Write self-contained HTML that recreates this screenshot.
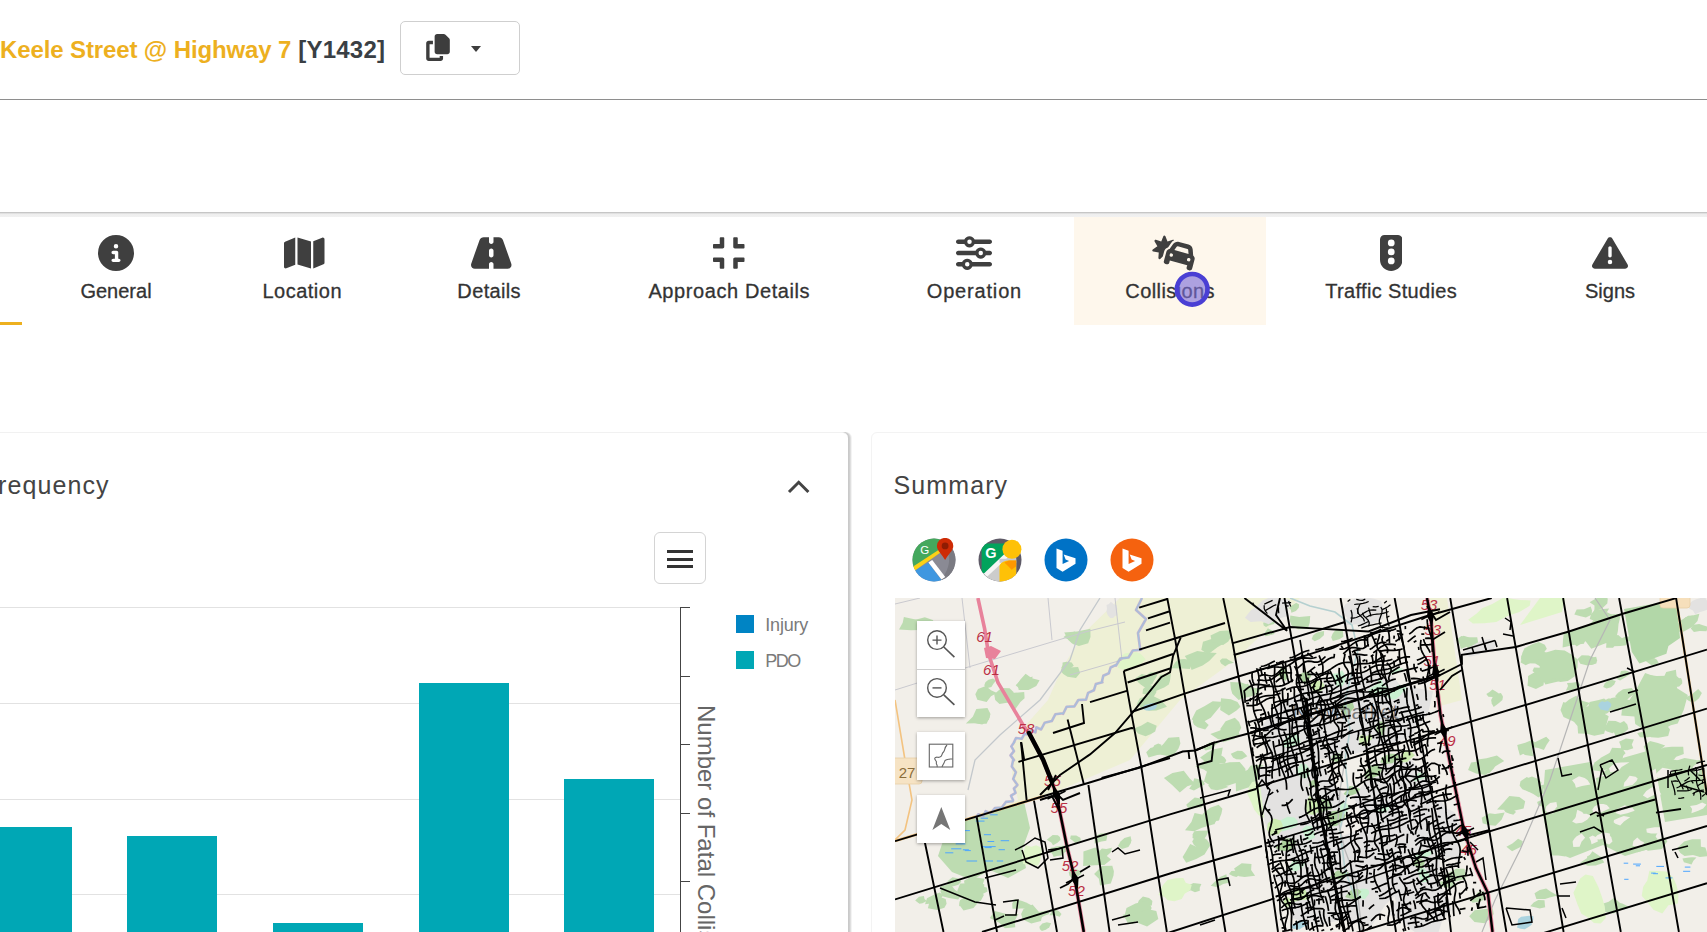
<!DOCTYPE html>
<html><head><meta charset="utf-8"><title>Keele Street @ Highway 7</title>
<style>
html,body{margin:0;padding:0;background:#fff;}
body{width:1707px;height:932px;overflow:hidden;position:relative;font-family:"Liberation Sans",sans-serif;color:#333;}
.abs{position:absolute;}
#title{left:0px;top:35px;font-size:24px;font-weight:bold;line-height:30px;white-space:nowrap;color:#EDB01F;letter-spacing:-0.12px;}
#title span{color:#3a3f44;letter-spacing:0.25px;margin-left:0.3px;}
#copybtn{left:400px;top:21px;width:118px;height:52px;border:1px solid #cfcfcf;border-radius:5px;background:#fff;}
#caret{left:471px;top:46px;width:0;height:0;border-left:5.5px solid transparent;border-right:5.5px solid transparent;border-top:6px solid #3d3d3d;}
#hr1{left:0;top:99px;width:1707px;height:1px;background:#8e8e8e;}
#hr2{left:0;top:212px;width:1707px;height:5px;background:linear-gradient(#c6c6c6 0,#c6c6c6 20%,#e0e0e0 20%,#e0e0e0 40%,#eeeeee 40%,#f1f1f1 100%);}
.tab{position:absolute;top:217px;height:108px;}
.tab .lbl{position:absolute;left:50%;transform:translateX(-50%);top:60px;line-height:28px;font-size:20px;color:#333;white-space:nowrap;-webkit-text-stroke:0.3px #333;}
.tab svg{position:absolute;top:17.500px;height:36px;fill:#3f3f3f;}
#underline{left:0;top:322px;width:22px;height:3px;background:#EDB01F;}
#cursor{left:1174.700px;top:271.700px;width:26px;height:26px;border-radius:50%;border:4.500px solid #4a3fd4;background:rgba(122,108,216,0.62);}
.card{position:absolute;background:#fff;}
.h5{position:absolute;font-size:25px;color:#444;white-space:nowrap;line-height:30px;}
.grid{position:absolute;left:0;width:681px;height:1px;background:#e2e2e2;}
.bar{position:absolute;width:90px;background:#00A7B5;bottom:0;}
.tick{position:absolute;left:681px;width:9px;height:1px;background:#444;}
.leg{position:absolute;left:736px;width:18px;height:18px;}
.legt{position:absolute;left:765.300px;font-size:18px;line-height:22px;color:#7a7a7a;white-space:nowrap;}
.mbtn{position:absolute;left:917px;width:48px;background:#fff;box-shadow:0 1px 3px rgba(0,0,0,0.35);}
</style></head><body>
<div id="title" class="abs">Keele Street @ Highway 7 <span>[Y1432]</span></div>
<div id="copybtn" class="abs"></div>
<svg class="abs" style="left:426px;top:34px;width:24px;height:27px;fill:#3d3d3d" viewBox="0 0 448 512"><path d="M208 0H332.100c12.700 0 24.900 5.100 33.900 14.100l67.900 67.900c9 9 14.100 21.200 14.100 33.900V336c0 26.500-21.500 48-48 48H208c-26.500 0-48-21.500-48-48V48c0-26.500 21.500-48 48-48zM48 128h80v64H64V448H256V416h64v48c0 26.500-21.500 48-48 48H48c-26.500 0-48-21.500-48-48V176c0-26.500 21.500-48 48-48z"/></svg>
<div id="caret" class="abs"></div>
<div id="hr1" class="abs"></div>
<div id="hr2" class="abs"></div>

<div class="abs" style="left:1074px;top:217px;width:192px;height:108px;background:#FEF7EC;"></div>

<div class="tab" style="left:66px;width:100px;"><svg viewBox="0 0 512 512" style="left:32px;width:36px"><path d="M256 512A256 256 0 1 0 256 0a256 256 0 1 0 0 512zM216 336h24V272H216c-13.300 0-24-10.700-24-24s10.700-24 24-24h48c13.300 0 24 10.700 24 24v88h8c13.300 0 24 10.700 24 24s-10.700 24-24 24H216c-13.300 0-24-10.700-24-24s10.700-24 24-24zm40-208a32 32 0 1 1 0 64 32 32 0 1 1 0-64z"/></svg><div class="lbl">General</div></div>

<div class="tab" style="left:252px;width:100px;"><svg viewBox="0 0 576 512" style="left:32px;width:40.500px"><path d="M384 476.100L192 421.200V35.900L384 90.800V476.100zm32-1.200V88.400L543.100 37.500c15.800-6.300 32.900 5.300 32.900 22.300V394.600c0 9.800-6 18.600-15.100 22.300L416 474.800zM15.100 95.100L160 37.200V423.600L32.900 474.500C17.100 480.800 0 469.200 0 452.200V117.400c0-9.800 6-18.600 15.100-22.300z"/></svg><div class="lbl" style="letter-spacing:0.50px;margin-left:0.25px">Location</div></div>

<div class="tab" style="left:439px;width:100px;"><svg viewBox="0 0 576 512" style="left:32px;width:40.500px"><path d="M256 32H181.200c-27.100 0-51.300 17.100-60.300 42.600L3.100 407.200C1.100 413 0 419.200 0 425.400C0 455.500 24.500 480 54.600 480H256V416c0-17.700 14.300-32 32-32s32 14.300 32 32v64H521.400c30.200 0 54.600-24.500 54.600-54.600c0-6.200-1.100-12.400-3.100-18.200L455.100 74.600C446 49.100 421.900 32 394.800 32H320V96c0 17.700-14.300 32-32 32s-32-14.300-32-32V32zm64 192v64c0 17.700-14.300 32-32 32s-32-14.300-32-32V224c0-17.700 14.300-32 32-32s32 14.300 32 32z"/></svg><div class="lbl" style="letter-spacing:0.35px;margin-left:0.17px">Details</div></div>

<div class="tab" style="left:679px;width:100px;"><svg viewBox="0 0 448 512" style="left:34px;width:31.500px"><path d="M436 192H312c-13.300 0-24-10.700-24-24V44c0-6.600 5.400-12 12-12h40c6.600 0 12 5.400 12 12v84h84c6.600 0 12 5.400 12 12v40c0 6.600-5.400 12-12 12zm-276-24V44c0-6.600-5.400-12-12-12h-40c-6.600 0-12 5.400-12 12v84H12c-6.600 0-12 5.400-12 12v40c0 6.600 5.400 12 12 12h124c13.300 0 24-10.700 24-24zm0 300V344c0-13.300-10.700-24-24-24H12c-6.600 0-12 5.400-12 12v40c0 6.600 5.400 12 12 12h84v84c0 6.600 5.400 12 12 12h40c6.600 0 12-5.400 12-12zm192 0v-84h84c6.600 0 12-5.400 12-12v-40c0-6.600-5.400-12-12-12H312c-13.300 0-24 10.700-24 24v124c0 6.600 5.400 12 12 12h40c6.600 0 12-5.400 12-12z"/></svg><div class="lbl" style="letter-spacing:0.59px;margin-left:0.29px">Approach Details</div></div>

<div class="tab" style="left:924px;width:100px;"><svg viewBox="0 0 512 512" style="left:32px;width:36px"><path d="M0 416c0 17.700 14.300 32 32 32l54.700 0c12.300 28.300 40.500 48 73.300 48s61-19.700 73.300-48L480 448c17.700 0 32-14.300 32-32s-14.300-32-32-32l-246.700 0c-12.300-28.300-40.500-48-73.300-48s-61 19.700-73.300 48L32 384c-17.700 0-32 14.300-32 32zm128 0a32 32 0 1 1 64 0 32 32 0 1 1 -64 0zM320 256a32 32 0 1 1 64 0 32 32 0 1 1 -64 0zm32-80c-32.800 0-61 19.700-73.300 48L32 224c-17.700 0-32 14.300-32 32s14.300 32 32 32l246.700 0c12.300 28.300 40.500 48 73.300 48s61-19.700 73.300-48l54.700 0c17.700 0 32-14.300 32-32s-14.300-32-32-32l-54.700 0c-12.300-28.300-40.500-48-73.300-48zM192 128a32 32 0 1 1 0-64 32 32 0 1 1 0 64zm73.300-64C253 35.700 224.800 16 192 16s-61 19.700-73.300 48L32 64C14.300 64 0 78.300 0 96s14.300 32 32 32l86.700 0c12.300 28.300 40.500 48 73.300 48s61-19.700 73.300-48L480 128c17.700 0 32-14.300 32-32s-14.300-32-32-32L265.300 64z"/></svg><div class="lbl" style="letter-spacing:0.83px;margin-left:0.41px">Operation</div></div>

<div class="tab" style="left:1120px;width:100px;"><svg viewBox="0 0 640 512" style="left:32px;width:45px"><path d="M176 8c-6.600 0-12.400 4-14.900 10.100l-29.400 74L55.600 68.900c-6.300-1.900-13.100 .2-17.200 5.300s-4.600 12.200-1.400 17.900l39.500 69.100L10.900 206.400c-5.400 3.700-8 10.300-6.500 16.700s6.700 11.200 13.100 12.200l78.700 12.200L90.600 327c-.5 6.500 3.100 12.700 9 15.500s12.900 1.800 17.800-2.600l35.300-32.500 9.500-35.400 10.400-38.600c8-29.900 30.500-52.100 57.900-60.900l41-59.200c11.300-16.300 26.400-28.900 43.500-37.200c-.4-.6-.8-1.200-1.300-1.800c-4.100-5.100-10.900-7.200-17.200-5.300L220.300 92.100l-29.400-74C188.400 12 182.600 8 176 8zM367.700 161.500l135.600 36.300c6.500 1.800 11.300 7.400 11.800 14.200l4.600 56.500-201.500-54 32.200-46.600c3.800-5.600 10.800-8.100 17.300-6.400zm-69.900-30l-47.900 69.300c-21.600 3-40.300 18.600-46.300 41l-10.400 38.600-16.600 61.800-8.300 30.900c-4.600 17.100 5.600 34.600 22.600 39.200l15.500 4.100c17.100 4.600 34.600-5.600 39.200-22.600l8.300-30.900 247.300 66.300-8.300 30.900c-4.600 17.100 5.600 34.600 22.600 39.200l15.500 4.100c17.100 4.600 34.600-5.600 39.200-22.600l8.300-30.900L595 388l10.400-38.600c6-22.400-2.500-45.200-19.600-58.700l-6.800-84c-2.700-33.700-26.400-62-59-70.800L384.200 99.700c-32.700-8.800-67.300 4-86.500 31.800zm-17 131a24 24 0 1 1 -12.400 46.400 24 24 0 1 1 12.400-46.400zm217.900 83.200A24 24 0 1 1 545 358.100a24 24 0 1 1 -46.400-12.400z"/></svg><div class="lbl" style="letter-spacing:0.41px;margin-left:0.20px">Collisions</div></div>

<div class="tab" style="left:1341px;width:100px;"><svg viewBox="0 0 320 512" style="left:38.750px;width:22.500px"><path d="M64 0C28.700 0 0 28.700 0 64V352c0 88.400 71.600 160 160 160s160-71.600 160-160V64c0-35.300-28.700-64-64-64H64zm96 416a48 48 0 1 1 0-96 48 48 0 1 1 0 96zm48-176a48 48 0 1 1 -96 0 48 48 0 1 1 96 0zM160 160a48 48 0 1 1 0-96 48 48 0 1 1 0 96z"/></svg><div class="lbl" style="letter-spacing:0.35px;margin-left:0.17px">Traffic Studies</div></div>

<div class="tab" style="left:1560px;width:100px;"><svg viewBox="0 0 512 512" style="left:32px;width:36px"><path d="M256 32c14.200 0 27.300 7.500 34.500 19.800l216 368c7.300 12.400 7.300 27.700 .2 40.100S486.300 480 472 480H40c-14.300 0-27.600-7.700-34.700-20.100s-7-27.800 .2-40.100l216-368C228.700 39.500 241.800 32 256 32zm0 128c-13.300 0-24 10.700-24 24V296c0 13.300 10.700 24 24 24s24-10.700 24-24V184c0-13.300-10.700-24-24-24zm32 224a32 32 0 1 0 -64 0 32 32 0 1 0 64 0z"/></svg><div class="lbl">Signs</div></div>

<div id="underline" class="abs"></div>
<svg class="abs" style="left:1170px;top:267px;width:44px;height:44px" viewBox="0 0 44 44"><circle cx="22.200" cy="22.300" r="15.300" fill="rgba(122,108,216,0.62)" stroke="#4a3fd4" stroke-width="4.600"/></svg>

<!-- left card -->
<div class="card" style="left:-20px;top:432px;width:868px;height:520px;border-top:1px solid #f1f1f1;border-radius:0 6px 0 0;box-shadow:1px 0 0 #c9c9c9,2px 0 0 #cfcfcf,3px 0 0 #dfdfdf,4px 0 0 #f3f3f3;"></div>
<div class="h5" style="left:-2px;top:469.500px;letter-spacing:1.100px">requency</div>
<svg class="abs" style="left:785px;top:477px;width:28px;height:20px" viewBox="0 0 28 20"><path d="M4 15 L13.700 5.300 L23.400 15" fill="none" stroke="#444" stroke-width="3"/></svg>
<div class="abs" style="left:654px;top:532px;width:50px;height:50px;border:1px solid #d4d4d4;border-radius:6px;background:#fff;"></div>
<div class="abs" style="left:667px;top:550px;width:26px;height:3px;background:#333;"></div>
<div class="abs" style="left:667px;top:557.500px;width:26px;height:3px;background:#333;"></div>
<div class="abs" style="left:667px;top:565px;width:26px;height:3px;background:#333;"></div>

<div class="grid" style="top:607px"></div>
<div class="grid" style="top:703px"></div>
<div class="grid" style="top:799px"></div>
<div class="grid" style="top:894px"></div>
<div class="bar" style="left:-18px;top:827px"></div>
<div class="bar" style="left:127px;top:836px"></div>
<div class="bar" style="left:273px;top:923px"></div>
<div class="bar" style="left:418.500px;top:683px"></div>
<div class="bar" style="left:564px;top:779px"></div>
<div class="abs" style="left:680px;top:607px;width:1px;height:330px;background:#444;"></div>
<div class="tick" style="top:607px"></div>
<div class="tick" style="top:676px"></div>
<div class="tick" style="top:744px"></div>
<div class="tick" style="top:813px"></div>
<div class="tick" style="top:881px"></div>
<div class="leg" style="top:615px;background:#0084C4;"></div>
<div class="legt" style="top:613.500px;letter-spacing:-0.200px">Injury</div>
<div class="leg" style="top:651px;background:#00A7B5;"></div>
<div class="legt" style="top:649.500px;letter-spacing:-1.500px">PDO</div>
<div class="abs" style="left:717.600px;top:705px;transform-origin:0 0;transform:rotate(90deg);font-size:24px;line-height:24px;color:#666;white-space:nowrap;">Number of Fatal Collisions</div>

<!-- right card -->
<div class="card" style="left:871px;top:432px;width:860px;height:520px;border:1px solid #f3f3f3;border-radius:6px 0 0 0;"></div>
<div class="h5" style="left:893.500px;top:469.500px;letter-spacing:1.100px">Summary</div>

<svg class="abs" style="left:911.5px;top:537.500px;width:44px;height:44px" viewBox="0 0 44 44">
<defs><clipPath id="c1"><circle cx="22" cy="22" r="21.500"/></clipPath></defs>
<g clip-path="url(#c1)">
<rect width="44" height="44" fill="#8A8A94"/>
<path d="M36 14 C39 24 36 34 27 44 L44 44 L44 0 Z" fill="#7A7A82"/>
<polygon points="0,0 34,0 34,8 0,30" fill="#44A85D"/>
<polygon points="0,36 3,32.500 16.400,24.500 29.500,42 29,44 0,44" fill="#3F97E0"/>
<polygon points="0,29.300 28,10.900 30,13.500 1.500,33.500 0,34" fill="#FBD116"/>
<polygon points="16.400,24.500 20.200,21.900 33.300,39 29.500,41.600" fill="#ffffff"/>
</g>
<path d="M33.100 22 C30 16.500 24.900 12.600 24.900 8.100 A8.200 8.200 0 0 1 41.300 8.100 C41.300 12.600 36.200 16.500 33.100 22 Z" fill="#CE2B05"/>
<circle cx="33.100" cy="7.900" r="3.400" fill="#8E1C03"/>
<text x="12.700" y="15.600" font-family="Liberation Sans, sans-serif" font-size="11.500" fill="#fff" text-anchor="middle">G</text>
</svg>
<svg class="abs" style="left:977.5px;top:537.500px;width:44px;height:44px" viewBox="0 0 44 44">
<defs><clipPath id="c2"><circle cx="22" cy="22" r="21.500"/></clipPath></defs>
<g clip-path="url(#c2)">
<rect width="44" height="44" fill="#5E5A67"/>
<polygon points="28,19.200 38.200,19.200 38.200,44 6,44 6,38.600" fill="#CCCCCC"/>
<polygon points="25.700,14 30,19.200 9.300,38.600 5,35.600" fill="#F5F5F5"/>
<path d="M3.600 7.400 L5.100 5.500 L28 5.500 L28 14.500 L5.900 35.600 L3.600 33.700 Z" fill="#02A35C"/>
<rect x="21.500" y="20.800" width="16.700" height="4" fill="#C9C9D2"/>
<path d="M21.500 44 L21.500 28 C23 24 27 22.600 31 22.600 L38.200 22.600 L38.200 44 Z" fill="#FEC107"/>
<polygon points="26.400,24.500 31,22.600 38.200,22.600 38.200,28.300 33.700,31.800" fill="#FF9800"/>
</g>
<circle cx="33.900" cy="11.200" r="9.500" fill="#FEC107"/>
<text x="13" y="19.500" font-family="Liberation Sans, sans-serif" font-size="14.500" font-weight="bold" fill="#fff" text-anchor="middle">G</text>
</svg>
<svg class="abs" style="left:1043.5px;top:537.500px;width:44px;height:44px" viewBox="0 0 44 44">
<circle cx="22" cy="22" r="21.500" fill="#0072C6"/>
<polygon points="12.500,10.400 18.600,12.700 18.600,26 25.100,23 21.600,21.500 19.700,16.500 31.500,20.300 31.500,25.700 18.600,33.700 12.500,29.900" fill="#fff"/>
</svg>
<svg class="abs" style="left:1109.5px;top:537.500px;width:44px;height:44px" viewBox="0 0 44 44">
<circle cx="22" cy="22" r="21.500" fill="#F5620F"/>
<polygon points="12.500,10.400 18.600,12.700 18.600,26 25.100,23 21.600,21.500 19.700,16.500 31.500,20.300 31.500,25.700 18.600,33.700 12.500,29.900" fill="#fff"/>
</svg>

<div class="abs" id="map" style="left:895px;top:598px;width:812px;height:334px;overflow:hidden;background:#f2efe9;">
<svg viewBox="895 598 812 334" width="812" height="334" style="position:absolute;left:0;top:0">
<rect x="895" y="598" width="812" height="334" fill="#f2efe9"/>
<polygon points="1142.0,598.0 1136.0,610.0 1146.0,619.0 1138.0,633.0 1140.0,648.0 1115.0,664.0 1101.0,681.0 1085.0,698.0 1062.0,712.0 1040.0,728.0 1014.0,742.0 1012.0,775.0 1018.0,800.0 975.0,815.0 985.0,813.0 1060.0,790.0 1130.0,760.0 1180.0,700.0 1235.0,660.0 1300.0,598.0" fill="#eef0d5" />
<polygon points="1142.0,598.0 1120.0,598.0 1085.0,632.0 1062.0,668.0 1048.0,700.0 1025.0,726.0 1040.0,728.0 1062.0,712.0 1085.0,698.0 1101.0,681.0 1115.0,664.0 1140.0,648.0 1138.0,633.0 1146.0,619.0 1136.0,610.0" fill="#eef0d5" />
<polygon points="1427.0,598.0 1447.0,598.0 1462.0,700.0 1440.0,706.0" fill="#eef0d5" />
<polygon points="1540.0,598.0 1565.0,598.0 1562.0,612.0 1520.0,625.0" fill="#dff5c8" />
<polygon points="984.2,862.9 982.7,868.9 976.7,872.6 970.2,877.1 968.4,872.4 965.7,868.7 972.1,865.0 977.3,863.3" fill="#bddcb1" />
<polygon points="986.8,887.6 987.5,891.4 982.2,894.2 977.8,894.4 972.5,894.0 977.2,890.0 978.4,885.9 982.9,886.8" fill="#bddcb1" />
<polygon points="981.0,889.1 978.2,892.2 974.1,894.4 970.7,892.5 969.1,890.7 969.5,888.4 972.9,885.3 977.7,886.7" fill="#bddcb1" />
<polygon points="984.6,878.7 982.7,884.4 975.5,887.0 968.8,889.2 964.9,886.1 964.0,880.8 971.5,876.4 977.8,877.7" fill="#bddcb1" />
<polygon points="984.2,887.4 985.9,890.3 981.1,893.0 975.9,892.2 971.7,890.0 975.7,886.7 979.1,883.6 984.3,884.2" fill="#bddcb1" />
<polygon points="983.9,895.0 980.7,900.9 970.7,898.1 960.1,897.8 957.3,890.8 960.2,883.4 973.1,883.3 979.7,889.7" fill="#bddcb1" />
<polygon points="966.8,901.5 965.9,903.4 963.5,904.5 959.1,906.3 959.3,903.3 959.6,901.3 962.3,899.5 967.1,898.3" fill="#bddcb1" />
<polygon points="962.3,894.1 958.2,899.5 949.0,897.9 942.4,896.2 940.5,891.8 940.8,886.0 950.5,884.2 955.1,890.1" fill="#bddcb1" />
<polygon points="961.4,881.6 958.4,884.8 954.3,885.9 949.6,887.1 947.3,884.6 947.7,881.1 952.5,877.2 958.8,878.4" fill="#bddcb1" />
<polygon points="981.4,892.3 980.2,900.1 973.5,907.9 963.5,910.6 959.9,905.7 960.0,900.2 966.2,896.1 973.3,890.8" fill="#bddcb1" />
<polygon points="1059.9,837.1 1060.6,839.7 1057.5,842.7 1053.0,845.2 1051.3,842.5 1046.7,839.8 1052.7,835.0 1057.9,835.3" fill="#bddcb1" />
<polygon points="1066.6,845.6 1066.9,851.3 1059.5,855.3 1053.6,856.9 1052.1,853.6 1052.3,850.6 1054.9,846.8 1059.9,845.9" fill="#bddcb1" />
<polygon points="1081.0,840.6 1078.0,841.8 1075.0,843.1 1072.9,840.8 1070.1,838.8 1070.8,835.6 1076.2,835.4 1080.3,837.7" fill="#bddcb1" />
<polygon points="1064.2,852.1 1063.1,855.7 1057.3,855.6 1053.6,854.2 1049.0,851.9 1050.8,847.8 1057.4,846.7 1063.3,848.5" fill="#bddcb1" />
<polygon points="1081.5,873.2 1078.7,875.7 1075.7,877.1 1071.5,877.7 1069.4,875.5 1068.7,871.9 1074.1,868.4 1079.5,870.5" fill="#bddcb1" />
<polygon points="1131.4,840.2 1130.9,843.0 1128.4,846.9 1121.9,848.9 1118.0,846.1 1120.5,841.6 1124.4,837.9 1130.6,836.3" fill="#bddcb1" />
<polygon points="1111.2,859.4 1104.3,865.0 1094.9,865.2 1083.1,865.9 1083.4,858.7 1083.4,851.4 1095.3,847.6 1103.9,853.8" fill="#bddcb1" />
<polygon points="1113.9,871.3 1113.5,875.6 1110.8,883.6 1100.0,885.4 1098.9,878.8 1094.1,873.9 1102.0,866.0 1112.3,865.7" fill="#bddcb1" />
<polygon points="1111.9,847.8 1110.6,852.5 1106.8,856.1 1101.6,859.2 1099.6,856.1 1097.7,853.0 1101.9,848.6 1106.3,849.0" fill="#bddcb1" />
<polygon points="1107.0,837.6 1106.3,840.7 1101.5,841.6 1094.7,843.5 1094.6,839.3 1095.7,836.0 1100.4,833.6 1107.4,833.3" fill="#bddcb1" />
<polygon points="1141.6,916.7 1136.5,920.2 1132.8,924.0 1127.3,922.4 1126.0,919.4 1122.5,914.7 1131.1,914.0 1137.8,913.1" fill="#bddcb1" />
<polygon points="1152.4,900.9 1151.8,905.5 1144.6,905.9 1138.7,907.3 1137.6,903.7 1138.8,900.5 1142.9,896.5 1149.1,897.9" fill="#bddcb1" />
<polygon points="1151.7,907.9 1148.2,914.8 1139.5,919.6 1128.4,920.7 1124.9,914.6 1126.5,908.0 1135.5,903.5 1148.1,900.6" fill="#bddcb1" />
<polygon points="1156.3,911.1 1158.3,919.0 1147.1,926.5 1138.2,923.1 1134.1,920.2 1132.2,914.8 1140.8,911.4 1148.3,909.2" fill="#bddcb1" />
<polygon points="1014.7,920.8 1015.3,927.2 1004.8,928.2 999.2,922.8 989.8,917.9 994.8,911.0 1006.5,913.9 1018.5,913.9" fill="#bddcb1" />
<polygon points="1042.2,915.3 1041.0,921.1 1031.3,923.5 1022.8,919.4 1021.1,913.9 1023.6,908.8 1032.5,904.4 1038.3,911.3" fill="#bddcb1" />
<polygon points="1049.9,911.4 1048.7,914.3 1045.0,915.4 1040.4,918.1 1038.1,915.5 1038.3,912.0 1043.6,911.2 1046.6,910.5" fill="#bddcb1" />
<polygon points="1032.9,906.1 1026.3,908.4 1021.1,908.6 1012.5,908.7 1012.2,903.4 1014.9,899.1 1022.1,900.9 1026.1,902.6" fill="#bddcb1" />
<polygon points="1061.5,913.9 1059.7,916.8 1054.7,915.3 1049.3,915.3 1051.3,912.3 1050.3,908.9 1055.6,909.5 1059.0,911.3" fill="#bddcb1" />
<polygon points="1051.1,923.2 1049.3,927.2 1045.8,929.8 1041.9,931.0 1039.9,929.3 1039.4,926.7 1042.3,923.4 1046.9,922.3" fill="#bddcb1" />
<polygon points="943.1,895.3 940.3,899.6 937.5,903.4 932.7,903.3 925.0,904.2 927.0,898.3 933.4,895.1 939.6,892.4" fill="#bddcb1" />
<polygon points="946.6,903.7 944.4,907.8 937.3,910.0 927.9,908.3 929.3,902.5 929.5,897.2 938.2,896.2 945.7,898.9" fill="#bddcb1" />
<polygon points="924.5,899.0 926.8,901.0 922.5,903.2 919.5,903.7 917.8,902.5 915.2,900.4 919.0,896.7 923.9,896.1" fill="#bddcb1" />
<polygon points="1031.8,681.5 1032.2,684.7 1027.2,686.6 1019.9,689.1 1015.7,685.3 1019.8,680.7 1025.4,679.0 1032.6,676.5" fill="#bddcb1" />
<polygon points="1032.3,684.5 1031.6,687.1 1028.1,688.3 1024.5,689.2 1024.4,686.9 1024.0,685.1 1026.8,683.9 1030.0,683.0" fill="#bddcb1" />
<polygon points="1039.6,680.3 1036.3,686.1 1028.5,690.0 1018.7,690.1 1017.7,684.2 1020.2,679.8 1025.6,673.7 1031.9,678.3" fill="#bddcb1" />
<polygon points="1073.8,665.7 1070.7,668.1 1066.2,669.2 1061.3,667.9 1062.5,664.9 1062.6,662.4 1066.7,661.7 1071.7,662.4" fill="#bddcb1" />
<polygon points="1080.1,673.1 1076.0,678.0 1067.5,676.8 1063.2,674.1 1060.7,670.9 1062.0,667.0 1068.6,667.4 1078.1,667.1" fill="#bddcb1" />
<polygon points="997.0,693.0 991.0,696.2 986.6,701.9 977.3,699.8 975.3,694.2 978.0,689.1 985.8,686.0 991.0,690.2" fill="#bddcb1" />
<polygon points="996.2,680.4 993.4,683.7 991.4,687.1 985.8,688.5 984.3,685.3 985.4,682.3 988.4,679.8 993.0,678.5" fill="#bddcb1" />
<polygon points="989.3,712.8 989.8,717.0 986.6,723.8 978.9,723.7 972.5,722.8 976.9,716.8 980.2,713.1 985.9,710.2" fill="#bddcb1" />
<polygon points="990.5,713.9 988.8,719.8 982.3,724.4 975.8,723.3 965.9,723.4 972.8,716.8 976.3,709.1 987.5,708.0" fill="#bddcb1" />
<polygon points="924.2,626.5 918.7,630.0 911.2,630.2 899.0,629.6 902.7,622.7 903.9,616.9 913.2,618.9 922.2,620.4" fill="#bddcb1" />
<polygon points="935.5,624.8 937.8,632.3 925.4,633.2 919.4,628.9 917.1,625.4 915.6,619.8 924.8,617.3 932.8,620.0" fill="#bddcb1" />
<polygon points="1079.1,638.5 1080.8,642.8 1073.8,644.4 1070.1,640.3 1063.4,637.3 1067.9,633.5 1074.7,631.6 1079.2,635.6" fill="#bddcb1" />
<polygon points="1090.5,637.1 1088.2,643.3 1078.9,645.9 1072.1,643.5 1068.3,640.0 1064.2,632.5 1077.0,631.5 1090.4,628.7" fill="#bddcb1" />
<polygon points="1013.0,691.5 1016.1,696.5 1008.4,702.5 999.5,703.9 995.2,700.0 994.2,694.2 1001.4,687.9 1009.6,688.2" fill="#bddcb1" />
<polygon points="1024.6,698.2 1020.4,701.9 1015.5,708.9 1009.0,703.2 1002.9,700.0 1006.8,695.1 1014.1,692.8 1024.2,691.9" fill="#bddcb1" />
<polygon points="1170.0,680.7 1168.8,684.5 1164.2,687.5 1155.2,691.2 1153.0,685.7 1156.4,681.1 1160.4,674.8 1170.8,674.0" fill="#bddcb1" />
<polygon points="1157.7,674.0 1156.4,677.1 1154.2,680.0 1150.3,681.1 1146.2,680.7 1144.9,676.8 1149.9,672.6 1155.0,672.3" fill="#bddcb1" />
<polygon points="1156.0,689.1 1156.4,692.2 1153.1,697.8 1147.5,694.7 1142.5,693.7 1143.0,689.1 1148.5,684.4 1154.2,686.6" fill="#bddcb1" />
<polygon points="1155.2,678.0 1152.5,683.8 1145.3,687.8 1140.4,684.2 1138.2,682.3 1135.4,678.3 1141.8,674.0 1148.6,675.8" fill="#bddcb1" />
<polygon points="1167.0,706.8 1156.4,710.4 1149.1,710.7 1142.8,708.8 1136.7,704.3 1139.8,698.2 1150.5,694.8 1160.7,699.8" fill="#bddcb1" />
<polygon points="1162.3,749.7 1165.3,754.2 1157.2,755.1 1148.6,757.4 1146.2,752.2 1150.4,748.1 1155.8,746.6 1161.2,746.5" fill="#bddcb1" />
<polygon points="1161.4,744.7 1161.5,748.0 1157.8,750.9 1154.2,751.5 1150.2,751.4 1152.9,747.9 1154.3,745.2 1158.3,743.5" fill="#bddcb1" />
<polygon points="1180.4,743.5 1178.5,748.6 1172.6,756.7 1161.0,754.7 1159.3,748.2 1163.8,743.6 1168.4,737.8 1179.2,737.0" fill="#bddcb1" />
<polygon points="1155.2,731.5 1151.0,734.0 1145.6,736.3 1138.4,733.8 1133.7,728.5 1141.0,725.8 1147.7,721.8 1156.7,725.8" fill="#bddcb1" />
<polygon points="1216.8,653.1 1209.2,660.9 1202.6,665.4 1191.6,670.1 1189.3,663.1 1184.8,655.9 1197.3,651.0 1205.7,652.3" fill="#bddcb1" />
<polygon points="1191.4,664.6 1189.9,668.9 1182.6,668.6 1171.5,668.3 1175.5,662.1 1178.9,659.4 1184.1,658.9 1191.3,660.1" fill="#bddcb1" />
<polygon points="1234.1,662.8 1228.6,663.9 1225.2,666.3 1221.1,663.6 1219.8,660.7 1222.1,658.4 1226.4,658.5 1229.1,660.2" fill="#bddcb1" />
<polygon points="1223.8,701.9 1215.9,711.5 1210.7,717.7 1199.9,723.7 1191.7,719.5 1196.2,710.5 1204.4,706.3 1212.7,701.3" fill="#bddcb1" />
<polygon points="1219.2,742.4 1213.9,746.0 1211.6,749.0 1205.7,750.6 1202.4,747.7 1206.9,744.3 1209.6,742.6 1212.9,742.3" fill="#bddcb1" />
<polygon points="1240.5,706.7 1236.5,710.5 1228.9,715.4 1220.2,710.0 1220.5,704.3 1221.0,698.2 1230.9,699.2 1237.5,702.0" fill="#bddcb1" />
<polygon points="1239.1,722.1 1241.2,727.7 1236.3,737.7 1223.4,742.2 1219.5,734.9 1220.8,728.3 1225.6,721.3 1234.8,717.7" fill="#bddcb1" />
<polygon points="1239.7,734.6 1233.5,739.2 1225.8,741.0 1217.8,739.1 1210.3,734.0 1220.0,730.5 1226.0,728.4 1236.8,727.9" fill="#bddcb1" />
<polygon points="1208.7,725.1 1205.2,729.5 1197.5,727.2 1194.0,724.8 1192.8,722.1 1193.2,718.6 1199.3,717.4 1204.3,720.8" fill="#bddcb1" />
<polygon points="1222.0,765.1 1219.2,771.3 1209.5,773.4 1203.9,769.4 1195.3,766.7 1202.4,762.3 1208.6,758.8 1215.7,761.2" fill="#bddcb1" />
<polygon points="1244.2,752.8 1247.3,756.2 1241.2,759.4 1236.2,759.3 1233.0,757.6 1230.8,753.7 1237.5,750.7 1242.1,751.0" fill="#bddcb1" />
<polygon points="1255.6,770.8 1258.3,778.2 1249.0,787.3 1236.0,791.5 1235.7,782.1 1233.7,777.3 1240.5,772.4 1247.8,769.9" fill="#bddcb1" />
<polygon points="1270.2,768.9 1263.9,776.8 1255.4,780.6 1244.3,784.6 1235.7,779.7 1245.9,772.2 1250.7,765.5 1261.5,764.8" fill="#bddcb1" />
<polygon points="1212.8,761.2 1213.8,764.1 1210.0,767.5 1205.8,766.9 1204.5,765.1 1203.4,762.9 1206.1,759.3 1210.3,760.1" fill="#bddcb1" />
<polygon points="1221.7,753.9 1220.2,757.8 1214.9,762.1 1205.6,762.2 1200.1,757.4 1207.3,752.5 1212.8,749.6 1222.8,747.4" fill="#bddcb1" />
<polygon points="1226.3,760.3 1224.9,763.7 1218.9,763.5 1213.9,761.5 1209.4,757.5 1212.6,753.1 1220.3,754.8 1224.2,757.3" fill="#bddcb1" />
<polygon points="1243.6,755.8 1243.0,758.6 1238.3,758.2 1233.5,757.6 1233.6,754.6 1236.2,753.2 1238.9,753.2 1242.8,753.3" fill="#bddcb1" />
<polygon points="1213.8,819.9 1213.0,822.7 1208.7,823.1 1205.2,823.0 1202.4,821.1 1202.4,817.6 1208.2,818.0 1212.4,817.5" fill="#bddcb1" />
<polygon points="1195.2,783.8 1187.3,786.2 1179.8,792.5 1172.1,785.1 1163.9,778.1 1172.5,772.9 1183.8,770.8 1189.6,778.3" fill="#bddcb1" />
<polygon points="1228.3,787.0 1221.6,789.3 1216.8,790.3 1211.1,789.2 1208.2,785.4 1211.7,782.2 1217.4,782.3 1222.4,783.4" fill="#bddcb1" />
<polygon points="1220.1,818.9 1216.2,821.0 1214.1,824.2 1211.0,821.9 1207.5,820.8 1209.1,818.0 1212.9,816.1 1216.5,817.3" fill="#bddcb1" />
<polygon points="1203.9,803.5 1201.6,807.4 1195.5,807.6 1188.5,809.0 1186.2,804.8 1189.9,801.4 1194.7,797.4 1202.7,798.7" fill="#bddcb1" />
<polygon points="1203.3,780.7 1204.9,784.3 1199.4,787.4 1193.9,790.6 1189.2,788.7 1192.5,783.8 1194.3,778.3 1200.0,779.4" fill="#bddcb1" />
<polygon points="1222.4,808.7 1221.4,813.8 1218.4,820.9 1211.4,819.1 1203.3,820.6 1202.6,813.9 1210.2,807.8 1218.6,804.7" fill="#bddcb1" />
<polygon points="1214.4,815.3 1214.6,824.1 1202.0,827.7 1194.3,831.3 1185.0,830.2 1191.4,822.1 1194.6,813.0 1204.3,815.0" fill="#bddcb1" />
<polygon points="1206.3,836.1 1203.9,839.2 1198.0,841.0 1192.5,837.9 1192.7,834.2 1194.2,831.2 1199.4,830.7 1208.8,830.6" fill="#bddcb1" />
<polygon points="1199.7,887.8 1199.8,890.8 1194.9,892.3 1190.7,890.2 1186.3,887.4 1190.1,884.5 1195.2,883.3 1201.4,884.0" fill="#bddcb1" />
<polygon points="1209.7,846.0 1204.5,854.4 1196.2,858.9 1186.2,862.7 1182.6,857.1 1186.1,851.3 1190.2,844.1 1197.5,847.3" fill="#bddcb1" />
<polygon points="1210.5,844.9 1206.6,849.7 1197.9,848.4 1193.8,844.7 1192.2,841.5 1194.1,838.3 1200.3,835.5 1207.0,839.7" fill="#bddcb1" />
<polygon points="1196.9,884.8 1193.6,888.1 1191.3,889.9 1187.7,891.6 1186.3,889.5 1185.7,887.1 1189.1,884.9 1193.6,883.0" fill="#bddcb1" />
<polygon points="1251.1,870.0 1255.1,875.7 1244.7,876.9 1238.9,876.2 1236.4,873.3 1234.1,868.5 1241.7,863.2 1251.5,864.0" fill="#bddcb1" />
<polygon points="1241.6,872.9 1239.5,875.1 1236.4,877.0 1232.7,875.9 1228.9,874.0 1231.4,871.0 1235.9,870.8 1240.8,869.9" fill="#bddcb1" />
<polygon points="1227.0,878.6 1230.7,882.2 1223.1,883.9 1217.4,887.2 1210.7,885.7 1216.5,880.1 1220.1,877.1 1226.4,874.3" fill="#bddcb1" />
<polygon points="1224.8,638.1 1223.9,643.6 1217.4,647.3 1207.9,654.5 1201.3,649.7 1203.0,641.7 1213.1,638.6 1222.3,631.5" fill="#bddcb1" />
<polygon points="1230.9,637.1 1228.3,641.4 1223.2,644.9 1217.5,643.8 1211.8,641.8 1210.5,635.6 1219.9,631.0 1230.8,630.3" fill="#bddcb1" />
<polygon points="1261.4,688.4 1257.5,694.1 1250.5,696.5 1242.7,698.4 1235.6,695.1 1243.0,689.6 1247.2,683.6 1252.8,687.8" fill="#bddcb1" />
<polygon points="1254.4,692.7 1246.7,696.1 1238.7,700.0 1232.3,693.8 1230.9,689.0 1230.2,681.9 1241.5,682.5 1250.8,686.1" fill="#bddcb1" />
<polygon points="1309.7,622.7 1307.9,628.5 1298.1,629.3 1291.5,625.4 1289.9,621.0 1290.3,615.5 1299.2,617.1 1310.2,616.1" fill="#bddcb1" />
<polygon points="1299.1,604.5 1298.8,607.8 1295.9,611.1 1291.4,612.7 1290.8,609.8 1288.9,607.9 1292.2,605.3 1296.3,602.7" fill="#bddcb1" />
<polygon points="1324.1,631.0 1323.9,635.2 1319.7,638.9 1314.6,641.2 1311.7,639.0 1313.1,635.4 1316.0,633.1 1318.9,632.1" fill="#bddcb1" />
<polygon points="1343.1,634.0 1343.4,636.8 1339.3,639.3 1332.8,641.0 1331.2,637.2 1332.7,633.6 1336.5,628.7 1342.9,630.4" fill="#bddcb1" />
<polygon points="1274.0,631.0 1274.4,633.9 1269.8,635.2 1265.4,636.2 1263.6,633.9 1265.6,631.4 1267.9,628.2 1271.1,630.1" fill="#bddcb1" />
<polygon points="1274.1,620.7 1274.3,624.1 1269.2,625.2 1266.0,627.0 1263.7,625.6 1263.1,622.8 1267.4,621.2 1270.8,619.8" fill="#bddcb1" />
<polygon points="1532.7,660.9 1530.2,663.1 1525.7,665.3 1520.7,662.4 1521.4,659.2 1521.2,655.4 1527.0,656.9 1533.6,657.0" fill="#bddcb1" />
<polygon points="1548.7,655.8 1547.2,660.8 1541.8,667.3 1535.2,663.5 1525.5,663.3 1533.6,657.6 1537.5,654.0 1543.8,653.3" fill="#bddcb1" />
<polygon points="1594.9,660.8 1593.6,664.3 1587.5,665.5 1580.3,663.8 1577.7,659.0 1581.7,655.2 1588.6,655.4 1593.7,657.4" fill="#bddcb1" />
<polygon points="1544.1,680.5 1543.5,685.2 1535.9,689.0 1527.5,685.8 1528.0,680.6 1528.1,675.9 1535.8,671.6 1542.1,676.7" fill="#bddcb1" />
<polygon points="1546.8,648.7 1544.1,652.2 1538.0,653.8 1531.0,651.9 1526.6,647.2 1532.7,644.0 1538.9,642.0 1544.8,644.8" fill="#bddcb1" />
<polygon points="1548.9,653.7 1541.4,659.2 1531.9,659.6 1520.8,659.5 1522.4,652.7 1524.6,648.1 1532.4,645.1 1538.5,649.4" fill="#bddcb1" />
<polygon points="1565.4,674.9 1561.6,680.7 1553.9,682.4 1545.4,684.5 1542.5,679.6 1542.2,673.5 1551.1,668.3 1559.5,671.3" fill="#bddcb1" />
<polygon points="1574.9,670.6 1574.9,676.3 1567.9,681.1 1560.3,682.1 1554.6,679.6 1556.7,673.8 1562.7,669.3 1569.3,669.0" fill="#bddcb1" />
<polygon points="1554.1,665.7 1552.6,669.4 1548.0,671.7 1544.1,670.6 1541.4,669.2 1542.2,666.3 1545.8,663.7 1550.1,664.3" fill="#bddcb1" />
<polygon points="1580.6,685.2 1576.9,688.2 1572.6,690.0 1565.9,690.4 1568.0,686.1 1567.0,683.1 1572.0,682.7 1577.9,681.7" fill="#bddcb1" />
<polygon points="1597.1,660.3 1596.3,663.5 1591.4,664.9 1586.5,664.8 1583.2,662.2 1586.1,659.1 1590.4,657.7 1596.2,656.7" fill="#bddcb1" />
<polygon points="1545.8,671.1 1548.3,676.4 1539.7,675.8 1535.7,673.5 1532.5,671.0 1534.0,667.5 1539.7,667.8 1545.5,667.6" fill="#bddcb1" />
<polygon points="1560.5,669.4 1562.7,673.3 1557.1,678.4 1550.2,677.7 1548.4,674.4 1545.9,670.5 1552.7,667.5 1557.6,667.6" fill="#bddcb1" />
<polygon points="1586.3,637.7 1583.9,643.7 1574.6,644.8 1562.6,647.4 1563.0,639.9 1563.7,633.7 1573.2,629.2 1584.5,631.0" fill="#bddcb1" />
<polygon points="1609.1,608.5 1605.2,615.1 1601.6,621.8 1594.3,620.7 1589.7,619.1 1591.0,614.4 1594.9,609.5 1600.9,609.2" fill="#bddcb1" />
<polygon points="1592.0,610.6 1591.6,614.7 1585.9,617.6 1580.5,616.3 1574.3,614.5 1576.7,609.5 1584.0,609.2 1590.7,606.5" fill="#bddcb1" />
<polygon points="1635.6,639.7 1631.1,641.1 1628.2,641.6 1621.9,642.6 1621.1,638.7 1624.9,636.7 1628.6,636.5 1631.8,637.4" fill="#bddcb1" />
<polygon points="1591.2,633.7 1589.9,639.4 1583.1,642.2 1576.7,646.6 1573.3,643.0 1572.9,638.2 1578.7,633.6 1586.1,631.0" fill="#bddcb1" />
<polygon points="1627.3,641.6 1626.2,645.3 1620.4,646.0 1613.9,646.2 1612.9,642.3 1616.0,639.7 1620.0,638.6 1623.6,639.6" fill="#bddcb1" />
<polygon points="1607.8,598.6 1607.3,603.4 1602.3,608.2 1594.4,611.6 1594.5,605.6 1589.6,602.3 1596.9,597.9 1603.7,595.8" fill="#bddcb1" />
<polygon points="1622.9,638.9 1616.1,643.4 1613.1,647.7 1606.1,647.8 1606.4,643.4 1604.1,639.8 1610.0,636.2 1618.2,635.0" fill="#bddcb1" />
<polygon points="1613.9,615.7 1613.0,624.0 1604.6,630.3 1594.6,637.1 1590.7,630.7 1589.9,624.5 1596.2,617.2 1606.6,612.1" fill="#bddcb1" />
<polygon points="1635.2,693.0 1629.7,697.2 1625.1,701.8 1618.7,699.3 1615.0,696.2 1618.3,692.5 1623.1,689.3 1631.8,688.1" fill="#bddcb1" />
<polygon points="1670.4,721.0 1671.0,724.8 1665.8,728.6 1658.7,729.9 1659.0,725.1 1656.0,721.7 1661.7,717.1 1668.3,717.8" fill="#bddcb1" />
<polygon points="1615.8,681.0 1614.2,684.5 1611.1,687.3 1606.6,688.6 1603.2,687.1 1604.7,683.5 1607.9,680.8 1612.1,680.0" fill="#bddcb1" />
<polygon points="1679.4,702.3 1676.8,708.8 1671.2,715.4 1664.1,713.1 1660.0,711.2 1661.8,707.0 1664.1,699.9 1674.7,697.2" fill="#bddcb1" />
<polygon points="1677.3,689.9 1671.1,694.2 1663.8,696.1 1655.5,694.4 1653.2,689.2 1655.7,684.1 1664.3,680.8 1676.3,682.4" fill="#bddcb1" />
<polygon points="1616.0,702.0 1614.8,705.6 1612.1,709.4 1607.7,709.2 1606.9,707.0 1605.7,705.2 1608.1,702.2 1613.0,700.0" fill="#bddcb1" />
<polygon points="1701.9,693.1 1699.0,698.2 1695.2,701.5 1691.1,702.0 1688.6,700.7 1684.7,697.8 1691.4,694.7 1698.2,689.1" fill="#bddcb1" />
<polygon points="1676.6,676.1 1681.7,680.6 1673.5,687.1 1662.9,690.0 1657.1,685.5 1663.2,678.7 1666.2,672.1 1675.9,669.7" fill="#bddcb1" />
<polygon points="1655.1,736.1 1649.3,737.1 1646.0,737.4 1640.0,737.2 1637.2,733.0 1643.3,731.8 1647.1,730.7 1653.3,731.8" fill="#bddcb1" />
<polygon points="1627.3,724.4 1628.4,728.9 1622.9,733.7 1615.8,737.0 1614.1,732.5 1610.0,728.9 1617.2,724.4 1624.0,720.9" fill="#bddcb1" />
<polygon points="1673.5,693.8 1669.1,698.3 1661.5,699.1 1656.4,696.4 1656.0,693.3 1653.3,688.0 1661.9,687.2 1669.6,688.9" fill="#bddcb1" />
<polygon points="1650.1,709.5 1643.0,714.2 1634.4,716.6 1621.3,715.6 1622.2,707.6 1623.9,700.7 1635.5,699.1 1648.5,701.3" fill="#bddcb1" />
<polygon points="1682.2,680.8 1682.2,683.4 1679.2,686.4 1674.3,687.2 1674.6,683.9 1672.3,681.8 1676.2,679.0 1681.0,678.1" fill="#bddcb1" />
<polygon points="1671.3,682.6 1668.3,690.0 1656.2,688.9 1650.2,685.4 1643.0,681.3 1645.5,674.4 1656.7,675.9 1667.8,675.7" fill="#bddcb1" />
<polygon points="1666.5,711.0 1669.0,715.3 1662.6,720.7 1655.4,720.5 1653.9,716.9 1649.9,713.1 1656.6,707.8 1663.0,709.1" fill="#bddcb1" />
<polygon points="1670.0,729.4 1668.2,736.0 1658.3,737.8 1651.0,737.3 1647.5,733.5 1645.2,727.1 1655.8,724.6 1665.8,724.0" fill="#bddcb1" />
<polygon points="1649.0,696.5 1646.1,701.3 1642.7,703.7 1638.6,706.8 1634.4,705.7 1637.3,701.4 1638.9,697.7 1643.3,697.1" fill="#bddcb1" />
<polygon points="1658.7,663.0 1655.1,664.7 1651.1,665.1 1648.3,662.9 1645.1,660.4 1648.6,658.7 1652.6,657.1 1656.9,659.7" fill="#bddcb1" />
<polygon points="1628.4,671.2 1629.5,674.4 1625.0,677.5 1620.1,680.5 1616.4,678.7 1619.9,674.5 1621.0,671.1 1625.1,670.4" fill="#bddcb1" />
<polygon points="1640.5,707.2 1634.5,710.7 1627.1,711.6 1622.0,707.7 1613.2,702.7 1618.5,696.8 1629.0,700.0 1633.5,703.0" fill="#bddcb1" />
<polygon points="1592.3,713.8 1580.9,716.2 1574.1,721.8 1563.5,717.1 1560.5,709.9 1563.3,702.0 1576.0,706.4 1582.6,708.4" fill="#bddcb1" />
<polygon points="1607.9,708.8 1607.0,712.7 1600.6,714.0 1595.4,711.9 1590.2,708.7 1595.1,705.3 1600.6,703.6 1606.0,705.5" fill="#bddcb1" />
<polygon points="1607.3,703.5 1607.8,706.9 1602.4,707.3 1597.5,705.3 1599.1,702.4 1599.7,700.1 1603.4,700.6 1608.7,700.5" fill="#bddcb1" />
<polygon points="1621.6,723.4 1617.9,728.9 1612.6,733.2 1607.0,731.4 1603.7,729.5 1605.7,726.1 1608.4,720.8 1615.7,721.0" fill="#bddcb1" />
<polygon points="1583.8,711.9 1580.7,715.9 1577.1,717.8 1572.7,719.4 1570.7,717.2 1568.8,713.8 1574.9,712.4 1580.5,708.9" fill="#bddcb1" />
<polygon points="1607.3,701.0 1606.0,704.9 1602.0,708.7 1593.4,712.6 1587.7,708.7 1589.6,701.9 1598.7,700.1 1604.1,698.6" fill="#bddcb1" />
<polygon points="1618.2,698.7 1613.8,708.1 1607.0,713.6 1600.6,714.8 1588.7,718.3 1591.6,708.9 1600.0,703.0 1608.2,698.4" fill="#bddcb1" />
<polygon points="1621.5,700.6 1625.2,704.9 1618.2,710.8 1611.4,709.9 1608.6,707.5 1608.9,703.9 1611.4,698.1 1619.1,696.8" fill="#bddcb1" />
<polygon points="1589.9,703.1 1584.7,708.3 1576.6,708.6 1571.6,706.8 1563.7,704.0 1569.2,699.4 1576.2,695.7 1581.2,700.4" fill="#bddcb1" />
<polygon points="1683.8,753.9 1676.3,756.7 1670.1,763.2 1661.7,757.4 1654.4,751.2 1664.1,747.5 1671.6,746.8 1683.2,746.8" fill="#bddcb1" />
<polygon points="1631.8,744.6 1633.3,748.2 1627.3,750.2 1621.1,749.7 1620.8,745.9 1619.1,741.7 1625.9,738.6 1633.9,739.4" fill="#bddcb1" />
<polygon points="1627.7,769.3 1630.1,774.2 1622.1,776.6 1616.0,773.0 1613.3,769.3 1615.8,765.4 1622.1,763.8 1625.9,767.0" fill="#bddcb1" />
<polygon points="1620.5,770.8 1618.5,774.1 1616.1,775.7 1612.7,778.3 1610.0,776.9 1610.4,773.8 1613.1,770.6 1616.5,771.2" fill="#bddcb1" />
<polygon points="1681.8,766.9 1681.6,769.8 1678.3,772.0 1675.3,772.4 1672.4,772.0 1673.7,769.4 1675.2,766.3 1679.9,764.3" fill="#bddcb1" />
<polygon points="1618.2,756.4 1618.1,764.3 1607.8,769.2 1599.8,771.2 1591.1,770.1 1594.6,762.4 1601.7,757.2 1611.8,751.7" fill="#bddcb1" />
<polygon points="1674.3,750.6 1676.0,754.7 1669.5,758.2 1662.5,759.2 1658.9,755.9 1660.0,751.2 1666.7,750.1 1671.6,748.1" fill="#bddcb1" />
<polygon points="1625.6,753.2 1620.7,758.0 1616.9,762.7 1609.0,763.5 1608.5,758.6 1608.6,755.0 1612.1,747.7 1622.2,748.2" fill="#bddcb1" />
<polygon points="1700.0,767.6 1688.9,769.9 1682.8,774.4 1676.0,769.5 1669.4,764.3 1676.9,760.6 1684.6,757.9 1696.3,759.9" fill="#bddcb1" />
<polygon points="1665.2,745.6 1658.7,751.0 1653.4,754.0 1645.7,755.7 1645.4,750.8 1643.6,746.4 1650.0,740.9 1657.9,743.0" fill="#bddcb1" />
<polygon points="1623.1,755.3 1622.7,758.9 1619.2,763.1 1612.9,765.2 1609.4,762.4 1610.2,758.1 1614.9,754.8 1621.3,751.1" fill="#bddcb1" />
<polygon points="1681.9,764.2 1683.0,769.4 1674.5,771.0 1666.7,770.1 1662.7,765.7 1666.5,761.0 1673.5,759.4 1679.5,760.8" fill="#bddcb1" />
<polygon points="1543.0,789.9 1543.5,793.1 1538.6,797.4 1533.3,794.1 1528.7,791.7 1531.2,787.6 1537.1,786.2 1545.5,784.2" fill="#bddcb1" />
<polygon points="1551.0,797.5 1548.9,802.0 1545.0,804.2 1541.4,806.4 1538.2,805.3 1537.1,801.9 1542.2,799.6 1545.6,798.1" fill="#bddcb1" />
<polygon points="1541.5,782.3 1540.2,787.0 1532.7,789.3 1526.6,786.9 1522.4,783.4 1525.0,778.9 1532.0,776.6 1538.0,778.9" fill="#bddcb1" />
<polygon points="1598.2,790.8 1589.6,799.5 1587.6,808.0 1576.8,809.6 1570.9,805.6 1567.4,798.4 1578.6,791.4 1588.0,790.1" fill="#bddcb1" />
<polygon points="1592.6,803.4 1591.0,808.6 1585.0,813.8 1577.8,812.0 1573.3,809.3 1573.7,804.1 1580.9,800.7 1587.7,800.7" fill="#bddcb1" />
<polygon points="1590.0,803.6 1589.5,807.4 1584.0,809.5 1577.0,811.5 1572.9,807.9 1577.8,803.7 1581.0,797.6 1587.8,800.4" fill="#bddcb1" />
<polygon points="1599.3,799.3 1602.7,806.6 1589.7,809.6 1583.4,811.0 1574.2,811.1 1576.0,803.6 1582.6,794.5 1595.2,793.1" fill="#bddcb1" />
<polygon points="1574.3,809.8 1570.1,814.6 1564.1,817.2 1556.5,817.9 1554.5,813.5 1552.6,807.9 1561.8,805.1 1569.3,806.3" fill="#bddcb1" />
<polygon points="1537.2,783.1 1536.7,788.2 1529.0,791.9 1522.4,789.2 1519.6,785.7 1520.5,781.3 1526.8,777.0 1532.8,780.3" fill="#bddcb1" />
<polygon points="1621.5,819.5 1619.6,824.1 1614.1,826.6 1610.3,825.7 1604.4,825.6 1606.4,821.3 1610.9,817.7 1617.6,816.5" fill="#bddcb1" />
<polygon points="1651.2,804.4 1650.4,807.8 1646.0,809.7 1642.4,810.1 1638.1,809.5 1639.1,805.7 1643.6,803.5 1649.6,800.7" fill="#bddcb1" />
<polygon points="1629.8,791.9 1629.4,796.4 1622.2,795.0 1616.9,794.8 1610.9,791.3 1615.7,787.3 1622.5,785.5 1627.2,788.9" fill="#bddcb1" />
<polygon points="1617.6,811.5 1617.7,816.1 1610.2,817.1 1605.1,815.6 1604.5,812.6 1605.7,810.1 1609.3,806.5 1613.3,809.6" fill="#bddcb1" />
<polygon points="1619.0,823.2 1616.5,826.0 1611.7,831.0 1605.3,826.7 1599.4,822.4 1605.5,818.5 1612.2,818.1 1618.4,819.4" fill="#bddcb1" />
<polygon points="1623.1,802.2 1627.2,806.6 1619.2,809.8 1610.4,811.8 1608.9,806.5 1609.2,801.8 1616.1,799.6 1620.7,800.3" fill="#bddcb1" />
<polygon points="1606.1,821.2 1607.4,828.7 1596.0,833.2 1584.6,837.2 1583.9,829.5 1584.0,824.1 1590.1,817.4 1598.3,819.5" fill="#bddcb1" />
<polygon points="1600.5,825.3 1597.7,828.3 1592.6,830.3 1587.6,828.0 1579.6,824.6 1587.3,821.3 1593.0,818.8 1597.6,822.3" fill="#bddcb1" />
<polygon points="1618.3,802.2 1622.3,805.5 1615.5,809.5 1610.4,810.6 1607.3,808.9 1606.9,805.4 1610.8,801.7 1615.1,801.3" fill="#bddcb1" />
<polygon points="1629.2,803.5 1628.7,805.9 1625.0,808.8 1621.6,805.8 1618.5,803.9 1618.7,800.2 1624.6,798.6 1628.1,801.4" fill="#bddcb1" />
<polygon points="1532.4,750.9 1533.2,756.2 1525.0,755.0 1520.7,751.9 1517.7,748.4 1522.1,746.5 1526.9,743.7 1531.3,747.6" fill="#bddcb1" />
<polygon points="1549.7,740.2 1546.6,744.7 1543.9,750.1 1538.3,747.9 1533.2,747.2 1533.9,742.8 1539.5,739.9 1546.2,736.8" fill="#bddcb1" />
<polygon points="1535.7,743.7 1532.4,748.1 1528.4,751.4 1519.9,755.6 1518.4,750.0 1517.2,745.0 1525.3,742.8 1532.4,739.8" fill="#bddcb1" />
<polygon points="1503.0,696.5 1502.4,700.0 1499.0,702.9 1493.7,706.9 1491.7,703.4 1491.2,700.0 1493.9,694.5 1500.9,692.9" fill="#bddcb1" />
<polygon points="1498.8,693.4 1496.2,695.6 1492.8,696.9 1488.4,696.7 1486.3,694.1 1489.5,692.0 1492.4,689.5 1495.9,691.5" fill="#bddcb1" />
<polygon points="1516.0,811.9 1513.3,814.7 1508.3,813.3 1505.6,812.2 1504.1,810.3 1505.6,808.4 1509.0,807.7 1512.9,809.0" fill="#bddcb1" />
<polygon points="1504.7,812.5 1501.7,819.6 1495.6,825.8 1488.2,824.9 1482.7,823.3 1481.7,817.7 1489.5,813.3 1495.0,814.0" fill="#bddcb1" />
<polygon points="1522.8,841.2 1521.4,846.5 1516.0,849.2 1512.1,851.2 1509.8,849.5 1506.4,846.7 1512.4,843.5 1518.1,838.8" fill="#bddcb1" />
<polygon points="1525.2,801.3 1523.6,808.4 1513.6,810.8 1507.7,809.9 1497.0,809.6 1503.3,802.8 1509.3,796.0 1519.4,797.0" fill="#bddcb1" />
<polygon points="1601.1,857.6 1604.3,862.5 1595.8,865.4 1587.9,865.7 1580.1,862.7 1588.3,857.3 1592.4,851.3 1598.4,855.2" fill="#bddcb1" />
<polygon points="1602.4,856.9 1598.6,861.2 1592.9,863.3 1588.4,861.9 1587.3,859.4 1587.0,856.4 1591.5,854.3 1595.8,855.4" fill="#bddcb1" />
<polygon points="1577.8,839.2 1575.4,843.4 1569.1,847.1 1561.1,845.2 1553.0,840.8 1561.1,835.8 1568.3,833.8 1578.9,832.5" fill="#bddcb1" />
<polygon points="1567.1,852.2 1565.3,856.5 1558.3,855.5 1551.7,855.5 1549.6,851.3 1553.1,848.0 1558.8,845.6 1566.1,847.6" fill="#bddcb1" />
<polygon points="1684.2,625.0 1685.0,628.0 1680.9,630.9 1674.7,634.2 1671.8,630.8 1674.4,626.8 1677.3,623.3 1683.0,621.6" fill="#bddcb1" />
<polygon points="1692.9,615.5 1692.0,619.9 1687.5,622.1 1683.8,625.3 1679.4,624.6 1681.1,620.3 1684.8,618.0 1688.2,615.7" fill="#bddcb1" />
<polygon points="1699.4,613.8 1697.5,621.0 1692.0,627.1 1683.5,631.7 1678.7,627.8 1681.4,621.7 1685.4,617.3 1690.6,615.9" fill="#bddcb1" />
<polygon points="1708.3,627.0 1706.4,631.2 1699.8,630.9 1693.9,632.0 1690.8,628.6 1693.4,624.7 1699.2,624.1 1702.9,625.2" fill="#bddcb1" />
<polygon points="1706.7,851.6 1707.4,856.2 1699.8,856.9 1695.7,855.7 1690.2,854.2 1691.9,849.8 1698.1,846.3 1705.4,847.4" fill="#bddcb1" />
<polygon points="1696.5,857.5 1693.4,860.7 1691.5,864.4 1687.4,863.2 1683.9,862.2 1682.4,858.5 1688.9,857.4 1692.0,857.2" fill="#bddcb1" />
<polygon points="1700.7,839.2 1700.9,847.1 1693.3,855.0 1684.5,856.0 1680.3,853.1 1677.3,848.1 1684.2,841.6 1692.1,839.3" fill="#bddcb1" />
<polygon points="1665.2,839.4 1655.9,842.5 1650.0,844.3 1642.4,842.7 1638.5,837.8 1643.6,833.8 1650.6,833.3 1655.8,835.6" fill="#bddcb1" />
<polygon points="1667.4,841.3 1661.9,849.1 1647.9,850.8 1637.8,844.3 1632.0,836.8 1643.5,834.3 1650.7,829.3 1661.0,833.8" fill="#bddcb1" />
<polygon points="1663.0,838.4 1656.9,844.9 1649.4,849.0 1637.0,852.2 1639.4,843.6 1639.7,838.9 1645.7,832.2 1655.8,834.1" fill="#bddcb1" />
<polygon points="1643.1,842.8 1641.8,846.8 1635.9,849.4 1630.1,848.0 1629.2,844.7 1630.3,841.7 1634.2,837.0 1640.8,839.2" fill="#bddcb1" />
<polygon points="1475.2,638.0 1474.6,643.2 1467.9,646.3 1460.9,649.1 1459.7,644.6 1457.7,640.6 1463.5,635.8 1469.3,637.4" fill="#bddcb1" />
<polygon points="1478.1,642.3 1475.7,646.8 1467.9,648.3 1463.8,643.8 1455.8,640.3 1461.3,636.1 1468.9,637.6 1477.2,637.2" fill="#bddcb1" />
<polygon points="1504.2,760.9 1495.0,766.6 1489.0,773.8 1481.7,768.2 1476.5,765.1 1477.8,759.4 1486.6,758.2 1496.9,755.4" fill="#bddcb1" />
<polygon points="1497.9,762.1 1493.3,769.1 1485.5,775.0 1476.1,773.4 1468.1,770.0 1471.1,762.4 1481.8,760.9 1491.1,757.6" fill="#bddcb1" />
<polygon points="1621.6,905.8 1620.6,910.2 1613.2,913.6 1602.3,911.3 1600.3,904.5 1608.7,901.8 1614.1,897.7 1619.3,902.2" fill="#bddcb1" />
<polygon points="1629.0,907.1 1625.2,908.7 1621.5,908.9 1617.4,908.0 1614.1,905.0 1617.7,902.5 1622.3,903.4 1624.9,904.8" fill="#bddcb1" />
<polygon points="1544.8,903.9 1545.2,907.3 1539.7,908.6 1536.0,907.5 1530.2,906.2 1533.7,902.5 1538.3,900.0 1544.5,900.2" fill="#bddcb1" />
<polygon points="1557.6,895.6 1549.6,897.5 1545.1,898.9 1536.4,898.9 1534.5,893.3 1539.7,889.9 1546.2,888.6 1550.9,891.8" fill="#bddcb1" />
<polygon points="1465.5,873.7 1465.4,878.7 1457.6,880.9 1445.6,883.5 1442.9,876.2 1450.6,871.7 1456.2,868.8 1464.5,868.7" fill="#bddcb1" />
<polygon points="1454.4,882.2 1456.9,885.6 1450.8,888.3 1446.5,887.3 1441.3,886.5 1439.6,881.5 1448.3,880.6 1452.7,879.9" fill="#bddcb1" />
<polygon points="1485.2,895.6 1485.4,899.1 1480.1,901.6 1472.7,902.8 1468.6,898.9 1475.3,895.4 1478.1,892.0 1484.8,891.5" fill="#bddcb1" />
<polygon points="1493.7,914.0 1490.7,918.2 1484.7,923.2 1474.5,922.0 1469.2,916.2 1474.6,910.3 1483.4,909.2 1492.7,908.3" fill="#bddcb1" />
<polygon points="963.0,820.0 1024.0,801.5 1030.0,828.0 1022.0,850.0 1026.0,868.0 1008.0,878.0 990.0,870.0 972.0,880.0 952.0,872.0 938.0,856.0 944.0,838.0 960.0,832.0" fill="#bddcb1" />
<polygon points="1687.8,694.9 1683.8,709.8 1677.7,723.5 1662.0,727.6 1647.1,731.7 1635.2,724.0 1633.9,711.5 1629.1,700.7 1636.2,689.7 1645.1,672.9 1662.6,679.3 1674.3,686.5" fill="#bddcb1" />
<polygon points="1577.8,659.5 1577.5,667.5 1573.7,675.6 1564.2,678.4 1555.8,677.8 1541.0,682.4 1539.6,671.3 1539.8,662.1 1544.3,652.9 1555.3,649.8 1564.7,650.5 1571.5,654.5" fill="#bddcb1" />
<polygon points="1618.5,624.3 1617.9,630.9 1616.0,639.5 1604.3,643.8 1591.3,648.7 1585.4,641.1 1573.7,638.1 1578.7,628.9 1589.5,623.8 1596.7,619.2 1607.3,614.5 1620.9,614.1" fill="#bddcb1" />
<polygon points="1669.7,752.8 1674.8,758.5 1658.5,766.7 1644.3,776.0 1630.2,773.1 1613.9,776.3 1599.7,774.5 1614.1,764.6 1623.5,757.8 1637.5,753.8 1650.5,750.1 1662.7,749.6" fill="#bddcb1" />
<polygon points="1637.2,802.0 1626.9,809.6 1620.9,815.6 1607.4,819.8 1592.5,825.5 1576.6,827.2 1573.8,821.7 1583.5,814.4 1585.7,807.6 1601.2,799.8 1617.5,798.5 1622.5,802.7" fill="#bddcb1" />
<polygon points="1245.4,768.7 1245.8,777.5 1236.0,783.1 1228.2,785.5 1220.9,786.6 1211.9,786.5 1203.9,781.5 1206.6,772.7 1209.7,763.8 1221.6,763.9 1229.5,762.2 1239.7,762.0" fill="#bddcb1" />
<polygon points="1608.7,716.2 1606.3,724.9 1604.1,733.7 1594.3,735.8 1586.7,733.7 1578.1,733.6 1577.5,725.9 1571.4,718.7 1578.6,712.5 1585.3,706.8 1594.8,705.2 1600.7,711.5" fill="#bddcb1" />
<polygon points="1545.0,770.0 1590.0,762.0 1600.0,800.0 1603.0,845.0 1570.0,858.0 1550.0,850.0 1542.0,810.0" fill="#bddcb1" />
<polygon points="1596.0,778.0 1650.0,765.0 1658.0,810.0 1662.0,845.0 1625.0,856.0 1603.0,845.0" fill="#bddcb1" />
<polygon points="1655.0,765.0 1700.0,760.0 1707.0,790.0 1707.0,815.0 1665.0,822.0" fill="#bddcb1" />
<polygon points="1629.5,762.2 1621.6,766.9 1618.3,771.0 1610.4,772.2 1608.9,768.6 1611.8,765.4 1615.8,762.9 1620.7,762.5" fill="#f2efe9" />
<polygon points="1672.7,769.9 1671.3,773.7 1665.2,776.9 1658.2,778.0 1654.7,775.5 1658.0,771.8 1662.4,767.8 1668.0,768.8" fill="#f2efe9" />
<polygon points="1665.3,826.8 1664.5,831.0 1656.4,833.5 1651.1,833.6 1646.8,832.5 1646.3,828.7 1654.5,827.2 1658.3,827.2" fill="#f2efe9" />
<polygon points="1630.2,817.2 1624.0,821.5 1620.2,825.4 1615.4,823.8 1613.6,822.3 1614.0,820.0 1618.0,818.2 1623.7,816.1" fill="#f2efe9" />
<polygon points="1637.7,778.4 1636.5,781.0 1632.5,785.1 1623.5,786.8 1624.3,782.5 1626.5,780.0 1629.6,775.7 1635.6,776.7" fill="#f2efe9" />
<polygon points="1706.5,804.5 1703.2,808.5 1698.3,810.7 1691.4,813.2 1692.1,809.0 1690.0,806.1 1696.5,804.9 1702.2,802.5" fill="#f2efe9" />
<polygon points="1611.2,837.2 1612.5,841.5 1609.2,844.5 1605.1,842.9 1604.0,839.4 1604.1,836.6 1606.2,834.8 1609.1,834.6" fill="#f2efe9" />
<polygon points="1587.7,780.2 1590.4,784.4 1582.0,785.9 1575.9,787.7 1574.9,784.1 1572.1,780.3 1579.0,776.2 1584.7,778.1" fill="#f2efe9" />
<polygon points="1666.9,833.3 1667.6,836.9 1662.3,837.7 1658.0,839.4 1655.6,836.8 1657.0,833.5 1660.2,830.9 1665.4,829.9" fill="#f2efe9" />
<polygon points="1585.1,837.8 1581.5,841.8 1579.6,846.7 1573.3,846.9 1572.6,841.6 1574.3,838.7 1576.4,836.6 1581.7,833.4" fill="#f2efe9" />
<polygon points="1549.6,841.5 1549.7,844.3 1548.2,848.2 1545.0,845.5 1542.4,843.8 1540.6,839.2 1544.7,836.6 1549.4,836.6" fill="#f2efe9" />
<polygon points="1702.8,766.0 1699.9,769.4 1698.4,773.0 1694.9,771.5 1692.0,769.3 1693.6,766.1 1695.9,764.6 1700.4,761.2" fill="#f2efe9" />
<polygon points="1597.3,838.7 1597.9,841.6 1595.0,842.8 1591.5,844.3 1590.8,840.7 1589.1,837.3 1592.7,835.4 1595.6,836.9" fill="#f2efe9" />
<polygon points="1606.8,805.0 1609.8,808.2 1601.4,812.2 1593.2,812.8 1592.4,809.5 1594.4,806.6 1598.8,804.0 1603.5,804.1" fill="#f2efe9" />
<polygon points="1557.2,806.5 1554.9,809.3 1553.3,813.4 1547.9,813.3 1545.3,810.2 1546.2,806.4 1550.1,803.1 1556.4,802.0" fill="#f2efe9" />
<polygon points="1686.2,824.2 1687.6,827.8 1681.5,829.4 1677.3,829.7 1674.8,827.8 1676.8,825.1 1678.8,820.7 1682.6,823.6" fill="#f2efe9" />
<polygon points="1644.0,842.3 1643.0,845.4 1640.3,847.2 1637.3,846.8 1632.5,845.8 1633.4,841.1 1637.3,837.6 1641.0,840.9" fill="#f2efe9" />
<polygon points="1659.0,790.6 1661.3,794.6 1653.4,795.2 1647.4,798.3 1642.9,795.6 1646.3,791.1 1651.1,787.8 1658.7,785.9" fill="#f2efe9" />
<polygon points="1590.8,815.6 1587.4,819.4 1582.6,822.5 1576.0,823.5 1572.1,821.4 1575.7,817.6 1580.0,814.1 1586.4,813.8" fill="#f2efe9" />
<polygon points="1584.8,815.4 1585.5,820.2 1581.3,822.6 1577.1,822.0 1575.5,818.3 1576.1,815.1 1577.3,809.7 1582.2,811.9" fill="#f2efe9" />
<polygon points="1632.5,807.9 1634.7,810.7 1627.3,813.3 1620.4,814.7 1615.5,813.1 1617.3,809.0 1624.8,805.2 1629.5,807.1" fill="#f2efe9" />
<polygon points="1610.2,833.8 1609.5,836.1 1604.8,837.9 1599.4,839.4 1593.5,839.0 1597.3,835.3 1603.1,832.6 1607.7,833.0" fill="#f2efe9" />
<polygon points="1624.0,609.0 1676.0,600.0 1680.0,638.0 1668.4,646.0 1666.4,653.7 1639.4,663.4 1631.7,651.8" fill="#b2d7a8" />
<polygon points="1142.8,656.0 1145.7,659.5 1141.0,663.7 1135.2,666.4 1129.3,668.3 1122.7,669.6 1117.8,667.8 1118.5,663.6 1116.0,660.4 1120.4,656.8 1124.7,653.4 1130.6,652.5 1136.2,651.9 1140.3,653.4" fill="#dff5c8" />
<polygon points="1042.0,852.9 1040.8,857.3 1040.0,861.4 1037.7,865.8 1032.7,865.0 1028.5,864.9 1023.2,864.1 1022.4,859.0 1021.9,854.5 1023.8,850.4 1025.8,845.2 1031.3,846.8 1036.2,845.2 1041.2,847.4" fill="#dff5c8" />
<polygon points="1601.8,896.4 1604.8,906.4 1605.8,918.0 1600.7,923.4 1594.0,923.0 1587.9,917.4 1581.4,913.8 1577.3,903.9 1573.4,892.8 1577.0,885.2 1580.2,878.5 1585.5,874.4 1592.9,876.1 1598.3,886.7" fill="#dff5c8" />
<polygon points="1676.4,884.9 1678.6,893.6 1677.9,903.6 1668.4,905.3 1662.3,913.5 1653.4,909.8 1647.7,902.4 1641.7,895.7 1643.2,886.7 1647.3,880.4 1649.4,870.8 1658.2,871.1 1666.2,871.6 1672.9,876.9" fill="#dff5c8" />
<polygon points="1318.9,697.3 1318.7,701.3 1315.4,703.6 1314.2,707.2 1310.6,707.9 1307.1,707.3 1303.3,706.2 1302.6,702.3 1302.2,698.8 1302.4,694.8 1306.1,693.2 1309.4,692.1 1312.9,692.5 1316.6,693.8" fill="#dff5c8" />
<polygon points="1530.6,600.5 1529.7,605.8 1519.4,611.9 1507.6,616.0 1496.3,622.1 1484.1,623.3 1472.8,623.4 1468.2,619.8 1477.0,613.3 1482.1,608.3 1492.3,603.9 1503.9,597.3 1513.1,599.1 1520.5,599.9" fill="#dff5c8" />
<polygon points="1191.8,884.8 1190.4,889.9 1184.7,893.7 1181.7,898.9 1174.4,901.2 1167.8,900.3 1164.7,896.9 1158.5,895.1 1160.4,890.1 1162.8,885.3 1167.5,880.1 1175.6,878.3 1183.3,878.0 1185.7,882.8" fill="#dff5c8" />
<polygon points="1268.9,797.2 1271.3,805.7 1268.5,810.5 1269.4,821.5 1263.3,817.5 1258.8,815.2 1254.4,810.1 1251.4,802.7 1247.2,793.6 1249.2,786.6 1252.1,782.0 1256.5,781.3 1261.1,786.2 1265.6,789.9" fill="#dff5c8" />
<polygon points="1433.1,691.2 1428.0,714.1 1408.9,737.9 1367.2,750.3 1334.7,759.4 1306.4,758.6 1271.2,760.6 1262.9,743.9 1262.6,725.1 1279.9,704.4 1308.8,685.3 1345.6,677.7 1385.9,667.3 1399.7,684.8" fill="#e3e2e1" />
<polygon points="1344.6,796.2 1343.1,824.5 1330.9,840.7 1323.9,859.3 1308.9,869.3 1290.4,860.3 1272.6,846.4 1264.5,821.0 1261.7,797.1 1257.8,768.1 1276.4,761.2 1290.5,746.6 1311.2,751.5 1327.7,773.2" fill="#e3e2e1" />
<polygon points="1396.3,862.6 1407.9,884.6 1385.8,904.2 1370.6,926.9 1340.9,920.0 1316.0,925.7 1292.0,917.9 1293.0,894.5 1273.8,875.5 1301.2,859.4 1312.4,837.7 1339.1,837.6 1368.8,825.2 1386.6,843.3" fill="#e3e2e1" />
<polygon points="1438.5,808.1 1439.9,839.4 1440.2,868.8 1429.8,887.2 1411.5,882.0 1395.3,872.1 1375.0,863.8 1370.5,829.1 1353.4,797.3 1366.8,779.7 1376.6,767.2 1389.5,763.4 1405.9,754.4 1426.0,774.4" fill="#e3e2e1" />
<polygon points="1447.7,896.4 1451.6,909.7 1442.4,920.2 1437.5,935.2 1422.4,937.1 1410.6,929.1 1401.9,921.8 1389.1,914.6 1395.8,901.4 1391.9,885.9 1406.2,881.2 1418.0,878.3 1431.3,876.1 1440.4,886.1" fill="#e3e2e1" />
<polygon points="1291.5,603.3 1287.6,609.2 1288.5,615.7 1277.6,619.0 1268.6,624.3 1261.1,621.2 1250.5,622.1 1244.9,617.7 1250.4,610.8 1257.1,606.0 1262.3,600.7 1271.3,596.7 1279.2,598.4 1287.7,599.0" fill="#e3e2e1" />
<polygon points="1382.6,606.6 1385.4,611.9 1382.8,619.0 1373.5,623.3 1364.3,627.5 1356.7,624.3 1345.6,625.2 1347.2,617.5 1340.8,612.1 1345.4,604.3 1354.8,598.4 1365.7,597.4 1374.0,598.7 1381.1,601.0" fill="#e3e2e1" />
<polygon points="1497.9,642.5 1495.4,646.0 1493.5,649.6 1484.5,651.7 1478.1,654.7 1470.0,656.7 1465.6,655.3 1463.5,653.1 1467.1,649.7 1470.1,646.8 1475.1,643.9 1482.2,640.2 1489.9,639.3 1492.4,641.8" fill="#e3e2e1" />
<polygon points="1460.6,825.2 1457.9,837.1 1460.9,850.6 1458.8,862.1 1450.3,857.1 1443.3,859.4 1436.3,847.2 1434.0,833.4 1430.2,821.9 1430.0,810.6 1434.6,805.7 1438.8,798.3 1446.2,808.2 1454.1,812.0" fill="#e3e2e1" />
<polygon points="1117.3,608.4 1117.1,611.4 1117.6,615.0 1115.0,615.9 1113.1,618.0 1110.1,617.9 1107.7,615.1 1106.4,611.7 1107.0,608.6 1106.5,605.1 1109.0,604.1 1110.9,601.7 1113.5,604.0 1116.3,604.9" fill="#e3e2e1" />
<polygon points="1709.0,602.2 1709.2,605.6 1708.3,609.4 1703.8,610.9 1700.2,612.0 1695.2,614.2 1692.9,610.6 1689.1,608.4 1688.9,604.2 1692.3,600.9 1696.2,599.2 1699.9,598.2 1704.7,596.0 1706.4,599.9" fill="#e3e2e1" />
<polygon points="1349.1,807.9 1347.3,811.1 1345.7,813.6 1341.6,815.4 1340.5,810.5 1339.9,806.6 1342.2,802.5 1347.0,803.5" fill="#c8f0d0" />
<polygon points="1390.3,806.9 1387.9,810.2 1384.8,813.0 1380.4,812.7 1377.6,810.9 1380.0,808.1 1382.3,805.1 1385.8,806.4" fill="#c8f0d0" />
<polygon points="1311.3,676.1 1308.9,679.8 1306.8,684.0 1302.4,682.1 1299.9,679.6 1298.4,675.1 1303.2,672.6 1308.7,671.8" fill="#add19e" />
<polygon points="1405.9,687.1 1405.1,690.2 1400.9,693.1 1396.7,692.2 1392.6,691.2 1395.0,687.9 1398.3,684.7 1401.8,686.6" fill="#c8f0d0" />
<polygon points="1424.5,775.7 1425.0,778.1 1420.6,779.6 1415.5,781.5 1412.5,779.4 1415.8,776.3 1418.5,772.8 1424.0,773.0" fill="#c8f0d0" />
<polygon points="1384.3,686.2 1385.6,692.4 1383.3,696.5 1379.1,694.3 1376.3,688.7 1377.1,684.1 1378.1,679.7 1381.9,680.1" fill="#c8f0d0" />
<polygon points="1403.3,691.0 1400.3,695.5 1395.4,699.4 1389.1,698.9 1387.1,696.1 1386.2,692.4 1392.5,690.1 1396.9,690.6" fill="#c8f0d0" />
<polygon points="1348.7,872.1 1346.7,876.1 1340.7,879.6 1335.2,878.7 1329.0,878.2 1332.8,874.1 1337.8,870.2 1342.7,871.9" fill="#add19e" />
<polygon points="1428.9,873.4 1430.2,878.7 1426.9,881.9 1421.8,882.3 1419.1,876.5 1417.8,869.9 1421.9,866.0 1426.2,870.6" fill="#c8f0d0" />
<polygon points="1381.9,769.8 1379.1,775.5 1374.3,777.3 1368.6,779.6 1363.7,775.5 1366.9,770.0 1370.6,765.7 1377.5,764.9" fill="#add19e" />
<polygon points="1403.2,668.6 1400.0,671.8 1395.7,673.9 1391.3,674.2 1389.8,672.7 1389.3,670.5 1394.2,669.1 1398.5,667.9" fill="#c8f0d0" />
<polygon points="1345.8,676.4 1344.7,682.4 1341.8,686.9 1336.3,686.5 1335.0,679.8 1332.7,673.8 1337.6,673.3 1342.2,670.3" fill="#c8f0d0" />
<polygon points="1299.6,738.0 1300.6,742.1 1293.1,746.4 1283.9,747.6 1283.2,743.1 1284.7,739.5 1289.5,734.8 1298.0,734.2" fill="#c8f0d0" />
<polygon points="1369.2,890.9 1369.0,893.8 1365.0,899.0 1357.7,898.0 1351.7,896.3 1356.8,891.7 1361.8,888.5 1367.1,888.9" fill="#c8f0d0" />
<polygon points="1361.5,891.8 1358.0,895.5 1355.5,899.3 1350.3,898.8 1345.0,896.9 1348.7,892.5 1352.3,889.0 1358.1,889.0" fill="#add19e" />
<polygon points="1331.6,803.4 1331.9,809.6 1325.4,810.5 1319.0,814.3 1314.1,808.8 1318.7,803.3 1321.9,799.2 1327.3,799.9" fill="#add19e" />
<polygon points="1354.3,707.4 1351.2,710.9 1349.2,716.2 1343.7,713.9 1341.4,711.4 1339.0,707.0 1345.5,704.5 1352.6,702.6" fill="#add19e" />
<polygon points="1297.6,820.8 1297.7,825.4 1291.2,828.8 1282.3,831.6 1279.1,826.5 1279.8,820.8 1287.5,816.7 1294.5,817.6" fill="#c8f0d0" />
<polygon points="1433.3,851.6 1430.1,855.8 1424.6,857.4 1419.0,859.3 1413.8,857.6 1418.6,853.5 1422.1,849.4 1426.9,851.3" fill="#c8f0d0" />
<polygon points="1319.0,803.3 1318.8,808.5 1315.3,814.9 1307.2,814.3 1306.3,807.2 1306.3,802.4 1309.4,795.9 1315.4,800.0" fill="#cdebb0" />
<polygon points="1318.4,782.8 1319.4,786.3 1315.8,788.0 1312.9,786.8 1308.8,785.7 1310.2,781.9 1313.3,779.8 1316.7,780.3" fill="#add19e" />
<polygon points="1291.2,900.8 1291.1,904.2 1288.6,906.7 1284.9,906.6 1283.7,903.1 1283.7,900.2 1285.5,896.6 1289.2,898.1" fill="#cdebb0" />
<polygon points="1314.5,832.2 1314.9,837.8 1310.8,839.5 1306.5,840.1 1304.2,835.3 1302.1,829.2 1306.5,825.5 1312.0,826.5" fill="#c8f0d0" />
<polygon points="1282.6,824.8 1282.9,829.3 1278.7,834.3 1270.3,835.6 1267.0,829.6 1267.8,823.3 1273.9,818.5 1280.6,820.5" fill="#cdebb0" />
<polygon points="1425.0,861.4 1423.9,864.7 1421.7,869.0 1416.7,867.8 1414.0,864.9 1414.1,860.7 1418.0,857.0 1422.1,859.6" fill="#add19e" />
<polygon points="1324.5,685.0 1323.4,689.6 1319.1,692.1 1314.2,692.5 1312.4,688.8 1310.7,684.2 1315.6,680.8 1321.6,680.9" fill="#cdebb0" />
<polygon points="1296.1,841.4 1293.8,846.9 1287.7,851.0 1280.6,850.7 1275.4,847.8 1280.6,843.2 1283.8,838.6 1291.0,838.3" fill="#add19e" />
<polygon points="1367.6,740.4 1367.5,744.0 1365.5,746.2 1362.9,745.1 1359.4,743.0 1358.5,737.3 1361.9,734.6 1365.6,737.0" fill="#cdebb0" />
<polygon points="1387.3,686.2 1387.3,690.2 1380.2,693.0 1373.8,693.8 1367.4,692.3 1371.4,687.5 1377.4,684.1 1382.4,685.4" fill="#c8f0d0" />
<polygon points="1360.2,788.9 1357.2,793.2 1352.5,795.0 1347.6,796.2 1343.4,794.1 1346.7,790.2 1349.7,785.9 1355.4,786.9" fill="#add19e" />
<polygon points="1385.8,726.6 1384.6,730.6 1383.5,735.3 1379.0,734.7 1376.1,729.6 1376.7,724.5 1379.1,721.2 1383.3,721.8" fill="#add19e" />
<polygon points="1306.9,893.0 1309.5,899.2 1299.9,900.3 1293.3,902.3 1291.4,897.8 1290.5,893.0 1296.1,888.0 1304.5,887.8" fill="#cdebb0" />
<polygon points="1343.1,757.0 1340.5,760.5 1339.2,765.0 1335.7,761.8 1331.4,760.7 1331.9,756.1 1335.6,753.2 1340.2,753.5" fill="#add19e" />
<polygon points="1305.4,863.0 1302.3,867.8 1295.7,871.4 1290.6,869.9 1287.4,868.6 1289.6,865.7 1292.5,861.1 1300.2,860.8" fill="#c8f0d0" />
<polygon points="1372.2,737.0 1371.6,739.8 1367.9,741.2 1363.2,743.1 1360.5,740.6 1362.5,737.4 1366.4,736.1 1371.0,734.1" fill="#cdebb0" />
<polygon points="1400.0,756.5 1396.4,760.1 1392.6,763.2 1386.8,763.7 1380.2,762.6 1381.8,757.4 1389.6,753.4 1396.6,753.9" fill="#add19e" />
<polygon points="1309.4,769.0 1309.9,775.0 1305.2,779.1 1300.0,776.4 1295.9,773.2 1297.7,768.4 1300.4,763.8 1306.2,764.3" fill="#c8f0d0" />
<polygon points="1286.1,672.3 1288.6,676.9 1285.1,680.9 1281.1,677.0 1276.7,675.2 1278.9,671.0 1280.9,667.4 1285.8,666.8" fill="#add19e" />
<polygon points="1415.0,755.2 1409.9,759.3 1407.2,762.0 1402.5,762.6 1397.0,760.8 1401.6,756.5 1404.0,751.6 1411.0,751.3" fill="#cdebb0" />
<polygon points="1345.6,815.4 1343.0,821.2 1337.0,825.8 1328.4,826.7 1327.8,820.9 1326.2,816.1 1332.4,811.0 1341.6,810.2" fill="#add19e" />
<polygon points="1157.2,705.5 1156.4,707.2 1155.2,709.0 1152.3,710.1 1149.2,710.4 1146.3,710.5 1144.3,709.7 1142.9,708.4 1143.1,706.8 1144.8,705.0 1148.0,704.3 1150.9,703.3 1153.9,703.3 1155.6,704.4" fill="#aad3df" />
<polygon points="1611.3,704.1 1611.1,706.5 1609.2,708.4 1608.2,711.0 1605.1,710.4 1603.1,709.9 1600.5,709.6 1599.5,707.7 1598.2,705.4 1599.4,702.9 1602.0,701.3 1604.9,701.9 1607.5,701.1 1609.7,702.2" fill="#aad3df" />
<polygon points="1533.3,919.4 1532.0,922.1 1531.7,924.8 1528.6,927.0 1524.8,929.3 1520.6,928.8 1517.0,927.6 1517.8,924.2 1517.7,921.9 1518.2,919.1 1521.2,916.8 1525.2,916.3 1529.0,915.8 1533.3,916.2" fill="#aad3df" />
<polygon points="1307.3,922.7 1308.5,924.5 1304.7,926.3 1302.3,927.6 1299.4,929.5 1296.8,928.7 1293.5,928.9 1292.0,927.5 1291.7,925.5 1294.2,923.5 1296.9,921.5 1300.6,920.5 1304.0,920.3 1306.3,921.3" fill="#aad3df" />
<polyline points="983.9,834.7 991.0,834.7" fill="none" stroke="#4da6ff" stroke-width="1.00" />
<polyline points="954.4,831.4 964.6,831.4" fill="none" stroke="#4da6ff" stroke-width="1.00" />
<polyline points="955.7,843.9 965.4,843.9" fill="none" stroke="#4da6ff" stroke-width="1.00" />
<polyline points="984.0,861.0 993.0,861.0" fill="none" stroke="#4da6ff" stroke-width="1.00" />
<polyline points="948.3,832.2 957.7,832.2" fill="none" stroke="#4da6ff" stroke-width="1.00" />
<polyline points="996.8,861.0 1003.2,861.0" fill="none" stroke="#4da6ff" stroke-width="1.00" />
<polyline points="961.0,830.6 969.9,830.6" fill="none" stroke="#4da6ff" stroke-width="1.00" />
<polyline points="984.7,847.6 991.7,847.6" fill="none" stroke="#4da6ff" stroke-width="1.00" />
<polyline points="966.5,861.0 977.1,861.0" fill="none" stroke="#4da6ff" stroke-width="1.00" />
<polyline points="989.3,846.6 995.7,846.6" fill="none" stroke="#4da6ff" stroke-width="1.00" />
<polyline points="987.5,841.5 994.2,841.5" fill="none" stroke="#4da6ff" stroke-width="1.00" />
<polyline points="998.6,849.7 1004.9,849.7" fill="none" stroke="#4da6ff" stroke-width="1.00" />
<polyline points="980.7,818.2 988.0,818.2" fill="none" stroke="#4da6ff" stroke-width="1.00" />
<polyline points="951.2,848.8 961.4,848.8" fill="none" stroke="#4da6ff" stroke-width="1.00" />
<polyline points="1000.7,840.7 1009.1,840.7" fill="none" stroke="#4da6ff" stroke-width="1.00" />
<polyline points="981.0,846.7 990.8,846.7" fill="none" stroke="#4da6ff" stroke-width="1.00" />
<polyline points="962.9,849.8 968.9,849.8" fill="none" stroke="#4da6ff" stroke-width="1.00" />
<polyline points="975.8,821.1 984.5,821.1" fill="none" stroke="#4da6ff" stroke-width="1.00" />
<polyline points="964.8,850.6 970.8,850.6" fill="none" stroke="#4da6ff" stroke-width="1.00" />
<polyline points="990.0,814.8 997.7,814.8" fill="none" stroke="#4da6ff" stroke-width="1.00" />
<polyline points="945.2,852.8 953.3,852.8" fill="none" stroke="#4da6ff" stroke-width="1.00" />
<polyline points="1623.7,863.2 1628.2,863.2" fill="none" stroke="#4da6ff" stroke-width="1.00" />
<polyline points="1635.8,865.8 1640.0,865.8" fill="none" stroke="#4da6ff" stroke-width="1.00" />
<polyline points="1656.3,866.4 1664.0,866.4" fill="none" stroke="#4da6ff" stroke-width="1.00" />
<polyline points="1683.1,871.3 1690.2,871.3" fill="none" stroke="#4da6ff" stroke-width="1.00" />
<polyline points="1653.1,873.7 1658.0,873.7" fill="none" stroke="#4da6ff" stroke-width="1.00" />
<polyline points="1665.5,877.9 1672.4,877.9" fill="none" stroke="#4da6ff" stroke-width="1.00" />
<polyline points="1633.1,864.1 1640.9,864.1" fill="none" stroke="#4da6ff" stroke-width="1.00" />
<polyline points="1651.1,873.1 1655.7,873.1" fill="none" stroke="#4da6ff" stroke-width="1.00" />
<polyline points="1684.8,867.1 1690.4,867.1" fill="none" stroke="#4da6ff" stroke-width="1.00" />
<polyline points="1624.2,879.3 1628.5,879.3" fill="none" stroke="#4da6ff" stroke-width="1.00" />
<polyline points="1290.0,598.0 1310.0,606.0 1335.0,612.0 1352.0,625.0 1358.0,650.0 1350.0,680.0 1345.0,700.0 1350.0,730.0 1345.0,760.0 1348.0,790.0 1340.0,830.0 1345.0,870.0 1356.0,900.0 1360.0,932.0" fill="none" stroke="#b5d0d0" stroke-width="1.60" />
<polyline points="1345.0,760.0 1340.0,790.0 1338.0,820.0 1345.0,850.0 1356.0,880.0 1362.0,932.0" fill="none" stroke="#b9b9b9" stroke-width="1.30" />
<polyline points="1595.0,598.0 1610.0,620.0 1590.0,660.0 1570.0,720.0 1550.0,780.0 1520.0,850.0 1495.0,900.0 1482.0,932.0" fill="none" stroke="#b5b5b5" stroke-width="1.20" />
<polyline points="895.0,690.0 965.0,668.0 1085.0,632.0 1125.0,622.0" fill="none" stroke="#c9c9cf" stroke-width="1.00" />
<polyline points="962.0,598.0 970.0,668.0" fill="none" stroke="#c9c9cf" stroke-width="1.00" />
<polyline points="1048.0,598.0 1052.0,640.0" fill="none" stroke="#c9c9cf" stroke-width="1.00" />
<polyline points="1115.0,598.0 1122.0,660.0 1070.0,675.0" fill="none" stroke="#c9c9cf" stroke-width="1.00" />
<polyline points="895.0,604.0 920.0,598.0" fill="none" stroke="#c9c9cf" stroke-width="1.00" />
<polyline points="1100.0,598.0 1080.0,630.0 1070.0,660.0 1040.0,700.0 1000.0,735.0 975.0,760.0 968.0,790.0" fill="none" stroke="#c3c8cc" stroke-width="1.30" />
<polyline points="895.0,700.0 905.0,760.0 912.0,800.0 905.0,830.0 895.0,840.0" fill="none" stroke="#f3c380" stroke-width="1.60" />
<polyline points="1676.1,598.0 1703.1,770.0 1707.0,795.0" fill="none" stroke="#f0c890" stroke-width="2.60" />
<polyline points="895.0,841.0 1044.0,796.0" fill="none" stroke="#f3c380" stroke-width="2.80" />
<polyline points="1142.0,598.0 1136.0,610.0 1146.0,619.0 1138.0,633.0 1140.0,648.0 1141.1,649.7 1132.8,650.5 1128.5,657.5 1120.3,658.5 1116.0,665.6 1116.0,664.8 1110.6,667.5 1108.9,673.2 1103.3,675.8 1101.9,681.8 1102.4,682.3 1095.8,684.1 1093.9,690.3 1088.1,692.9 1086.2,699.2 1086.0,699.6 1078.3,700.0 1074.4,706.4 1066.7,706.7 1063.1,713.8 1062.9,713.3 1055.3,714.3 1051.8,721.1 1044.6,722.8 1041.1,729.5 1040.5,729.2 1036.3,727.3 1035.4,732.4 1030.9,729.9 1029.7,734.5 1029.7,734.3 1024.3,734.1 1021.7,738.8 1016.0,738.0 1013.6,743.1 1014.3,742.1 1011.3,746.4 1014.0,751.1 1010.5,755.4 1014.0,760.1 1013.2,759.8 1011.8,766.4 1015.9,772.2 1013.2,779.0 1017.4,784.8 1017.3,785.4 1013.9,788.5 1015.6,792.9 1011.0,795.7 1013.1,800.3 1012.7,801.2 1005.9,801.9 1001.8,807.5 994.9,808.0 990.7,813.3 990.4,813.3 985.6,811.2 983.2,816.5 978.3,814.3 975.5,818.6" fill="none" stroke="#b7a9cf" stroke-width="2.60" stroke-linejoin="round" opacity="0.85"/>
<polyline points="1142.0,598.0 1136.0,610.0 1146.0,619.0 1138.0,633.0 1140.0,648.0 1141.1,649.7 1132.8,650.5 1128.5,657.5 1120.3,658.5 1116.0,665.6 1116.0,664.8 1110.6,667.5 1108.9,673.2 1103.3,675.8 1101.9,681.8 1102.4,682.3 1095.8,684.1 1093.9,690.3 1088.1,692.9 1086.2,699.2 1086.0,699.6 1078.3,700.0 1074.4,706.4 1066.7,706.7 1063.1,713.8 1062.9,713.3 1055.3,714.3 1051.8,721.1 1044.6,722.8 1041.1,729.5 1040.5,729.2 1036.3,727.3 1035.4,732.4 1030.9,729.9 1029.7,734.5 1029.7,734.3 1024.3,734.1 1021.7,738.8 1016.0,738.0 1013.6,743.1 1014.3,742.1 1011.3,746.4 1014.0,751.1 1010.5,755.4 1014.0,760.1 1013.2,759.8 1011.8,766.4 1015.9,772.2 1013.2,779.0 1017.4,784.8 1017.3,785.4 1013.9,788.5 1015.6,792.9 1011.0,795.7 1013.1,800.3 1012.7,801.2 1005.9,801.9 1001.8,807.5 994.9,808.0 990.7,813.3 990.4,813.3 985.6,811.2 983.2,816.5 978.3,814.3 975.5,818.6" fill="none" stroke="#9fc3e0" stroke-width="1.00" stroke-linejoin="round"/>
<polyline points="977.9,598.0 984.6,628.6 988.5,653.7 998.0,682.7 1023.0,725.0 1029.0,733.0" fill="none" stroke="#e8829b" stroke-width="3.60" stroke-linejoin="round"/>
<polyline points="1029.0,733.0 1043.2,760.0 1056.0,793.0 1067.0,846.7 1074.6,878.0 1083.8,932.0" fill="none" stroke="#e8829b" stroke-width="4.00" stroke-linejoin="round"/>
<polygon points="984.0,648.0 991.0,646.0 1001.0,651.0 995.0,659.0 986.0,658.0" fill="#e8829b" />
<polyline points="1427.0,598.0 1430.8,617.5 1434.7,666.0 1440.5,715.0 1452.3,774.0 1463.9,830.0 1476.0,868.0 1487.9,893.0 1492.5,932.0" fill="none" stroke="#e8829b" stroke-width="4.20" stroke-linejoin="round"/>
<text x="984.6" y="641.7" font-family="Liberation Sans, sans-serif" font-style="italic" font-size="15.0" fill="#bb2f45" text-anchor="middle">61</text>
<text x="991.4" y="674.6" font-family="Liberation Sans, sans-serif" font-style="italic" font-size="15.0" fill="#bb2f45" text-anchor="middle">61</text>
<text x="1026.0" y="734.4" font-family="Liberation Sans, sans-serif" font-style="italic" font-size="15.0" fill="#bb2f45" text-anchor="middle">58</text>
<text x="1052.4" y="785.8" font-family="Liberation Sans, sans-serif" font-style="italic" font-size="15.0" fill="#bb2f45" text-anchor="middle">55</text>
<text x="1058.9" y="812.6" font-family="Liberation Sans, sans-serif" font-style="italic" font-size="15.0" fill="#bb2f45" text-anchor="middle">55</text>
<text x="1070.0" y="870.7" font-family="Liberation Sans, sans-serif" font-style="italic" font-size="15.0" fill="#bb2f45" text-anchor="middle">52</text>
<text x="1076.4" y="895.7" font-family="Liberation Sans, sans-serif" font-style="italic" font-size="15.0" fill="#bb2f45" text-anchor="middle">52</text>
<text x="1429.0" y="609.5" font-family="Liberation Sans, sans-serif" font-style="italic" font-size="15.0" fill="#bb2f45" text-anchor="middle">53</text>
<text x="1432.8" y="635.4" font-family="Liberation Sans, sans-serif" font-style="italic" font-size="15.0" fill="#bb2f45" text-anchor="middle">53</text>
<text x="1431.8" y="665.7" font-family="Liberation Sans, sans-serif" font-style="italic" font-size="15.0" fill="#bb2f45" text-anchor="middle">51</text>
<text x="1437.6" y="690.4" font-family="Liberation Sans, sans-serif" font-style="italic" font-size="15.0" fill="#bb2f45" text-anchor="middle">51</text>
<text x="1447.3" y="746.4" font-family="Liberation Sans, sans-serif" font-style="italic" font-size="15.0" fill="#bb2f45" text-anchor="middle">49</text>
<text x="1463.0" y="835.7" font-family="Liberation Sans, sans-serif" font-style="italic" font-size="15.0" fill="#bb2f45" text-anchor="middle">45</text>
<text x="1468.5" y="854.5" font-family="Liberation Sans, sans-serif" font-style="italic" font-size="15.0" fill="#bb2f45" text-anchor="middle">45</text>
<text x="1345" y="719" font-family="Liberation Sans, sans-serif" font-size="21" fill="#777" text-anchor="middle">Newmarket</text>
<rect x="891" y="758" width="31" height="26" rx="3" fill="#f6e3c4" stroke="#e8cfa6" stroke-width="0.8"/>
<text x="907" y="778" font-family="Liberation Sans, sans-serif" font-size="15" fill="#8a6d3b" text-anchor="middle">27</text>
<rect x="1660" y="588" width="30" height="20" rx="3" fill="#f6dfbb" stroke="#e8cfa6" stroke-width="0.8"/>
<polyline points="921.0,815.0 925.0,843.0 943.5,932.0" fill="none" stroke="#000" stroke-width="1.90" />
<polyline points="976.7,817.2 997.0,932.0" fill="none" stroke="#000" stroke-width="1.90" />
<polyline points="1021.0,742.0 1026.6,800.0" fill="none" stroke="#000" stroke-width="1.90" />
<polyline points="1034.0,800.6 1057.0,932.0" fill="none" stroke="#000" stroke-width="1.90" />
<polyline points="1067.6,719.4 1083.8,784.0" fill="none" stroke="#000" stroke-width="1.90" />
<polyline points="1088.4,785.0 1109.6,932.0" fill="none" stroke="#000" stroke-width="1.90" />
<polyline points="1123.8,671.0 1131.5,713.8 1141.0,765.0 1166.9,932.0" fill="none" stroke="#000" stroke-width="1.90" />
<polyline points="1167.2,598.0 1175.0,638.5 1184.6,694.5 1200.0,778.0 1225.5,932.0" fill="none" stroke="#000" stroke-width="1.90" />
<polyline points="1223.2,598.0 1232.9,644.3 1240.6,688.7 1256.0,778.0 1278.0,932.0" fill="none" stroke="#000" stroke-width="1.90" />
<polyline points="1284.5,598.0 1314.5,770.0 1320.6,815.0 1344.6,932.0" fill="none" stroke="#000" stroke-width="1.90" />
<polyline points="1340.5,598.0 1362.7,725.0 1368.6,760.0 1396.0,932.0" fill="none" stroke="#000" stroke-width="1.90" />
<polyline points="1394.6,598.0 1426.5,770.0 1440.0,834.0 1451.0,932.0" fill="none" stroke="#000" stroke-width="1.90" />
<polyline points="1450.2,598.0 1479.1,770.0 1506.4,932.0" fill="none" stroke="#000" stroke-width="1.90" />
<polyline points="1507.1,598.0 1537.1,770.0 1563.6,932.0" fill="none" stroke="#000" stroke-width="1.90" />
<polyline points="1563.1,598.0 1592.1,770.0 1620.8,932.0" fill="none" stroke="#000" stroke-width="1.90" />
<polyline points="1619.1,598.0 1651.0,770.0 1678.9,932.0" fill="none" stroke="#000" stroke-width="1.90" />
<polyline points="1676.1,598.0 1703.1,770.0 1707.0,795.0" fill="none" stroke="#000" stroke-width="1.90" />
<polyline points="1131.5,712.0 1184.6,693.6 1236.7,677.0 1290.0,660.7 1427.0,616.0 1491.7,598.0" fill="none" stroke="#000" stroke-width="1.90" />
<polyline points="1101.6,778.0 1138.3,768.0 1182.7,751.5 1195.2,750.5 1213.6,742.8 1250.2,733.0 1306.7,715.5 1362.7,698.0 1440.0,675.0 1462.0,664.0 1461.8,654.7 1515.8,647.0 1569.0,631.5 1622.0,614.0 1676.1,598.1" fill="none" stroke="#000" stroke-width="1.90" />
<polyline points="895.0,841.2 1044.0,796.0 1088.0,783.0 1170.0,758.0" fill="none" stroke="#000" stroke-width="1.90" />
<polyline points="1018.4,761.8 1131.4,728.0 1133.4,728.3" fill="none" stroke="#000" stroke-width="1.90" />
<polyline points="895.0,899.4 1170.0,814.4 1256.0,789.0" fill="none" stroke="#000" stroke-width="1.90" />
<polyline points="982.0,932.0 1170.0,873.5 1262.0,846.0" fill="none" stroke="#000" stroke-width="1.90" />
<polyline points="1108.0,951.0 1171.0,932.0 1274.4,898.4" fill="none" stroke="#000" stroke-width="1.90" />
<polyline points="1256.0,787.2 1707.0,649.6" fill="none" stroke="#000" stroke-width="1.90" />
<polyline points="1266.0,843.1 1707.0,708.6" fill="none" stroke="#000" stroke-width="1.90" />
<polyline points="1275.6,896.6 1707.0,765.0" fill="none" stroke="#000" stroke-width="1.90" />
<polyline points="1286.0,954.3 1707.0,825.9" fill="none" stroke="#000" stroke-width="1.90" />
<polyline points="1295.7,1008.6 1707.0,883.2" fill="none" stroke="#000" stroke-width="1.90" />
<polyline points="1596.8,816.0 1655.0,799.5" fill="none" stroke="#000" stroke-width="1.90" />
<polyline points="1656.0,812.6 1681.0,809.0" fill="none" stroke="#000" stroke-width="1.90" />
<polyline points="1139.2,607.7 1167.2,599.0" fill="none" stroke="#000" stroke-width="1.90" />
<polyline points="1148.0,618.3 1169.0,611.5" fill="none" stroke="#000" stroke-width="1.90" />
<polyline points="1146.0,630.4 1170.0,622.7" fill="none" stroke="#000" stroke-width="1.90" />
<polyline points="1139.2,649.7 1175.0,638.5 1225.0,623.0" fill="none" stroke="#000" stroke-width="1.90" />
<polyline points="1123.8,671.0 1173.0,654.0" fill="none" stroke="#000" stroke-width="1.90" />
<polyline points="1127.6,682.5 1170.0,668.5" fill="none" stroke="#000" stroke-width="1.90" />
<polyline points="1180.7,637.6 1173.0,656.0 1170.0,672.3 1161.4,677.0 1131.5,713.8 1115.0,733.0 1090.0,754.4 1060.0,775.0 1040.0,795.0" fill="none" stroke="#000" stroke-width="1.90" />
<polyline points="1090.0,702.2 1127.6,690.7" fill="none" stroke="#000" stroke-width="1.90" />
<polyline points="1082.0,704.0 1084.0,723.0 1053.0,733.0" fill="none" stroke="#000" stroke-width="1.90" />
<polyline points="1232.0,643.4 1290.0,627.0 1318.3,628.6 1368.5,631.5 1411.0,615.0 1440.0,609.3" fill="none" stroke="#000" stroke-width="1.90" />
<polyline points="1233.8,655.0 1295.0,637.3 1345.0,622.0" fill="none" stroke="#000" stroke-width="1.90" />
<polyline points="1244.4,598.0 1287.0,630.8" fill="none" stroke="#000" stroke-width="1.90" />
<polyline points="1280.0,598.0 1276.0,615.0 1287.0,630.8" fill="none" stroke="#000" stroke-width="1.90" />
<polyline points="1195.2,750.5 1213.6,742.8 1211.6,761.0 1197.0,765.0" fill="none" stroke="#000" stroke-width="1.90" />
<polyline points="1188.5,751.5 1189.4,759.0" fill="none" stroke="#000" stroke-width="1.90" />
<polyline points="1021.3,742.5 1024.2,760.0" fill="none" stroke="#000" stroke-width="1.90" />
<polyline points="1029.0,733.0 1043.2,760.0 1052.0,782.0" fill="none" stroke="#000" stroke-width="4.50" stroke-linecap="round"/>
<polyline points="1043.2,760.0 1056.0,793.0 1067.0,846.7 1074.6,878.0 1083.8,932.0" fill="none" stroke="#000" stroke-width="2.60" />
<polyline points="1056.0,793.0 1063.0,800.0 1080.0,793.0" fill="none" stroke="#000" stroke-width="1.90" />
<polyline points="1048.0,790.0 1056.0,775.0" fill="none" stroke="#000" stroke-width="1.90" />
<polyline points="1040.0,800.0 1052.0,796.0 1060.0,812.0" fill="none" stroke="#000" stroke-width="1.90" />
<polyline points="1074.6,878.0 1068.0,884.0 1060.0,888.0" fill="none" stroke="#000" stroke-width="1.90" />
<polyline points="1080.0,872.0 1090.0,866.0" fill="none" stroke="#000" stroke-width="1.90" />
<polyline points="1427.0,598.0 1430.8,617.5 1434.7,666.0 1440.5,715.0 1452.3,774.0 1463.9,830.0 1476.0,868.0 1487.9,893.0 1492.5,932.0" fill="none" stroke="#000" stroke-width="2.40" />
<polyline points="1427.0,606.0 1436.0,620.0 1450.0,612.0" fill="none" stroke="#000" stroke-width="1.90" />
<polyline points="1432.0,640.0 1445.0,632.0" fill="none" stroke="#000" stroke-width="1.90" />
<polyline points="1440.0,690.0 1452.0,676.0 1462.0,670.0" fill="none" stroke="#000" stroke-width="1.90" />
<polyline points="1463.0,830.0 1470.0,835.0 1490.0,830.0" fill="none" stroke="#000" stroke-width="1.90" />
<polygon points="1428.4,605.6 1433.9,614.6 1432.4,625.6 1426.9,616.6" fill="#000" />
<polyline points="1421.4,619.6 1427.4,616.6 1433.4,614.6 1439.4,611.6" fill="none" stroke="#000" stroke-width="1.60" />
<polygon points="1433.6,663.2 1439.1,672.2 1437.6,683.2 1432.1,674.2" fill="#000" />
<polyline points="1426.6,677.2 1432.6,674.2 1438.6,672.2 1444.6,669.2" fill="none" stroke="#000" stroke-width="1.60" />
<polygon points="1441.1,720.8 1447.1,729.8 1446.1,740.8 1440.1,731.8" fill="#000" />
<polyline points="1434.6,734.8 1440.6,731.8 1446.6,729.8 1452.6,726.8" fill="none" stroke="#000" stroke-width="1.60" />
<polygon points="1461.5,822.0 1468.5,831.0 1468.5,842.0 1461.5,833.0" fill="#000" />
<polyline points="1456.0,836.0 1462.0,833.0 1468.0,831.0 1474.0,828.0" fill="none" stroke="#000" stroke-width="1.60" />
<polygon points="1053.0,785.0 1060.0,794.0 1060.0,805.0 1053.0,796.0" fill="#000" />
<polyline points="1047.5,799.0 1053.5,796.0 1059.5,794.0 1065.5,791.0" fill="none" stroke="#000" stroke-width="1.60" />
<polygon points="1072.0,869.0 1078.5,878.0 1078.0,889.0 1071.5,880.0" fill="#000" />
<polyline points="1066.0,883.0 1072.0,880.0 1078.0,878.0 1084.0,875.0" fill="none" stroke="#000" stroke-width="1.60" />
<polyline points="1463.0,650.0 1495.0,640.5" fill="none" stroke="#000" stroke-width="1.50" />
<polyline points="1472.0,647.5 1474.0,653.5" fill="none" stroke="#000" stroke-width="1.50" />
<polyline points="1484.5,644.0 1486.5,650.5" fill="none" stroke="#000" stroke-width="1.50" />
<polyline points="1495.0,640.5 1497.0,647.0" fill="none" stroke="#000" stroke-width="1.50" />
<polyline points="1482.0,637.0 1486.0,650.0" fill="none" stroke="#000" stroke-width="1.50" />
<polyline points="1505.0,618.0 1511.0,622.0 1510.0,630.0" fill="none" stroke="#000" stroke-width="1.50" />
<polyline points="1503.0,634.0 1513.0,636.0" fill="none" stroke="#000" stroke-width="1.50" />
<polyline points="1627.0,668.0 1635.0,672.0" fill="none" stroke="#000" stroke-width="1.50" />
<polyline points="1610.0,712.0 1636.0,704.0" fill="none" stroke="#000" stroke-width="1.50" />
<polyline points="1628.0,693.0 1638.0,690.0" fill="none" stroke="#000" stroke-width="1.50" />
<polyline points="1558.0,758.0 1562.0,776.0 1572.0,774.0" fill="none" stroke="#000" stroke-width="1.50" />
<polyline points="1600.0,765.0 1612.0,760.0 1618.0,770.0 1606.0,778.0 1600.0,765.0" fill="none" stroke="#000" stroke-width="1.50" />
<polyline points="1598.0,790.0 1602.0,768.0" fill="none" stroke="#000" stroke-width="1.50" />
<polyline points="1590.0,815.0 1596.0,812.0 1604.0,816.0" fill="none" stroke="#000" stroke-width="1.50" />
<polyline points="1580.0,832.0 1594.0,827.0 1602.0,832.0" fill="none" stroke="#000" stroke-width="1.50" />
<polyline points="1669.0,775.0 1690.0,770.0 1700.0,780.0" fill="none" stroke="#000" stroke-width="1.50" />
<polyline points="1668.0,770.0 1668.0,788.0" fill="none" stroke="#000" stroke-width="1.50" />
<polyline points="1680.0,785.0 1704.0,792.0" fill="none" stroke="#000" stroke-width="1.50" />
<polyline points="1672.0,850.0 1688.0,846.0" fill="none" stroke="#000" stroke-width="1.50" />
<polyline points="1675.0,852.0 1678.0,858.0" fill="none" stroke="#000" stroke-width="1.50" />
<polyline points="1560.0,884.0 1576.0,882.0" fill="none" stroke="#000" stroke-width="1.50" />
<polyline points="1558.0,896.0 1570.0,896.0" fill="none" stroke="#000" stroke-width="1.50" />
<polyline points="1562.0,908.0 1566.0,918.0" fill="none" stroke="#000" stroke-width="1.50" />
<polyline points="1506.0,908.0 1530.0,910.0 1532.0,922.0 1512.0,925.0 1506.0,908.0" fill="none" stroke="#000" stroke-width="1.50" />
<polyline points="1025.0,845.0 1035.0,838.0 1045.0,842.0 1048.0,858.0 1038.0,868.0 1026.0,862.0 1022.0,850.0" fill="none" stroke="#000" stroke-width="1.50" />
<polyline points="1015.0,850.0 1025.0,845.0" fill="none" stroke="#000" stroke-width="1.50" />
<polyline points="1048.0,850.0 1062.0,848.0 1063.0,858.0 1050.0,860.0" fill="none" stroke="#000" stroke-width="1.50" />
<polyline points="940.0,888.0 975.0,902.0 996.0,905.0" fill="none" stroke="#000" stroke-width="1.50" />
<polyline points="985.0,878.0 1016.0,870.0" fill="none" stroke="#000" stroke-width="1.50" />
<polyline points="1003.0,902.0 1018.0,900.0 1016.0,915.0 1005.0,915.0" fill="none" stroke="#000" stroke-width="1.50" />
<polyline points="995.0,920.0 1004.0,916.0" fill="none" stroke="#000" stroke-width="1.50" />
<polyline points="1112.0,852.0 1118.0,848.0 1125.0,854.0 1140.0,850.0" fill="none" stroke="#000" stroke-width="1.50" />
<polyline points="1112.0,920.0 1130.0,915.0" fill="none" stroke="#000" stroke-width="1.50" />
<polyline points="1118.0,925.0 1138.0,922.0" fill="none" stroke="#000" stroke-width="1.50" />
<polyline points="1440.0,870.0 1452.0,866.0 1455.0,880.0 1444.0,884.0" fill="none" stroke="#000" stroke-width="1.50" />
<polyline points="1476.0,862.0 1483.0,858.0 1486.0,880.0" fill="none" stroke="#000" stroke-width="1.50" />
<polyline points="1478.0,850.0 1470.0,842.0" fill="none" stroke="#000" stroke-width="1.50" />
<polyline points="1200.0,798.0 1230.0,790.0 1228.0,796.0" fill="none" stroke="#000" stroke-width="1.50" />
<polyline points="1218.0,880.0 1228.0,878.0 1230.0,886.0" fill="none" stroke="#000" stroke-width="1.50" />
<polyline points="1200.0,925.0 1215.0,920.0" fill="none" stroke="#000" stroke-width="1.50" />
<polyline points="1256.0,789.0 1262.0,780.0 1270.0,790.0 1262.0,815.0" fill="none" stroke="#000" stroke-width="1.50" />
<polyline points="1260.8,666.5 1263.7,666.0 1266.6,665.1 1269.4,663.8 1272.2,662.3 1274.9,660.9" fill="none" stroke="#000" stroke-width="1.70" stroke-linejoin="round"/>
<polyline points="1289.5,657.9 1292.4,657.3 1295.3,656.2 1298.0,654.8 1300.8,653.3 1303.6,652.0 1306.4,651.0 1309.4,650.4" fill="none" stroke="#000" stroke-width="1.70" stroke-linejoin="round"/>
<polyline points="1315.3,649.8 1318.2,649.3 1321.1,648.5 1323.9,647.2" fill="none" stroke="#000" stroke-width="1.70" stroke-linejoin="round"/>
<polyline points="1341.1,641.6 1344.0,641.3 1346.9,640.6 1349.8,639.6 1352.6,638.2" fill="none" stroke="#000" stroke-width="1.70" stroke-linejoin="round"/>
<polyline points="1369.8,633.1 1372.8,632.7 1375.6,631.9 1378.4,630.7 1381.2,629.2" fill="none" stroke="#000" stroke-width="1.70" stroke-linejoin="round"/>
<polyline points="1258.3,669.7 1261.3,669.4 1264.2,669.0" fill="none" stroke="#000" stroke-width="1.70" stroke-linejoin="round"/>
<polyline points="1270.0,667.3 1272.8,666.0" fill="none" stroke="#000" stroke-width="1.70" stroke-linejoin="round"/>
<polyline points="1278.3,663.1 1281.1,661.9 1284.0,661.0" fill="none" stroke="#000" stroke-width="1.70" stroke-linejoin="round"/>
<polyline points="1289.9,660.1 1292.9,659.8 1295.8,659.3 1298.7,658.7 1301.5,657.6 1304.3,656.4" fill="none" stroke="#000" stroke-width="1.70" stroke-linejoin="round"/>
<polyline points="1324.4,650.1 1327.4,649.7 1330.3,649.0 1333.1,648.0 1335.9,646.8 1338.7,645.3" fill="none" stroke="#000" stroke-width="1.70" stroke-linejoin="round"/>
<polyline points="1364.7,638.4 1367.5,637.2 1370.3,635.7 1373.0,634.3 1375.8,633.1 1378.7,632.1 1381.6,631.5 1384.6,631.1 1387.5,630.8 1390.5,630.4 1393.4,629.8 1396.2,628.8" fill="none" stroke="#000" stroke-width="1.70" stroke-linejoin="round"/>
<polyline points="1267.2,668.8 1270.0,667.6 1273.0,667.0 1276.0,667.0 1279.0,667.2 1282.1,667.3 1285.0,666.9 1287.8,665.8 1290.6,664.1 1293.3,662.2 1296.0,660.3 1298.7,658.9 1301.6,658.1 1304.6,657.9 1307.7,658.1 1310.7,658.3 1313.7,658.0 1316.6,657.2" fill="none" stroke="#000" stroke-width="1.70" stroke-linejoin="round"/>
<polyline points="1339.4,649.2 1342.4,649.1 1345.3,648.5 1348.1,647.2 1350.8,645.4 1353.5,643.4 1356.2,641.7 1359.0,640.4 1361.9,639.9 1364.9,639.8 1368.0,640.1" fill="none" stroke="#000" stroke-width="1.70" stroke-linejoin="round"/>
<polyline points="1374.0,639.7 1376.8,638.7" fill="none" stroke="#000" stroke-width="1.70" stroke-linejoin="round"/>
<polyline points="1387.7,631.7 1390.6,630.9" fill="none" stroke="#000" stroke-width="1.70" stroke-linejoin="round"/>
<polyline points="1396.6,630.9 1399.7,631.1" fill="none" stroke="#000" stroke-width="1.70" stroke-linejoin="round"/>
<polyline points="1259.4,676.1 1262.2,674.9 1265.2,674.8 1268.4,675.5 1271.5,676.0 1274.4,675.4 1277.1,673.5 1279.7,671.1 1282.4,669.0 1285.2,667.9" fill="none" stroke="#000" stroke-width="1.70" stroke-linejoin="round"/>
<polyline points="1297.3,668.3 1300.0,666.2 1302.6,663.8 1305.3,661.8 1308.2,661.1 1311.3,661.4 1314.4,662.1 1317.4,662.2 1320.3,661.1 1322.9,658.9 1325.5,656.5" fill="none" stroke="#000" stroke-width="1.70" stroke-linejoin="round"/>
<polyline points="1343.2,653.9 1345.8,651.6 1348.4,649.2 1351.2,647.7 1354.2,647.5 1357.3,648.1 1360.4,648.7 1363.4,648.3 1366.1,646.7 1368.7,644.3" fill="none" stroke="#000" stroke-width="1.70" stroke-linejoin="round"/>
<polyline points="1386.3,641.2 1389.0,639.4" fill="none" stroke="#000" stroke-width="1.70" stroke-linejoin="round"/>
<polyline points="1397.1,633.8 1400.2,634.0 1403.3,634.7" fill="none" stroke="#000" stroke-width="1.70" stroke-linejoin="round"/>
<polyline points="1409.2,634.1 1411.9,632.1 1414.5,629.6 1417.2,627.7 1420.1,626.9 1423.2,627.3 1426.3,628.0 1429.3,628.1" fill="none" stroke="#000" stroke-width="1.70" stroke-linejoin="round"/>
<polyline points="1257.1,680.3 1260.1,680.0 1263.2,680.3 1266.2,680.5 1269.2,680.2 1272.0,679.0 1274.7,677.2 1277.4,675.1 1280.1,673.4 1283.0,672.6 1286.0,672.5 1289.1,672.9 1292.1,672.9" fill="none" stroke="#000" stroke-width="1.70" stroke-linejoin="round"/>
<polyline points="1318.0,665.3 1320.8,664.3 1323.5,662.6 1326.2,660.5 1328.9,658.7 1331.7,657.6 1334.7,657.4" fill="none" stroke="#000" stroke-width="1.70" stroke-linejoin="round"/>
<polyline points="1351.9,652.2 1354.7,650.6 1357.6,649.9 1360.6,650.0" fill="none" stroke="#000" stroke-width="1.70" stroke-linejoin="round"/>
<polyline points="1369.6,649.5 1372.4,647.9 1375.0,645.9 1377.7,644.0 1380.5,642.7 1383.5,642.3 1386.5,642.5" fill="none" stroke="#000" stroke-width="1.70" stroke-linejoin="round"/>
<polyline points="1395.4,641.5 1398.1,639.6 1400.8,637.5" fill="none" stroke="#000" stroke-width="1.70" stroke-linejoin="round"/>
<polyline points="1243.9,691.1 1246.5,689.0 1249.2,686.9 1252.0,685.4 1254.8,684.6 1257.8,684.4 1260.9,684.7 1264.0,685.2 1267.0,685.3 1270.0,684.9" fill="none" stroke="#000" stroke-width="1.70" stroke-linejoin="round"/>
<polyline points="1275.6,682.1 1278.2,680.0 1280.9,677.9" fill="none" stroke="#000" stroke-width="1.70" stroke-linejoin="round"/>
<polyline points="1295.4,674.9 1298.5,675.2 1301.5,675.1" fill="none" stroke="#000" stroke-width="1.70" stroke-linejoin="round"/>
<polyline points="1307.2,673.0 1309.9,671.0 1312.5,668.9 1315.2,666.8" fill="none" stroke="#000" stroke-width="1.70" stroke-linejoin="round"/>
<polyline points="1352.4,654.7 1355.3,654.2 1358.4,654.3 1361.4,654.7 1364.5,655.1 1367.5,655.0" fill="none" stroke="#000" stroke-width="1.70" stroke-linejoin="round"/>
<polyline points="1373.2,652.9 1375.9,650.9 1378.5,648.8 1381.2,646.7 1384.0,645.2 1386.8,644.3 1389.8,644.1 1392.9,644.4 1396.0,644.8" fill="none" stroke="#000" stroke-width="1.70" stroke-linejoin="round"/>
<polyline points="1407.6,641.9 1410.2,639.8 1412.9,637.6 1415.6,635.8" fill="none" stroke="#000" stroke-width="1.70" stroke-linejoin="round"/>
<polyline points="1421.3,634.1 1424.3,634.1" fill="none" stroke="#000" stroke-width="1.70" stroke-linejoin="round"/>
<polyline points="1258.6,688.8 1261.4,687.6 1264.3,686.8 1267.2,686.4 1270.2,686.3 1273.3,686.4 1276.3,686.4 1279.3,686.2 1282.2,685.6 1285.0,684.6 1287.8,683.2 1290.6,681.5 1293.3,679.7" fill="none" stroke="#000" stroke-width="1.70" stroke-linejoin="round"/>
<polyline points="1298.7,676.5 1301.6,675.3" fill="none" stroke="#000" stroke-width="1.70" stroke-linejoin="round"/>
<polyline points="1307.4,674.3 1310.5,674.3 1313.5,674.4 1316.5,674.4 1319.5,674.1 1322.4,673.4 1325.2,672.3 1328.0,670.8 1330.7,669.1 1333.4,667.2 1336.1,665.5 1338.9,664.1 1341.7,663.1 1344.7,662.5 1347.6,662.3 1350.7,662.3" fill="none" stroke="#000" stroke-width="1.70" stroke-linejoin="round"/>
<polyline points="1362.5,661.1 1365.4,659.9" fill="none" stroke="#000" stroke-width="1.70" stroke-linejoin="round"/>
<polyline points="1370.8,656.6 1373.5,654.8" fill="none" stroke="#000" stroke-width="1.70" stroke-linejoin="round"/>
<polyline points="1379.1,651.8 1381.9,650.9 1384.9,650.4 1387.9,650.2 1390.9,650.3 1393.9,650.3 1396.9,650.2 1399.8,649.7 1402.7,648.8" fill="none" stroke="#000" stroke-width="1.70" stroke-linejoin="round"/>
<polyline points="1413.7,642.3 1416.4,640.7" fill="none" stroke="#000" stroke-width="1.70" stroke-linejoin="round"/>
<polyline points="1425.1,638.3 1428.1,638.2 1431.1,638.3" fill="none" stroke="#000" stroke-width="1.70" stroke-linejoin="round"/>
<polyline points="1245.6,701.0 1248.5,700.3 1251.3,699.2 1254.1,697.6 1256.8,695.9 1259.5,694.3 1262.3,693.1" fill="none" stroke="#000" stroke-width="1.70" stroke-linejoin="round"/>
<polyline points="1274.2,691.8 1277.2,691.5 1280.0,690.7 1282.9,689.4 1285.6,687.8" fill="none" stroke="#000" stroke-width="1.70" stroke-linejoin="round"/>
<polyline points="1296.8,682.8 1299.8,682.5 1302.8,682.5 1305.8,682.4 1308.7,681.9 1311.6,681.0 1314.4,679.6 1317.1,678.0 1319.9,676.3 1322.6,674.8 1325.5,673.8 1328.4,673.3 1331.4,673.1" fill="none" stroke="#000" stroke-width="1.70" stroke-linejoin="round"/>
<polyline points="1351.4,666.5 1354.2,665.1 1357.0,664.2 1360.0,663.8 1363.0,663.7 1366.0,663.6 1369.0,663.4 1371.9,662.7 1374.7,661.5 1377.5,660.0 1380.2,658.3 1382.9,656.7 1385.7,655.4" fill="none" stroke="#000" stroke-width="1.70" stroke-linejoin="round"/>
<polyline points="1420.2,645.1 1423.2,644.9 1426.2,644.9 1429.2,644.7 1432.1,644.3" fill="none" stroke="#000" stroke-width="1.70" stroke-linejoin="round"/>
<polyline points="1246.1,703.7 1249.0,703.1" fill="none" stroke="#000" stroke-width="1.70" stroke-linejoin="round"/>
<polyline points="1254.6,700.5 1257.3,699.0 1260.1,697.5 1262.9,696.5 1265.8,695.9 1268.8,695.6 1271.8,695.4 1274.8,695.0 1277.7,694.3 1280.5,693.1" fill="none" stroke="#000" stroke-width="1.70" stroke-linejoin="round"/>
<polyline points="1286.0,690.1 1288.8,688.7 1291.6,687.7 1294.5,687.2 1297.5,686.9 1300.5,686.7 1303.5,686.3 1306.3,685.5 1309.2,684.3 1311.9,682.8 1314.7,681.2 1317.5,679.9 1320.3,679.0 1323.3,678.5 1326.2,678.3 1329.2,678.1 1332.2,677.6" fill="none" stroke="#000" stroke-width="1.70" stroke-linejoin="round"/>
<polyline points="1355.0,669.7 1357.9,669.4" fill="none" stroke="#000" stroke-width="1.70" stroke-linejoin="round"/>
<polyline points="1363.7,668.0 1366.5,666.6" fill="none" stroke="#000" stroke-width="1.70" stroke-linejoin="round"/>
<polyline points="1372.0,663.6 1374.8,662.4 1377.7,661.6 1380.7,661.2 1383.7,661.0 1386.6,660.8 1389.6,660.2 1392.4,659.2" fill="none" stroke="#000" stroke-width="1.70" stroke-linejoin="round"/>
<polyline points="1246.4,705.7 1249.4,705.6 1252.4,705.6 1255.4,705.2 1258.2,704.2 1261.0,702.7 1263.7,700.9 1266.4,699.3 1269.3,698.2 1272.2,697.6 1275.2,697.5" fill="none" stroke="#000" stroke-width="1.70" stroke-linejoin="round"/>
<polyline points="1298.0,689.6 1301.0,689.4 1304.0,689.4" fill="none" stroke="#000" stroke-width="1.70" stroke-linejoin="round"/>
<polyline points="1309.9,688.6 1312.7,687.3 1315.4,685.7" fill="none" stroke="#000" stroke-width="1.70" stroke-linejoin="round"/>
<polyline points="1323.8,681.6 1326.8,681.3 1329.8,681.3 1332.8,681.2 1335.7,680.7 1338.5,679.6 1341.3,678.0 1344.0,676.3 1346.8,674.7 1349.6,673.7 1352.5,673.2 1355.6,673.2 1358.6,673.1 1361.5,672.8 1364.4,671.8 1367.2,670.4 1369.9,668.6 1372.6,667.0 1375.4,665.8 1378.3,665.2 1381.3,665.0 1384.4,665.0 1387.3,664.8 1390.2,664.0 1393.0,662.7 1395.7,661.0 1398.5,659.3 1401.3,658.0 1404.1,657.2 1407.1,656.9 1410.1,656.9" fill="none" stroke="#000" stroke-width="1.70" stroke-linejoin="round"/>
<polyline points="1273.1,703.1 1276.0,702.0 1278.8,701.2 1281.8,700.7 1284.7,700.2 1287.6,699.7 1290.5,698.9 1293.3,697.7 1296.1,696.4 1298.9,695.2 1301.8,694.1 1304.7,693.4 1307.6,692.9 1310.6,692.5 1313.5,691.8 1316.3,690.9 1319.1,689.8 1321.9,688.4 1324.8,687.2 1327.6,686.2 1330.5,685.6 1333.5,685.1" fill="none" stroke="#000" stroke-width="1.70" stroke-linejoin="round"/>
<polyline points="1345.0,681.8 1347.8,680.5 1350.6,679.3 1353.4,678.4 1356.4,677.8 1359.3,677.3 1362.2,676.8" fill="none" stroke="#000" stroke-width="1.70" stroke-linejoin="round"/>
<polyline points="1370.8,673.8 1373.6,672.5 1376.4,671.4 1379.3,670.6 1382.2,670.0 1385.1,669.6 1388.1,669.0 1390.9,668.2 1393.8,667.1 1396.6,665.8 1399.4,664.6 1402.2,663.5 1405.1,662.7 1408.0,662.2" fill="none" stroke="#000" stroke-width="1.70" stroke-linejoin="round"/>
<polyline points="1416.8,660.3 1419.6,659.2 1422.4,657.9 1425.2,656.6" fill="none" stroke="#000" stroke-width="1.70" stroke-linejoin="round"/>
<polyline points="1253.4,711.3 1256.3,710.4 1259.2,710.0 1262.2,710.0" fill="none" stroke="#000" stroke-width="1.70" stroke-linejoin="round"/>
<polyline points="1271.1,709.1 1273.9,707.7 1276.6,706.0 1279.3,704.2 1282.1,702.6 1284.9,701.6 1287.9,701.1" fill="none" stroke="#000" stroke-width="1.70" stroke-linejoin="round"/>
<polyline points="1293.9,701.1 1296.9,701.0 1299.8,700.3 1302.6,699.1 1305.4,697.5" fill="none" stroke="#000" stroke-width="1.70" stroke-linejoin="round"/>
<polyline points="1310.8,694.0 1313.6,692.8 1316.6,692.2 1319.6,692.1 1322.6,692.2" fill="none" stroke="#000" stroke-width="1.70" stroke-linejoin="round"/>
<polyline points="1328.5,691.6 1331.4,690.5 1334.1,688.9 1336.8,687.1 1339.5,685.4" fill="none" stroke="#000" stroke-width="1.70" stroke-linejoin="round"/>
<polyline points="1351.2,683.2 1354.3,683.2 1357.2,682.8 1360.1,681.8 1362.8,680.4 1365.5,678.5 1368.3,676.8 1371.0,675.4 1373.9,674.5 1376.9,674.2 1379.9,674.2 1382.9,674.3 1385.9,674.0 1388.8,673.2 1391.6,671.8 1394.3,670.0 1397.0,668.2 1399.7,666.7" fill="none" stroke="#000" stroke-width="1.70" stroke-linejoin="round"/>
<polyline points="1417.5,664.5 1420.3,663.2 1423.0,661.5 1425.7,659.6" fill="none" stroke="#000" stroke-width="1.70" stroke-linejoin="round"/>
<polyline points="1260.1,715.2 1262.9,714.1 1265.8,712.9" fill="none" stroke="#000" stroke-width="1.70" stroke-linejoin="round"/>
<polyline points="1288.8,706.3 1291.7,705.7 1294.6,704.9 1297.4,704.0" fill="none" stroke="#000" stroke-width="1.70" stroke-linejoin="round"/>
<polyline points="1303.1,701.9 1305.9,700.8 1308.8,699.6 1311.6,698.5 1314.4,697.5 1317.3,696.6 1320.2,695.9 1323.1,695.2 1326.0,694.6 1328.9,694.0 1331.9,693.4 1334.7,692.6 1337.6,691.8 1340.5,690.8 1343.3,689.8 1346.1,688.6 1349.0,687.4 1351.8,686.3 1354.6,685.3 1357.5,684.4 1360.4,683.6" fill="none" stroke="#000" stroke-width="1.70" stroke-linejoin="round"/>
<polyline points="1366.2,682.3 1369.1,681.7 1372.0,681.1 1374.9,680.4 1377.8,679.6 1380.7,678.6 1383.5,677.6" fill="none" stroke="#000" stroke-width="1.70" stroke-linejoin="round"/>
<polyline points="1392.0,674.1 1394.8,673.1 1397.7,672.1 1400.5,671.3 1403.4,670.6 1406.3,669.9 1409.3,669.3 1412.2,668.7 1415.1,668.1 1418.0,667.3" fill="none" stroke="#000" stroke-width="1.70" stroke-linejoin="round"/>
<polyline points="1249.2,722.1 1252.1,721.1 1254.9,720.3 1257.9,719.8 1260.8,719.5 1263.8,719.1 1266.7,718.5 1269.6,717.6 1272.4,716.5 1275.2,715.2 1278.0,713.8" fill="none" stroke="#000" stroke-width="1.70" stroke-linejoin="round"/>
<polyline points="1283.6,711.5 1286.5,710.7 1289.5,710.2 1292.4,709.9 1295.4,709.5 1298.3,708.9 1301.1,708.0 1304.0,706.8 1306.8,705.5 1309.5,704.1 1312.3,702.8" fill="none" stroke="#000" stroke-width="1.70" stroke-linejoin="round"/>
<polyline points="1321.0,700.6 1324.0,700.3 1326.9,699.9 1329.8,699.3 1332.7,698.4 1335.5,697.2 1338.3,695.8 1341.1,694.4 1343.9,693.2 1346.8,692.2 1349.7,691.5 1352.6,691.0 1355.5,690.7 1358.5,690.3 1361.4,689.6 1364.3,688.7 1367.1,687.5 1369.9,686.2 1372.7,684.8 1375.5,683.6 1378.3,682.6 1381.2,681.9" fill="none" stroke="#000" stroke-width="1.70" stroke-linejoin="round"/>
<polyline points="1421.6,671.1 1424.5,670.4 1427.4,669.4 1430.2,668.2 1433.0,666.9 1435.8,665.5" fill="none" stroke="#000" stroke-width="1.70" stroke-linejoin="round"/>
<polyline points="1258.3,722.5 1261.1,720.7 1263.8,719.2 1266.7,718.2" fill="none" stroke="#000" stroke-width="1.70" stroke-linejoin="round"/>
<polyline points="1275.6,717.5 1278.6,717.7 1281.7,717.8" fill="none" stroke="#000" stroke-width="1.70" stroke-linejoin="round"/>
<polyline points="1287.6,717.1 1290.5,716.1 1293.2,714.7" fill="none" stroke="#000" stroke-width="1.70" stroke-linejoin="round"/>
<polyline points="1304.1,707.4 1306.8,706.0 1309.7,705.1" fill="none" stroke="#000" stroke-width="1.70" stroke-linejoin="round"/>
<polyline points="1315.6,704.5 1318.7,704.6 1321.7,704.8 1324.8,704.9 1327.8,704.7 1330.7,704.0 1333.5,702.9 1336.2,701.4 1339.0,699.5 1341.6,697.6 1344.3,695.7" fill="none" stroke="#000" stroke-width="1.70" stroke-linejoin="round"/>
<polyline points="1358.7,691.6 1361.8,691.8 1364.8,692.0 1367.9,692.0 1370.8,691.7 1373.7,690.9 1376.5,689.6" fill="none" stroke="#000" stroke-width="1.70" stroke-linejoin="round"/>
<polyline points="1381.9,686.1 1384.6,684.1 1387.3,682.3 1390.1,680.8 1392.9,679.6 1395.8,679.0" fill="none" stroke="#000" stroke-width="1.70" stroke-linejoin="round"/>
<polyline points="1250.2,727.9 1253.2,727.9 1256.3,728.4 1259.4,728.8 1262.5,728.9" fill="none" stroke="#000" stroke-width="1.70" stroke-linejoin="round"/>
<polyline points="1278.9,719.1 1281.8,718.2 1284.7,718.0 1287.8,718.3 1290.9,718.8" fill="none" stroke="#000" stroke-width="1.70" stroke-linejoin="round"/>
<polyline points="1296.9,718.7 1299.8,717.6 1302.5,715.8 1305.1,713.7 1307.8,711.5 1310.5,709.6 1313.3,708.5 1316.3,708.1" fill="none" stroke="#000" stroke-width="1.70" stroke-linejoin="round"/>
<polyline points="1328.5,709.0 1331.4,708.1 1334.1,706.6 1336.8,704.5 1339.4,702.2 1342.1,700.3 1344.9,698.9 1347.8,698.2 1350.8,698.3 1353.9,698.7 1357.0,699.1 1360.0,699.2 1362.9,698.6 1365.7,697.2 1368.4,695.3 1371.1,693.0 1373.7,690.9 1376.5,689.3 1379.3,688.4 1382.3,688.3 1385.4,688.6 1388.5,689.1 1391.6,689.3 1394.5,689.0 1397.3,687.8 1400.0,686.0" fill="none" stroke="#000" stroke-width="1.70" stroke-linejoin="round"/>
<polyline points="1410.9,678.7 1413.8,678.4 1416.9,678.6 1420.0,679.1 1423.1,679.4" fill="none" stroke="#000" stroke-width="1.70" stroke-linejoin="round"/>
<polyline points="1262.8,730.7 1265.7,730.3 1268.7,729.8" fill="none" stroke="#000" stroke-width="1.70" stroke-linejoin="round"/>
<polyline points="1274.4,728.0 1277.2,726.8 1280.0,725.5 1282.8,724.1 1285.6,722.8" fill="none" stroke="#000" stroke-width="1.70" stroke-linejoin="round"/>
<polyline points="1294.2,720.1 1297.1,719.6 1300.1,719.2 1303.0,718.8 1305.9,718.3 1308.8,717.6" fill="none" stroke="#000" stroke-width="1.70" stroke-linejoin="round"/>
<polyline points="1317.3,714.2 1320.1,712.8 1322.9,711.5" fill="none" stroke="#000" stroke-width="1.70" stroke-linejoin="round"/>
<polyline points="1337.3,707.7 1340.3,707.4 1343.2,706.9" fill="none" stroke="#000" stroke-width="1.70" stroke-linejoin="round"/>
<polyline points="1360.2,700.2 1363.0,699.0" fill="none" stroke="#000" stroke-width="1.70" stroke-linejoin="round"/>
<polyline points="1368.8,697.2 1371.7,696.7 1374.6,696.3 1377.6,695.9 1380.5,695.5 1383.4,694.8 1386.3,694.0 1389.2,692.9 1392.0,691.6 1394.7,690.2 1397.5,688.9 1400.3,687.6 1403.2,686.6 1406.0,685.8" fill="none" stroke="#000" stroke-width="1.70" stroke-linejoin="round"/>
<polyline points="1417.8,684.0 1420.7,683.4 1423.6,682.6 1426.5,681.6 1429.3,680.3 1432.1,679.0 1434.8,677.6 1437.6,676.3" fill="none" stroke="#000" stroke-width="1.70" stroke-linejoin="round"/>
<polyline points="1251.5,735.5 1254.5,735.4 1257.7,736.2 1260.8,736.9 1263.8,736.5 1266.5,734.8 1269.1,732.3 1271.7,729.9 1274.5,728.5 1277.5,728.5 1280.6,729.3 1283.8,729.9 1286.7,729.5" fill="none" stroke="#000" stroke-width="1.70" stroke-linejoin="round"/>
<polyline points="1294.6,722.8 1297.4,721.5" fill="none" stroke="#000" stroke-width="1.70" stroke-linejoin="round"/>
<polyline points="1303.6,722.4 1306.7,723.0 1309.7,722.5 1312.4,720.7 1315.0,718.1 1317.6,715.8 1320.4,714.5 1323.4,714.6 1326.6,715.5 1329.7,716.0 1332.6,715.5 1335.3,713.6 1337.9,711.0" fill="none" stroke="#000" stroke-width="1.70" stroke-linejoin="round"/>
<polyline points="1343.4,707.6 1346.4,707.7" fill="none" stroke="#000" stroke-width="1.70" stroke-linejoin="round"/>
<polyline points="1363.5,701.6 1366.3,700.6 1369.4,700.8" fill="none" stroke="#000" stroke-width="1.70" stroke-linejoin="round"/>
<polyline points="1375.6,702.1 1378.5,701.4" fill="none" stroke="#000" stroke-width="1.70" stroke-linejoin="round"/>
<polyline points="1383.8,696.8 1386.4,694.6 1389.3,693.6" fill="none" stroke="#000" stroke-width="1.70" stroke-linejoin="round"/>
<polyline points="1252.4,740.7 1255.2,739.4 1258.1,738.5 1261.0,737.9 1264.0,737.7 1267.0,737.6 1270.0,737.5 1273.0,737.3 1275.9,736.7 1278.7,735.8" fill="none" stroke="#000" stroke-width="1.70" stroke-linejoin="round"/>
<polyline points="1292.5,728.1 1295.4,727.1 1298.3,726.4 1301.2,726.1 1304.2,726.0 1307.2,725.9 1310.2,725.7 1313.2,725.3 1316.1,724.5 1318.9,723.2" fill="none" stroke="#000" stroke-width="1.70" stroke-linejoin="round"/>
<polyline points="1324.4,720.0 1327.1,718.3 1329.9,716.9 1332.7,715.7 1335.6,714.9 1338.5,714.5 1341.5,714.4" fill="none" stroke="#000" stroke-width="1.70" stroke-linejoin="round"/>
<polyline points="1359.0,710.5 1361.7,708.9 1364.4,707.2 1367.2,705.6 1370.0,704.4 1372.8,703.5" fill="none" stroke="#000" stroke-width="1.70" stroke-linejoin="round"/>
<polyline points="1378.8,702.8 1381.8,702.7 1384.8,702.6 1387.8,702.3 1390.7,701.7" fill="none" stroke="#000" stroke-width="1.70" stroke-linejoin="round"/>
<polyline points="1253.0,744.4 1256.0,743.9 1258.9,743.5 1261.9,743.0 1264.8,742.3 1267.6,741.3 1270.4,740.1" fill="none" stroke="#000" stroke-width="1.70" stroke-linejoin="round"/>
<polyline points="1278.8,736.3 1281.7,735.5 1284.6,734.9 1287.6,734.5 1290.5,734.1 1293.5,733.5 1296.3,732.6 1299.2,731.5 1302.0,730.2 1304.7,728.9 1307.6,727.7 1310.4,726.7 1313.3,726.0 1316.2,725.5 1319.2,725.1 1322.1,724.6 1325.0,723.9 1327.9,722.9 1330.7,721.7 1333.5,720.4 1336.3,719.1 1339.1,718.0 1342.0,717.1 1344.9,716.5 1347.8,716.1 1350.8,715.6" fill="none" stroke="#000" stroke-width="1.70" stroke-linejoin="round"/>
<polyline points="1359.4,713.2 1362.2,711.9 1365.0,710.6" fill="none" stroke="#000" stroke-width="1.70" stroke-linejoin="round"/>
<polyline points="1376.5,707.0 1379.4,706.6" fill="none" stroke="#000" stroke-width="1.70" stroke-linejoin="round"/>
<polyline points="1393.8,702.1 1396.5,700.8 1399.4,699.6" fill="none" stroke="#000" stroke-width="1.70" stroke-linejoin="round"/>
<polyline points="1256.6,747.7 1259.3,745.8 1262.1,744.2 1264.9,743.2 1267.9,742.8" fill="none" stroke="#000" stroke-width="1.70" stroke-linejoin="round"/>
<polyline points="1282.8,742.1 1285.6,740.6 1288.3,738.8 1291.0,736.8 1293.7,735.0 1296.5,733.6 1299.4,732.8" fill="none" stroke="#000" stroke-width="1.70" stroke-linejoin="round"/>
<polyline points="1314.4,732.5 1317.3,731.4 1320.0,729.8" fill="none" stroke="#000" stroke-width="1.70" stroke-linejoin="round"/>
<polyline points="1336.9,722.5 1339.9,722.7 1343.0,722.9 1346.0,722.7" fill="none" stroke="#000" stroke-width="1.70" stroke-linejoin="round"/>
<polyline points="1362.5,713.5 1365.4,712.6 1368.3,712.3 1371.4,712.4 1374.4,712.6 1377.5,712.7" fill="none" stroke="#000" stroke-width="1.70" stroke-linejoin="round"/>
<polyline points="1386.0,709.9 1388.7,708.0" fill="none" stroke="#000" stroke-width="1.70" stroke-linejoin="round"/>
<polyline points="1396.9,702.9 1399.8,702.2" fill="none" stroke="#000" stroke-width="1.70" stroke-linejoin="round"/>
<polyline points="1274.6,746.8 1277.4,745.8 1280.3,744.9 1283.2,744.3 1286.2,743.7 1289.1,743.3 1292.0,742.8 1295.0,742.2" fill="none" stroke="#000" stroke-width="1.70" stroke-linejoin="round"/>
<polyline points="1306.3,738.2 1309.1,736.9 1311.9,735.7 1314.8,734.5 1317.6,733.5" fill="none" stroke="#000" stroke-width="1.70" stroke-linejoin="round"/>
<polyline points="1323.4,732.1 1326.3,731.6" fill="none" stroke="#000" stroke-width="1.70" stroke-linejoin="round"/>
<polyline points="1343.7,727.2 1346.5,725.9 1349.3,724.6 1352.1,723.3 1354.9,722.2" fill="none" stroke="#000" stroke-width="1.70" stroke-linejoin="round"/>
<polyline points="1369.5,718.9 1372.4,718.4" fill="none" stroke="#000" stroke-width="1.70" stroke-linejoin="round"/>
<polyline points="1381.0,716.0 1383.9,714.9 1386.7,713.6 1389.5,712.3 1392.3,711.0 1395.1,709.9 1398.0,709.0 1400.9,708.3 1403.8,707.7 1406.7,707.2 1409.7,706.8" fill="none" stroke="#000" stroke-width="1.70" stroke-linejoin="round"/>
<polyline points="1415.5,705.6 1418.4,704.8" fill="none" stroke="#000" stroke-width="1.70" stroke-linejoin="round"/>
<polyline points="1255.3,757.4 1258.2,756.8 1261.1,756.2 1264.0,755.4 1266.9,754.4 1269.7,753.3 1272.5,752.2" fill="none" stroke="#000" stroke-width="1.70" stroke-linejoin="round"/>
<polyline points="1286.9,747.9 1289.8,747.3 1292.7,746.6 1295.6,745.8 1298.4,744.7 1301.2,743.6 1304.0,742.4 1306.9,741.3 1309.7,740.4 1312.6,739.6 1315.5,739.0 1318.5,738.4 1321.4,737.8 1324.3,737.0 1327.1,736.1 1329.9,735.0 1332.8,733.8 1335.6,732.6 1338.4,731.6 1341.3,730.8 1344.2,730.1 1347.1,729.5" fill="none" stroke="#000" stroke-width="1.70" stroke-linejoin="round"/>
<polyline points="1367.1,722.9 1370.0,722.0 1372.9,721.2 1375.8,720.6 1378.7,720.0" fill="none" stroke="#000" stroke-width="1.70" stroke-linejoin="round"/>
<polyline points="1398.7,713.2 1401.6,712.4 1404.5,711.7 1407.4,711.1 1410.3,710.5 1413.2,709.8 1416.1,709.0 1418.9,708.0 1421.7,706.8" fill="none" stroke="#000" stroke-width="1.70" stroke-linejoin="round"/>
<polyline points="1256.0,761.3 1258.6,759.4 1261.4,758.0 1264.4,757.5 1267.4,757.6 1270.5,758.1 1273.6,758.4 1276.6,758.2 1279.4,757.2 1282.1,755.6 1284.8,753.4" fill="none" stroke="#000" stroke-width="1.70" stroke-linejoin="round"/>
<polyline points="1299.1,748.5 1302.2,749.0 1305.2,749.1 1308.1,748.6 1310.9,747.4 1313.6,745.5 1316.3,743.2 1318.9,741.2 1321.7,739.7" fill="none" stroke="#000" stroke-width="1.70" stroke-linejoin="round"/>
<polyline points="1327.6,739.0 1330.7,739.4 1333.8,739.8 1336.8,739.7" fill="none" stroke="#000" stroke-width="1.70" stroke-linejoin="round"/>
<polyline points="1342.4,737.4 1345.1,735.3 1347.7,733.1 1350.4,731.2 1353.3,730.0" fill="none" stroke="#000" stroke-width="1.70" stroke-linejoin="round"/>
<polyline points="1362.4,730.3 1365.4,730.6 1368.4,730.2 1371.2,729.1 1373.9,727.4 1376.6,725.2 1379.2,723.0" fill="none" stroke="#000" stroke-width="1.70" stroke-linejoin="round"/>
<polyline points="1384.8,720.5 1387.8,720.4 1390.9,720.7 1394.0,721.2 1397.0,721.2 1400.0,720.6 1402.7,719.2" fill="none" stroke="#000" stroke-width="1.70" stroke-linejoin="round"/>
<polyline points="1271.1,761.7 1273.9,760.4 1276.7,759.2 1279.6,758.1 1282.4,757.2 1285.3,756.5 1288.3,756.1 1291.2,755.6 1294.1,755.1 1297.1,754.4 1299.9,753.5 1302.7,752.4 1305.5,751.1 1308.3,749.8 1311.1,748.6" fill="none" stroke="#000" stroke-width="1.70" stroke-linejoin="round"/>
<polyline points="1319.8,746.2 1322.7,745.7 1325.7,745.2 1328.6,744.7 1331.5,743.9 1334.3,742.9 1337.2,741.7 1339.9,740.4" fill="none" stroke="#000" stroke-width="1.70" stroke-linejoin="round"/>
<polyline points="1368.8,732.4 1371.6,731.1" fill="none" stroke="#000" stroke-width="1.70" stroke-linejoin="round"/>
<polyline points="1377.2,728.5 1380.0,727.4 1382.9,726.6 1385.8,725.9 1388.7,725.4 1391.6,725.0 1394.6,724.5" fill="none" stroke="#000" stroke-width="1.70" stroke-linejoin="round"/>
<polyline points="1406.0,720.5 1408.8,719.2 1411.6,717.9 1414.4,716.9 1417.3,716.1 1420.2,715.5 1423.2,715.0 1426.1,714.6 1429.0,714.0 1431.9,713.3 1434.8,712.3 1437.6,711.1 1440.4,709.8" fill="none" stroke="#000" stroke-width="1.70" stroke-linejoin="round"/>
<polyline points="1260.1,768.1 1263.1,767.9 1266.1,767.8 1269.1,767.4 1272.0,766.8" fill="none" stroke="#000" stroke-width="1.70" stroke-linejoin="round"/>
<polyline points="1277.6,764.3 1280.4,762.7 1283.1,761.2 1285.9,759.8 1288.7,758.7 1291.6,758.0 1294.6,757.7 1297.6,757.5" fill="none" stroke="#000" stroke-width="1.70" stroke-linejoin="round"/>
<polyline points="1306.4,756.2 1309.3,755.2 1312.0,753.8 1314.8,752.2" fill="none" stroke="#000" stroke-width="1.70" stroke-linejoin="round"/>
<polyline points="1320.3,749.2 1323.2,748.2 1326.1,747.5" fill="none" stroke="#000" stroke-width="1.70" stroke-linejoin="round"/>
<polyline points="1335.0,746.9 1338.0,746.5" fill="none" stroke="#000" stroke-width="1.70" stroke-linejoin="round"/>
<polyline points="1360.5,737.1 1363.5,736.8" fill="none" stroke="#000" stroke-width="1.70" stroke-linejoin="round"/>
<polyline points="1369.5,736.4 1372.4,736.0 1375.3,735.2 1378.1,734.1 1380.9,732.6" fill="none" stroke="#000" stroke-width="1.70" stroke-linejoin="round"/>
<polyline points="1389.2,728.2 1392.0,727.2 1394.9,726.6 1397.9,726.3 1400.9,726.2 1403.9,726.0 1406.8,725.5 1409.7,724.7" fill="none" stroke="#000" stroke-width="1.70" stroke-linejoin="round"/>
<polyline points="1415.3,722.1 1418.1,720.5 1420.8,718.9 1423.6,717.6" fill="none" stroke="#000" stroke-width="1.70" stroke-linejoin="round"/>
<polyline points="1266.8,771.4 1269.7,770.9 1272.6,770.4 1275.5,769.7 1278.4,768.8 1281.2,767.6 1284.0,766.4 1286.8,765.2 1289.7,764.1 1292.5,763.3 1295.5,762.7 1298.4,762.2 1301.3,761.7 1304.2,760.9 1307.1,760.0 1309.9,758.8 1312.7,757.5 1315.5,756.4" fill="none" stroke="#000" stroke-width="1.70" stroke-linejoin="round"/>
<polyline points="1324.2,754.1 1327.1,753.6 1330.0,753.0 1332.9,752.2 1335.8,751.2" fill="none" stroke="#000" stroke-width="1.70" stroke-linejoin="round"/>
<polyline points="1341.4,748.7 1344.2,747.6 1347.1,746.6" fill="none" stroke="#000" stroke-width="1.70" stroke-linejoin="round"/>
<polyline points="1358.7,744.3 1361.6,743.4 1364.4,742.3" fill="none" stroke="#000" stroke-width="1.70" stroke-linejoin="round"/>
<polyline points="1375.8,737.9 1378.7,737.3 1381.6,736.8 1384.5,736.2 1387.4,735.6 1390.3,734.6 1393.1,733.5 1395.9,732.3 1398.7,731.0 1401.6,730.0" fill="none" stroke="#000" stroke-width="1.70" stroke-linejoin="round"/>
<polyline points="1407.4,728.6 1410.3,728.1 1413.2,727.5 1416.1,726.8 1419.0,725.8 1421.8,724.7 1424.6,723.4 1427.4,722.2 1430.3,721.2" fill="none" stroke="#000" stroke-width="1.70" stroke-linejoin="round"/>
<polyline points="1258.7,777.0 1261.5,775.8 1264.4,775.2 1267.4,775.1 1270.5,775.4" fill="none" stroke="#000" stroke-width="1.70" stroke-linejoin="round"/>
<polyline points="1285.0,772.1 1287.7,770.0 1290.3,768.0 1293.1,766.4 1295.9,765.3 1298.8,764.8" fill="none" stroke="#000" stroke-width="1.70" stroke-linejoin="round"/>
<polyline points="1313.9,764.6 1316.7,763.2 1319.4,761.4" fill="none" stroke="#000" stroke-width="1.70" stroke-linejoin="round"/>
<polyline points="1324.7,757.3 1327.5,755.8" fill="none" stroke="#000" stroke-width="1.70" stroke-linejoin="round"/>
<polyline points="1333.3,754.5 1336.3,754.6 1339.4,754.9 1342.5,755.1" fill="none" stroke="#000" stroke-width="1.70" stroke-linejoin="round"/>
<polyline points="1361.9,745.2 1364.8,744.4 1367.8,744.2 1370.8,744.4" fill="none" stroke="#000" stroke-width="1.70" stroke-linejoin="round"/>
<polyline points="1382.7,743.4 1385.5,741.8 1388.2,739.8 1390.8,737.8 1393.5,736.0 1396.3,734.6 1399.2,734.0 1402.2,733.9 1405.3,734.1" fill="none" stroke="#000" stroke-width="1.70" stroke-linejoin="round"/>
<polyline points="1414.3,733.9 1417.2,732.8 1419.9,731.1 1422.6,729.1" fill="none" stroke="#000" stroke-width="1.70" stroke-linejoin="round"/>
<polyline points="1305.8,769.9 1308.7,769.5" fill="none" stroke="#000" stroke-width="1.70" stroke-linejoin="round"/>
<polyline points="1314.5,767.9 1317.3,766.7" fill="none" stroke="#000" stroke-width="1.70" stroke-linejoin="round"/>
<polyline points="1331.2,759.7 1334.0,758.7 1336.9,758.0 1339.9,757.6 1342.9,757.3" fill="none" stroke="#000" stroke-width="1.70" stroke-linejoin="round"/>
<polyline points="1363.1,752.1 1365.9,750.6 1368.6,749.1 1371.4,747.7 1374.2,746.5 1377.1,745.6 1380.0,745.0 1382.9,744.6 1385.9,744.3 1388.9,744.1 1391.9,743.8 1394.8,743.3 1397.7,742.6 1400.5,741.6" fill="none" stroke="#000" stroke-width="1.70" stroke-linejoin="round"/>
<polyline points="1408.9,737.3 1411.6,735.8 1414.4,734.5" fill="none" stroke="#000" stroke-width="1.70" stroke-linejoin="round"/>
<polyline points="1423.0,731.9 1426.0,731.5 1429.0,731.3 1432.0,731.1 1434.9,730.8" fill="none" stroke="#000" stroke-width="1.70" stroke-linejoin="round"/>
<polyline points="1266.3,786.4 1269.0,784.4 1271.6,782.3 1274.4,780.7" fill="none" stroke="#000" stroke-width="1.70" stroke-linejoin="round"/>
<polyline points="1300.5,774.5 1303.2,772.5" fill="none" stroke="#000" stroke-width="1.70" stroke-linejoin="round"/>
<polyline points="1314.9,770.2 1317.9,770.6" fill="none" stroke="#000" stroke-width="1.70" stroke-linejoin="round"/>
<polyline points="1326.7,768.6 1329.4,766.8 1332.0,764.7 1334.7,762.7" fill="none" stroke="#000" stroke-width="1.70" stroke-linejoin="round"/>
<polyline points="1366.3,752.9 1369.1,751.6 1372.0,751.1 1375.0,751.1 1378.1,751.4 1381.1,751.7 1384.1,751.5 1387.0,750.6 1389.8,749.1 1392.4,747.1" fill="none" stroke="#000" stroke-width="1.70" stroke-linejoin="round"/>
<polyline points="1409.7,742.0 1412.7,742.2 1415.7,741.9 1418.5,740.9 1421.3,739.3 1424.0,737.2 1426.6,735.1 1429.3,733.5 1432.2,732.4 1435.2,732.1" fill="none" stroke="#000" stroke-width="1.70" stroke-linejoin="round"/>
<polyline points="1315.8,775.5 1318.8,775.2" fill="none" stroke="#000" stroke-width="1.70" stroke-linejoin="round"/>
<polyline points="1327.4,772.6 1330.1,771.0 1332.8,769.4 1335.6,767.7 1338.3,766.2 1341.1,764.9 1344.0,764.0 1346.9,763.4" fill="none" stroke="#000" stroke-width="1.70" stroke-linejoin="round"/>
<polyline points="1364.7,761.6 1367.6,760.5 1370.3,759.1 1373.1,757.5 1375.8,755.8 1378.5,754.2 1381.3,752.8 1384.2,751.7 1387.1,751.0 1390.0,750.6 1393.0,750.4 1396.0,750.4 1399.0,750.3 1402.0,750.0 1404.9,749.3" fill="none" stroke="#000" stroke-width="1.70" stroke-linejoin="round"/>
<polyline points="1413.3,745.5 1416.0,743.8 1418.8,742.2 1421.5,740.7 1424.3,739.5 1427.2,738.6 1430.1,738.1 1433.1,737.9 1436.1,737.8" fill="none" stroke="#000" stroke-width="1.70" stroke-linejoin="round"/>
<polyline points="1267.8,795.3 1270.6,793.9 1273.3,792.1" fill="none" stroke="#000" stroke-width="1.70" stroke-linejoin="round"/>
<polyline points="1336.6,773.6 1339.6,773.4" fill="none" stroke="#000" stroke-width="1.70" stroke-linejoin="round"/>
<polyline points="1359.5,766.1 1362.5,766.1 1365.4,765.6 1368.2,764.4 1371.0,762.7 1373.7,760.9 1376.4,759.4" fill="none" stroke="#000" stroke-width="1.70" stroke-linejoin="round"/>
<polyline points="1388.3,758.4 1391.2,757.7 1394.0,756.2 1396.7,754.4 1399.4,752.7 1402.3,751.5 1405.2,751.0 1408.2,751.0 1411.2,751.1 1414.2,750.7 1417.0,749.6 1419.8,748.0 1422.5,746.1 1425.2,744.6" fill="none" stroke="#000" stroke-width="1.70" stroke-linejoin="round"/>
<polyline points="1437.1,743.5 1440.0,742.8 1442.8,741.5" fill="none" stroke="#000" stroke-width="1.70" stroke-linejoin="round"/>
<polyline points="1317.1,783.3 1319.9,781.7 1322.8,781.0 1325.8,781.0 1328.8,780.9 1331.6,779.9 1334.4,778.2 1337.1,776.5 1340.0,775.7" fill="none" stroke="#000" stroke-width="1.70" stroke-linejoin="round"/>
<polyline points="1357.2,770.4 1360.2,770.2 1363.2,770.2" fill="none" stroke="#000" stroke-width="1.70" stroke-linejoin="round"/>
<polyline points="1371.6,766.3 1374.4,765.1 1377.4,764.8 1380.4,764.8 1383.3,764.4 1386.1,763.0" fill="none" stroke="#000" stroke-width="1.70" stroke-linejoin="round"/>
<polyline points="1394.5,759.4 1397.6,759.4 1400.5,759.1 1403.3,757.9" fill="none" stroke="#000" stroke-width="1.70" stroke-linejoin="round"/>
<polyline points="1420.6,752.7 1423.3,751.0" fill="none" stroke="#000" stroke-width="1.70" stroke-linejoin="round"/>
<polyline points="1309.1,789.1 1311.7,787.0 1314.5,785.8" fill="none" stroke="#000" stroke-width="1.70" stroke-linejoin="round"/>
<polyline points="1323.7,786.6 1326.8,787.0 1329.8,786.7 1332.6,785.4 1335.3,783.4 1337.9,780.9" fill="none" stroke="#000" stroke-width="1.70" stroke-linejoin="round"/>
<polyline points="1355.4,777.8 1358.5,777.8 1361.3,777.0 1364.0,775.2 1366.7,772.8 1369.3,770.4" fill="none" stroke="#000" stroke-width="1.70" stroke-linejoin="round"/>
<polyline points="1377.8,767.3 1380.9,767.8 1384.0,768.5 1387.1,768.8 1390.0,768.3 1392.8,766.9 1395.5,764.7 1398.1,762.3 1400.7,760.1 1403.5,758.7 1406.4,758.2" fill="none" stroke="#000" stroke-width="1.70" stroke-linejoin="round"/>
<polyline points="1412.6,759.1 1415.7,759.7 1418.7,759.5 1421.6,758.5 1424.3,756.6 1426.9,754.2 1429.5,751.8 1432.2,750.1 1435.1,749.2" fill="none" stroke="#000" stroke-width="1.70" stroke-linejoin="round"/>
<polyline points="1281.6,805.3 1284.7,805.4 1287.5,804.2 1290.1,801.8 1292.7,799.1" fill="none" stroke="#000" stroke-width="1.70" stroke-linejoin="round"/>
<polyline points="1313.2,795.8 1315.8,793.3 1318.4,790.7 1321.1,788.9 1324.1,788.5 1327.2,789.1 1330.4,790.1 1333.4,790.4 1336.3,789.5 1339.0,787.4" fill="none" stroke="#000" stroke-width="1.70" stroke-linejoin="round"/>
<polyline points="1364.7,778.8 1367.2,776.1 1369.9,774.2 1372.8,773.4 1375.9,773.8 1379.1,774.8" fill="none" stroke="#000" stroke-width="1.70" stroke-linejoin="round"/>
<polyline points="1385.1,774.7 1387.8,772.9 1390.4,770.2 1393.0,767.7 1395.7,766.2 1398.7,765.9 1401.8,766.6 1405.0,767.5 1408.1,767.7 1410.9,766.6 1413.5,764.4" fill="none" stroke="#000" stroke-width="1.70" stroke-linejoin="round"/>
<polyline points="1441.8,753.2 1444.5,751.3 1447.4,750.8 1450.5,751.3" fill="none" stroke="#000" stroke-width="1.70" stroke-linejoin="round"/>
<polyline points="1267.4,810.3 1270.3,809.6" fill="none" stroke="#000" stroke-width="1.70" stroke-linejoin="round"/>
<polyline points="1307.8,799.4 1310.9,799.6 1313.9,799.7 1316.9,799.4 1319.7,798.6 1322.5,797.2 1325.2,795.3 1327.9,793.4 1330.6,791.6 1333.4,790.2 1336.3,789.4 1339.3,789.2 1342.3,789.3 1345.4,789.5 1348.4,789.5 1351.3,789.0 1354.1,787.9 1356.9,786.3 1359.6,784.3 1362.3,782.4 1365.0,780.8 1367.8,779.7 1370.8,779.2 1373.8,779.1 1376.8,779.3 1379.9,779.5 1382.9,779.2 1385.7,778.5 1388.5,777.1 1391.2,775.3 1393.9,773.3 1396.6,771.5 1399.4,770.1 1402.3,769.3 1405.3,769.0 1408.3,769.1 1411.4,769.3 1414.4,769.3 1417.3,768.9 1420.2,767.8 1422.9,766.2 1425.6,764.3 1428.3,762.4" fill="none" stroke="#000" stroke-width="1.70" stroke-linejoin="round"/>
<polyline points="1314.3,802.2 1316.8,799.0 1319.5,797.4 1322.7,797.9 1325.9,799.4 1329.0,799.9 1331.7,798.1 1334.2,794.9" fill="none" stroke="#000" stroke-width="1.70" stroke-linejoin="round"/>
<polyline points="1366.3,788.4 1369.1,786.9" fill="none" stroke="#000" stroke-width="1.70" stroke-linejoin="round"/>
<polyline points="1374.1,781.0 1377.0,780.2 1380.2,781.3 1383.4,782.6 1386.4,782.3 1389.0,779.8 1391.5,776.6 1394.1,774.6" fill="none" stroke="#000" stroke-width="1.70" stroke-linejoin="round"/>
<polyline points="1400.5,776.3 1403.6,777.0 1406.4,775.7 1408.9,772.6 1411.4,769.7 1414.3,768.7 1417.5,769.7 1420.7,771.1" fill="none" stroke="#000" stroke-width="1.70" stroke-linejoin="round"/>
<polyline points="1426.3,768.6 1428.8,765.4 1431.5,763.3 1434.5,763.3 1437.7,764.7 1440.9,765.6" fill="none" stroke="#000" stroke-width="1.70" stroke-linejoin="round"/>
<polyline points="1318.1,806.8 1320.8,804.7 1323.4,802.5 1326.1,800.6 1329.0,799.7 1332.0,799.6" fill="none" stroke="#000" stroke-width="1.70" stroke-linejoin="round"/>
<polyline points="1346.6,796.9 1349.3,794.6" fill="none" stroke="#000" stroke-width="1.70" stroke-linejoin="round"/>
<polyline points="1369.8,791.1 1372.5,789.1 1375.1,786.8 1377.8,784.9" fill="none" stroke="#000" stroke-width="1.70" stroke-linejoin="round"/>
<polyline points="1392.8,784.5 1395.6,783.3 1398.3,781.3 1400.9,779.0 1403.6,777.1 1406.5,776.0 1409.5,775.9 1412.6,776.3 1415.7,776.8 1418.6,776.6 1421.5,775.4 1424.1,773.5 1426.8,771.2" fill="none" stroke="#000" stroke-width="1.70" stroke-linejoin="round"/>
<polyline points="1441.5,768.9 1444.5,768.7 1447.3,767.6 1450.0,765.6 1452.6,763.3" fill="none" stroke="#000" stroke-width="1.70" stroke-linejoin="round"/>
<polyline points="1298.9,817.6 1301.7,816.6 1304.5,815.2 1307.2,813.4 1309.9,811.5 1312.6,809.9 1315.4,808.6 1318.3,807.8 1321.3,807.5 1324.3,807.6 1327.4,807.7 1330.4,807.6 1333.3,807.1 1336.1,806.1 1338.9,804.6 1341.6,802.8 1344.3,801.0" fill="none" stroke="#000" stroke-width="1.70" stroke-linejoin="round"/>
<polyline points="1349.9,798.1 1352.8,797.3 1355.7,797.1 1358.8,797.1 1361.8,797.2 1364.8,797.1 1367.7,796.6 1370.6,795.6" fill="none" stroke="#000" stroke-width="1.70" stroke-linejoin="round"/>
<polyline points="1378.7,790.4 1381.5,788.8 1384.3,787.6 1387.2,786.9" fill="none" stroke="#000" stroke-width="1.70" stroke-linejoin="round"/>
<polyline points="1410.5,781.7 1413.2,779.9 1415.9,778.3 1418.7,777.1 1421.6,776.4 1424.6,776.2 1427.6,776.2 1430.7,776.3 1433.7,776.2 1436.6,775.6" fill="none" stroke="#000" stroke-width="1.70" stroke-linejoin="round"/>
<polyline points="1450.3,767.7 1453.2,766.6" fill="none" stroke="#000" stroke-width="1.70" stroke-linejoin="round"/>
<polyline points="1311.1,818.4 1314.0,817.9 1316.7,816.2 1319.3,813.7" fill="none" stroke="#000" stroke-width="1.70" stroke-linejoin="round"/>
<polyline points="1328.1,811.8 1331.2,812.3" fill="none" stroke="#000" stroke-width="1.70" stroke-linejoin="round"/>
<polyline points="1348.2,805.8 1351.3,806.3 1354.2,805.6 1356.9,803.7" fill="none" stroke="#000" stroke-width="1.70" stroke-linejoin="round"/>
<polyline points="1362.2,799.6 1365.2,799.2 1368.3,799.8 1371.4,800.2 1374.3,799.4 1376.9,797.4 1379.5,795.0 1382.3,793.4 1385.3,793.2 1388.4,793.8 1391.5,794.2" fill="none" stroke="#000" stroke-width="1.70" stroke-linejoin="round"/>
<polyline points="1399.6,788.8 1402.4,787.3" fill="none" stroke="#000" stroke-width="1.70" stroke-linejoin="round"/>
<polyline points="1408.5,787.8 1411.6,788.1 1414.4,787.1 1417.1,784.9 1419.7,782.6 1422.5,781.2 1425.5,781.2 1428.6,781.8 1431.7,782.0 1434.5,780.9 1437.1,778.6 1439.7,776.3" fill="none" stroke="#000" stroke-width="1.70" stroke-linejoin="round"/>
<polyline points="1451.7,775.9 1454.6,774.7" fill="none" stroke="#000" stroke-width="1.70" stroke-linejoin="round"/>
<polyline points="1274.2,832.5 1277.0,830.9" fill="none" stroke="#000" stroke-width="1.70" stroke-linejoin="round"/>
<polyline points="1300.1,824.7 1303.0,824.3 1305.9,823.7 1308.8,822.7" fill="none" stroke="#000" stroke-width="1.70" stroke-linejoin="round"/>
<polyline points="1314.4,820.0 1317.1,818.4 1319.9,816.9" fill="none" stroke="#000" stroke-width="1.70" stroke-linejoin="round"/>
<polyline points="1325.5,814.5 1328.4,813.7 1331.3,813.3" fill="none" stroke="#000" stroke-width="1.70" stroke-linejoin="round"/>
<polyline points="1351.7,809.0 1354.5,807.4" fill="none" stroke="#000" stroke-width="1.70" stroke-linejoin="round"/>
<polyline points="1362.8,803.2 1365.7,802.2" fill="none" stroke="#000" stroke-width="1.70" stroke-linejoin="round"/>
<polyline points="1377.5,800.9 1380.5,800.6 1383.4,800.0" fill="none" stroke="#000" stroke-width="1.70" stroke-linejoin="round"/>
<polyline points="1389.1,797.9 1391.9,796.5 1394.6,794.9 1397.4,793.4 1400.2,792.0" fill="none" stroke="#000" stroke-width="1.70" stroke-linejoin="round"/>
<polyline points="1405.9,790.1 1408.8,789.6 1411.8,789.3 1414.8,789.1 1417.7,788.9 1420.7,788.5 1423.6,787.8 1426.4,786.8 1429.2,785.5 1432.0,784.0" fill="none" stroke="#000" stroke-width="1.70" stroke-linejoin="round"/>
<polyline points="1271.7,835.3 1274.5,833.7 1277.3,832.5" fill="none" stroke="#000" stroke-width="1.70" stroke-linejoin="round"/>
<polyline points="1312.0,824.1 1314.8,822.2 1317.5,820.6 1320.3,819.4 1323.2,818.6 1326.1,818.2 1329.2,818.1 1332.2,818.3" fill="none" stroke="#000" stroke-width="1.70" stroke-linejoin="round"/>
<polyline points="1346.9,816.2 1349.7,814.7 1352.4,812.8" fill="none" stroke="#000" stroke-width="1.70" stroke-linejoin="round"/>
<polyline points="1360.5,807.5 1363.3,806.3 1366.2,805.4 1369.2,805.1 1372.2,805.0 1375.2,805.2 1378.3,805.3 1381.3,805.3 1384.3,805.0 1387.2,804.2 1390.0,803.1 1392.7,801.5 1395.4,799.7 1398.1,797.8 1400.8,796.0 1403.6,794.4 1406.4,793.1 1409.3,792.3" fill="none" stroke="#000" stroke-width="1.70" stroke-linejoin="round"/>
<polyline points="1418.3,792.0 1421.3,792.2 1424.3,792.2 1427.3,791.8 1430.2,791.1" fill="none" stroke="#000" stroke-width="1.70" stroke-linejoin="round"/>
<polyline points="1267.1,843.4 1269.7,841.0" fill="none" stroke="#000" stroke-width="1.70" stroke-linejoin="round"/>
<polyline points="1278.2,837.7 1281.3,838.6 1284.3,838.3 1287.0,836.2" fill="none" stroke="#000" stroke-width="1.70" stroke-linejoin="round"/>
<polyline points="1315.6,827.4 1318.7,827.8 1321.5,826.5 1324.1,823.8" fill="none" stroke="#000" stroke-width="1.70" stroke-linejoin="round"/>
<polyline points="1332.8,821.7 1335.9,822.4 1338.8,821.5 1341.4,819.0" fill="none" stroke="#000" stroke-width="1.70" stroke-linejoin="round"/>
<polyline points="1346.8,815.4 1349.9,816.0 1353.1,816.9 1356.0,816.4 1358.7,814.2 1361.2,811.5 1364.0,810.0 1367.1,810.3 1370.2,811.3 1373.3,811.2 1376.0,809.4 1378.5,806.6 1381.2,804.7 1384.2,804.6 1387.4,805.6 1390.5,805.9" fill="none" stroke="#000" stroke-width="1.70" stroke-linejoin="round"/>
<polyline points="1404.5,799.9 1407.7,800.6 1410.5,799.5 1413.1,797.0 1415.7,794.5 1418.5,793.5 1421.7,794.2 1424.8,795.1 1427.8,794.5 1430.4,792.2" fill="none" stroke="#000" stroke-width="1.70" stroke-linejoin="round"/>
<polyline points="1452.9,782.8 1456.0,782.8" fill="none" stroke="#000" stroke-width="1.70" stroke-linejoin="round"/>
<polyline points="1267.5,846.2 1270.6,846.4 1273.4,845.1" fill="none" stroke="#000" stroke-width="1.70" stroke-linejoin="round"/>
<polyline points="1278.6,840.3 1281.5,839.5 1284.6,840.1 1287.8,840.8 1290.7,840.3 1293.3,838.2" fill="none" stroke="#000" stroke-width="1.70" stroke-linejoin="round"/>
<polyline points="1304.9,834.9 1307.9,835.1 1310.7,833.7 1313.3,831.1" fill="none" stroke="#000" stroke-width="1.70" stroke-linejoin="round"/>
<polyline points="1328.0,828.9 1330.6,826.7 1333.2,824.1 1336.0,822.7" fill="none" stroke="#000" stroke-width="1.70" stroke-linejoin="round"/>
<polyline points="1356.1,816.9 1359.3,817.6 1362.4,818.2 1365.3,817.4 1367.9,815.2 1370.5,812.6 1373.3,811.3 1376.3,811.6 1379.5,812.4 1382.5,812.4 1385.3,810.7" fill="none" stroke="#000" stroke-width="1.70" stroke-linejoin="round"/>
<polyline points="1390.5,806.1 1393.4,805.6 1396.6,806.4 1399.7,806.9 1402.6,806.0 1405.2,803.7 1407.8,801.2 1410.6,800.0 1413.7,800.3 1416.8,801.1" fill="none" stroke="#000" stroke-width="1.70" stroke-linejoin="round"/>
<polyline points="1273.7,847.2 1276.5,845.8 1279.3,844.5 1282.2,843.5" fill="none" stroke="#000" stroke-width="1.70" stroke-linejoin="round"/>
<polyline points="1293.9,841.6 1296.9,841.3" fill="none" stroke="#000" stroke-width="1.70" stroke-linejoin="round"/>
<polyline points="1302.7,839.9 1305.5,838.9 1308.3,837.6" fill="none" stroke="#000" stroke-width="1.70" stroke-linejoin="round"/>
<polyline points="1313.9,834.7 1316.7,833.3 1319.5,832.2 1322.3,831.3 1325.3,830.6 1328.2,830.2 1331.2,829.9 1334.1,829.6 1337.1,829.2" fill="none" stroke="#000" stroke-width="1.70" stroke-linejoin="round"/>
<polyline points="1345.7,826.5 1348.5,825.1 1351.2,823.7 1354.0,822.2 1356.8,820.9" fill="none" stroke="#000" stroke-width="1.70" stroke-linejoin="round"/>
<polyline points="1362.5,819.1 1365.5,818.5 1368.4,818.1" fill="none" stroke="#000" stroke-width="1.70" stroke-linejoin="round"/>
<polyline points="1388.6,812.7 1391.4,811.2 1394.2,809.8 1397.0,808.6 1399.8,807.6 1402.7,806.9" fill="none" stroke="#000" stroke-width="1.70" stroke-linejoin="round"/>
<polyline points="1411.6,805.8 1414.5,805.4" fill="none" stroke="#000" stroke-width="1.70" stroke-linejoin="round"/>
<polyline points="1420.3,804.1 1423.2,803.0 1426.0,801.7 1428.7,800.2 1431.5,798.8 1434.3,797.4 1437.1,796.3 1440.0,795.4 1442.9,794.8 1445.9,794.4 1448.8,794.1 1451.8,793.8" fill="none" stroke="#000" stroke-width="1.70" stroke-linejoin="round"/>
<polyline points="1274.6,852.2 1277.3,850.6" fill="none" stroke="#000" stroke-width="1.70" stroke-linejoin="round"/>
<polyline points="1282.8,847.3 1285.6,846.1 1288.5,845.2 1291.5,844.8 1294.4,844.6 1297.5,844.6 1300.5,844.4 1303.4,844.0 1306.3,843.2 1309.1,842.0 1311.8,840.4" fill="none" stroke="#000" stroke-width="1.70" stroke-linejoin="round"/>
<polyline points="1320.1,835.7 1322.9,834.6" fill="none" stroke="#000" stroke-width="1.70" stroke-linejoin="round"/>
<polyline points="1328.8,833.8 1331.8,833.7 1334.8,833.6 1337.8,833.4 1340.7,832.7 1343.6,831.7" fill="none" stroke="#000" stroke-width="1.70" stroke-linejoin="round"/>
<polyline points="1351.8,826.9 1354.6,825.3" fill="none" stroke="#000" stroke-width="1.70" stroke-linejoin="round"/>
<polyline points="1360.3,823.4 1363.2,823.0 1366.2,822.9 1369.2,822.8" fill="none" stroke="#000" stroke-width="1.70" stroke-linejoin="round"/>
<polyline points="1380.8,820.0 1383.6,818.4 1386.3,816.7 1389.0,815.1 1391.8,813.7 1394.7,812.8 1397.6,812.2 1400.6,812.0 1403.6,812.0" fill="none" stroke="#000" stroke-width="1.70" stroke-linejoin="round"/>
<polyline points="1409.6,811.5 1412.5,810.8 1415.3,809.7 1418.0,808.2 1420.8,806.6" fill="none" stroke="#000" stroke-width="1.70" stroke-linejoin="round"/>
<polyline points="1426.3,803.4 1429.1,802.3 1432.0,801.5 1435.0,801.2 1438.0,801.1 1441.0,801.0 1444.0,800.8 1446.9,800.3 1449.7,799.4 1452.5,798.0 1455.3,796.4 1458.0,794.7" fill="none" stroke="#000" stroke-width="1.70" stroke-linejoin="round"/>
<polyline points="1272.1,855.4 1275.0,854.5 1278.0,854.2 1281.0,854.1" fill="none" stroke="#000" stroke-width="1.70" stroke-linejoin="round"/>
<polyline points="1286.7,852.1 1289.4,850.4 1292.2,849.2" fill="none" stroke="#000" stroke-width="1.70" stroke-linejoin="round"/>
<polyline points="1303.9,847.1 1306.7,845.5" fill="none" stroke="#000" stroke-width="1.70" stroke-linejoin="round"/>
<polyline points="1312.3,843.2 1315.3,843.0 1318.3,842.8 1321.2,842.0 1323.9,840.5" fill="none" stroke="#000" stroke-width="1.70" stroke-linejoin="round"/>
<polyline points="1329.5,837.8 1332.5,837.4 1335.5,837.3 1338.4,836.8" fill="none" stroke="#000" stroke-width="1.70" stroke-linejoin="round"/>
<polyline points="1355.6,831.5 1358.5,830.6 1361.2,829.0 1364.0,827.5 1366.8,826.5 1369.8,826.2 1372.8,826.1 1375.7,825.4 1378.5,824.1 1381.2,822.4" fill="none" stroke="#000" stroke-width="1.70" stroke-linejoin="round"/>
<polyline points="1387.0,820.6 1390.0,820.5 1392.9,820.2 1395.8,819.1 1398.5,817.5 1401.3,816.0 1404.1,815.2 1407.1,814.9" fill="none" stroke="#000" stroke-width="1.70" stroke-linejoin="round"/>
<polyline points="1413.0,814.0 1415.8,812.6 1418.5,811.0 1421.3,809.8 1424.3,809.4 1427.3,809.3" fill="none" stroke="#000" stroke-width="1.70" stroke-linejoin="round"/>
<polyline points="1433.0,807.6 1435.8,806.0 1438.6,804.6" fill="none" stroke="#000" stroke-width="1.70" stroke-linejoin="round"/>
<polyline points="1269.9,860.1 1272.8,859.5" fill="none" stroke="#000" stroke-width="1.70" stroke-linejoin="round"/>
<polyline points="1278.7,858.3 1281.6,857.5" fill="none" stroke="#000" stroke-width="1.70" stroke-linejoin="round"/>
<polyline points="1287.3,855.7 1290.1,854.6" fill="none" stroke="#000" stroke-width="1.70" stroke-linejoin="round"/>
<polyline points="1298.6,851.3 1301.5,850.4 1304.4,849.6" fill="none" stroke="#000" stroke-width="1.70" stroke-linejoin="round"/>
<polyline points="1310.2,848.4 1313.1,847.7 1316.0,847.0 1318.9,846.2 1321.7,845.2 1324.6,844.1 1327.4,843.0 1330.2,841.8 1333.0,840.8 1335.9,839.9 1338.8,839.1 1341.7,838.4 1344.6,837.8 1347.5,837.2 1350.4,836.5 1353.3,835.7 1356.2,834.7 1359.0,833.6" fill="none" stroke="#000" stroke-width="1.70" stroke-linejoin="round"/>
<polyline points="1376.1,827.9 1379.1,827.3 1382.0,826.7 1384.9,826.0 1387.7,825.2 1390.6,824.2 1393.4,823.1 1396.3,822.0 1399.1,820.9 1401.9,819.8 1404.8,818.9 1407.7,818.1" fill="none" stroke="#000" stroke-width="1.70" stroke-linejoin="round"/>
<polyline points="1413.5,816.8 1416.4,816.2 1419.3,815.5 1422.2,814.7 1425.0,813.7" fill="none" stroke="#000" stroke-width="1.70" stroke-linejoin="round"/>
<polyline points="1436.4,809.3 1439.2,808.4 1442.1,807.6" fill="none" stroke="#000" stroke-width="1.70" stroke-linejoin="round"/>
<polyline points="1453.7,805.0 1456.6,804.2 1459.5,803.2" fill="none" stroke="#000" stroke-width="1.70" stroke-linejoin="round"/>
<polyline points="1267.7,864.9 1270.5,863.5 1273.3,862.4 1276.2,861.6 1279.1,861.0 1282.1,860.7 1285.1,860.4 1288.0,860.0 1290.9,859.3 1293.8,858.4 1296.6,857.2 1299.4,855.8 1302.2,854.4 1305.0,853.0 1307.8,851.9 1310.7,851.1 1313.6,850.5" fill="none" stroke="#000" stroke-width="1.70" stroke-linejoin="round"/>
<polyline points="1319.5,849.8 1322.5,849.4 1325.4,848.8 1328.2,847.9" fill="none" stroke="#000" stroke-width="1.70" stroke-linejoin="round"/>
<polyline points="1333.8,845.4 1336.6,843.9 1339.4,842.6 1342.2,841.4" fill="none" stroke="#000" stroke-width="1.70" stroke-linejoin="round"/>
<polyline points="1371.0,833.4 1373.8,832.1 1376.6,830.9 1379.5,830.0 1382.4,829.4 1385.4,829.1 1388.4,828.8 1391.3,828.4 1394.2,827.8 1397.1,826.9 1399.9,825.8 1402.7,824.4 1405.5,823.0 1408.3,821.6 1411.1,820.4 1414.0,819.5" fill="none" stroke="#000" stroke-width="1.70" stroke-linejoin="round"/>
<polyline points="1271.5,869.5 1274.3,867.7 1276.9,865.6 1279.6,863.5" fill="none" stroke="#000" stroke-width="1.70" stroke-linejoin="round"/>
<polyline points="1285.1,860.6 1288.0,860.0 1291.0,860.0 1294.1,860.3 1297.2,860.6 1300.2,860.7 1303.2,860.3 1306.0,859.3 1308.8,857.7" fill="none" stroke="#000" stroke-width="1.70" stroke-linejoin="round"/>
<polyline points="1325.4,849.0 1328.4,849.1" fill="none" stroke="#000" stroke-width="1.70" stroke-linejoin="round"/>
<polyline points="1337.6,849.7 1340.5,849.0 1343.3,847.7 1346.0,845.8 1348.7,843.7 1351.3,841.6 1354.0,839.9 1356.8,838.7 1359.8,838.1 1362.8,838.0" fill="none" stroke="#000" stroke-width="1.70" stroke-linejoin="round"/>
<polyline points="1417.7,824.0 1420.4,821.9 1423.1,819.8 1425.8,818.0 1428.6,816.8 1431.5,816.2" fill="none" stroke="#000" stroke-width="1.70" stroke-linejoin="round"/>
<polyline points="1437.6,816.4 1440.7,816.8" fill="none" stroke="#000" stroke-width="1.70" stroke-linejoin="round"/>
<polyline points="1272.0,872.2 1274.7,870.3 1277.5,868.7 1280.4,868.1 1283.4,868.1" fill="none" stroke="#000" stroke-width="1.70" stroke-linejoin="round"/>
<polyline points="1289.2,867.0 1291.9,865.2 1294.7,863.5 1297.6,862.8 1300.6,862.8 1303.6,862.7 1306.5,861.8 1309.2,860.1" fill="none" stroke="#000" stroke-width="1.70" stroke-linejoin="round"/>
<polyline points="1314.8,857.4 1317.8,857.4 1320.8,857.4 1323.7,856.6 1326.4,855.0 1329.1,853.2 1332.0,852.1 1335.0,852.0 1338.0,852.1" fill="none" stroke="#000" stroke-width="1.70" stroke-linejoin="round"/>
<polyline points="1363.6,842.9 1366.4,841.6 1369.4,841.2 1372.4,841.3 1375.4,841.0 1378.1,839.6 1380.8,837.7 1383.6,836.3 1386.6,835.9 1389.6,836.0 1392.6,835.7 1395.4,834.5" fill="none" stroke="#000" stroke-width="1.70" stroke-linejoin="round"/>
<polyline points="1412.6,829.3 1415.3,827.5 1418.1,825.9" fill="none" stroke="#000" stroke-width="1.70" stroke-linejoin="round"/>
<polyline points="1427.0,825.1 1429.8,824.1 1432.6,822.4 1435.3,820.7 1438.2,819.8" fill="none" stroke="#000" stroke-width="1.70" stroke-linejoin="round"/>
<polyline points="1447.1,819.0 1449.8,817.3 1452.5,815.5 1455.4,814.5" fill="none" stroke="#000" stroke-width="1.70" stroke-linejoin="round"/>
<polyline points="1275.7,876.1 1278.6,875.2 1281.4,874.1 1284.2,872.7 1286.9,871.2 1289.7,869.8 1292.5,868.6" fill="none" stroke="#000" stroke-width="1.70" stroke-linejoin="round"/>
<polyline points="1310.1,865.4 1313.0,864.8" fill="none" stroke="#000" stroke-width="1.70" stroke-linejoin="round"/>
<polyline points="1327.0,858.4 1329.8,857.2 1332.7,856.2 1335.6,855.5" fill="none" stroke="#000" stroke-width="1.70" stroke-linejoin="round"/>
<polyline points="1353.2,852.5 1356.0,851.3 1358.8,849.9" fill="none" stroke="#000" stroke-width="1.70" stroke-linejoin="round"/>
<polyline points="1364.3,847.0 1367.1,845.8 1370.0,844.8" fill="none" stroke="#000" stroke-width="1.70" stroke-linejoin="round"/>
<polyline points="1378.8,843.4 1381.8,843.1 1384.7,842.7 1387.6,842.0 1390.5,841.1 1393.3,839.9 1396.1,838.5 1398.8,837.0 1401.6,835.6 1404.4,834.4" fill="none" stroke="#000" stroke-width="1.70" stroke-linejoin="round"/>
<polyline points="1410.2,832.8 1413.1,832.4" fill="none" stroke="#000" stroke-width="1.70" stroke-linejoin="round"/>
<polyline points="1433.4,827.1 1436.1,825.6 1438.9,824.2 1441.7,823.0 1444.6,822.1" fill="none" stroke="#000" stroke-width="1.70" stroke-linejoin="round"/>
<polyline points="1453.4,820.7 1456.4,820.4 1459.3,820.0 1462.2,819.3" fill="none" stroke="#000" stroke-width="1.70" stroke-linejoin="round"/>
<polyline points="1284.5,874.8 1287.5,874.5 1290.5,874.2 1293.5,874.0 1296.4,873.5" fill="none" stroke="#000" stroke-width="1.70" stroke-linejoin="round"/>
<polyline points="1321.8,863.3 1324.8,863.0 1327.8,862.8 1330.7,862.5 1333.7,862.1 1336.6,861.4" fill="none" stroke="#000" stroke-width="1.70" stroke-linejoin="round"/>
<polyline points="1356.2,852.5 1359.1,851.9" fill="none" stroke="#000" stroke-width="1.70" stroke-linejoin="round"/>
<polyline points="1365.1,851.3 1368.0,851.1 1371.0,850.7 1373.9,850.0 1376.7,849.0" fill="none" stroke="#000" stroke-width="1.70" stroke-linejoin="round"/>
<polyline points="1382.3,846.3 1385.1,844.8 1387.8,843.3" fill="none" stroke="#000" stroke-width="1.70" stroke-linejoin="round"/>
<polyline points="1416.9,836.4 1419.6,835.0" fill="none" stroke="#000" stroke-width="1.70" stroke-linejoin="round"/>
<polyline points="1433.7,829.0 1436.7,828.6 1439.6,828.4 1442.6,828.1 1445.6,827.8 1448.5,827.2 1451.4,826.3 1454.2,825.1 1457.0,823.7" fill="none" stroke="#000" stroke-width="1.70" stroke-linejoin="round"/>
<polyline points="1270.9,883.6 1273.8,882.5" fill="none" stroke="#000" stroke-width="1.70" stroke-linejoin="round"/>
<polyline points="1296.8,876.0 1299.9,876.4 1303.0,876.7 1305.9,876.0 1308.6,874.2 1311.2,872.0" fill="none" stroke="#000" stroke-width="1.70" stroke-linejoin="round"/>
<polyline points="1326.0,870.0 1328.7,868.5 1331.4,866.3 1334.1,864.3 1336.9,863.3 1339.9,863.3" fill="none" stroke="#000" stroke-width="1.70" stroke-linejoin="round"/>
<polyline points="1357.0,857.1 1360.0,856.8 1363.1,857.3 1366.1,857.5 1369.0,856.7 1371.7,854.9 1374.4,852.7" fill="none" stroke="#000" stroke-width="1.70" stroke-linejoin="round"/>
<polyline points="1389.1,850.7 1391.9,849.2" fill="none" stroke="#000" stroke-width="1.70" stroke-linejoin="round"/>
<polyline points="1397.2,845.0 1400.0,844.0 1403.1,844.1 1406.2,844.6" fill="none" stroke="#000" stroke-width="1.70" stroke-linejoin="round"/>
<polyline points="1414.7,841.3 1417.3,839.1 1420.1,837.8 1423.1,837.6 1426.2,838.1 1429.3,838.3 1432.1,837.5 1434.8,835.6 1437.5,833.3 1440.2,831.7 1443.1,831.2 1446.2,831.5 1449.3,831.9 1452.2,831.4 1455.0,829.9 1457.6,827.6 1460.3,825.7 1463.2,824.8" fill="none" stroke="#000" stroke-width="1.70" stroke-linejoin="round"/>
<polyline points="1274.8,888.1 1277.4,885.9 1280.0,883.8 1282.9,882.6 1285.9,882.5 1289.0,883.0 1292.0,883.3 1295.0,882.9 1297.7,881.3 1300.4,879.1 1303.0,877.0 1305.8,875.6 1308.8,875.3 1311.9,875.7 1315.0,876.1 1317.9,875.9 1320.7,874.5 1323.4,872.4 1326.0,870.2 1328.8,868.6" fill="none" stroke="#000" stroke-width="1.70" stroke-linejoin="round"/>
<polyline points="1334.8,868.4 1337.9,868.9 1340.9,868.8 1343.7,867.7 1346.4,865.7 1349.0,863.4 1351.7,861.7 1354.6,861.0 1357.7,861.2 1360.8,861.7 1363.8,861.7" fill="none" stroke="#000" stroke-width="1.70" stroke-linejoin="round"/>
<polyline points="1377.6,853.8 1380.6,853.9 1383.7,854.5 1386.8,854.6 1389.7,853.9 1392.4,852.1" fill="none" stroke="#000" stroke-width="1.70" stroke-linejoin="round"/>
<polyline points="1397.7,847.9 1400.5,846.8 1403.5,846.7 1406.6,847.2" fill="none" stroke="#000" stroke-width="1.70" stroke-linejoin="round"/>
<polyline points="1415.4,845.4 1418.0,843.1 1420.7,841.0 1423.5,839.7 1426.4,839.5 1429.5,839.9 1432.6,840.3 1435.6,840.0 1438.4,838.6 1441.0,836.4 1443.7,834.2 1446.4,832.7 1449.4,832.3 1452.5,832.7 1455.6,833.1 1458.5,833.0 1461.3,831.7 1464.0,829.6" fill="none" stroke="#000" stroke-width="1.70" stroke-linejoin="round"/>
<polyline points="1289.4,885.6 1292.5,886.2 1295.7,886.9 1298.7,886.6 1301.4,885.0 1304.0,882.5 1306.6,880.2 1309.4,878.9 1312.4,879.0 1315.6,879.8 1318.7,880.2 1321.6,879.5" fill="none" stroke="#000" stroke-width="1.70" stroke-linejoin="round"/>
<polyline points="1341.7,873.5 1344.5,872.3 1347.1,870.0" fill="none" stroke="#000" stroke-width="1.70" stroke-linejoin="round"/>
<polyline points="1355.4,865.4 1358.5,866.1 1361.7,866.8 1364.7,866.5 1367.4,864.9" fill="none" stroke="#000" stroke-width="1.70" stroke-linejoin="round"/>
<polyline points="1375.4,858.8 1378.4,858.8 1381.6,859.6 1384.7,860.1 1387.6,859.4 1390.3,857.4 1392.8,854.9 1395.5,852.8 1398.4,852.0 1401.5,852.4" fill="none" stroke="#000" stroke-width="1.70" stroke-linejoin="round"/>
<polyline points="1421.4,845.3 1424.5,845.9 1427.7,846.6 1430.6,846.4 1433.4,844.8 1436.0,842.3" fill="none" stroke="#000" stroke-width="1.70" stroke-linejoin="round"/>
<polyline points="1276.2,896.8 1279.0,895.3 1281.7,893.7 1284.5,892.1 1287.3,890.8 1290.1,889.8 1293.0,889.1 1296.0,888.7 1299.0,888.5 1302.0,888.4 1304.9,888.1 1307.9,887.6 1310.7,886.7 1313.6,885.5 1316.3,884.0 1319.1,882.4 1321.8,880.9 1324.6,879.5 1327.4,878.4 1330.3,877.6" fill="none" stroke="#000" stroke-width="1.70" stroke-linejoin="round"/>
<polyline points="1361.9,868.2 1364.7,867.0" fill="none" stroke="#000" stroke-width="1.70" stroke-linejoin="round"/>
<polyline points="1370.6,865.7 1373.5,865.5 1376.5,865.4 1379.5,865.2 1382.5,864.7 1385.4,864.0 1388.2,862.9 1391.0,861.5 1393.7,859.9 1396.5,858.3 1399.2,856.9 1402.0,855.7" fill="none" stroke="#000" stroke-width="1.70" stroke-linejoin="round"/>
<polyline points="1413.8,853.9 1416.8,853.7 1419.8,853.3 1422.7,852.6 1425.5,851.6" fill="none" stroke="#000" stroke-width="1.70" stroke-linejoin="round"/>
<polyline points="1431.0,848.7 1433.8,847.1 1436.5,845.6 1439.4,844.3 1442.2,843.4 1445.1,842.8 1448.1,842.5 1451.1,842.4 1454.1,842.2 1457.1,841.9 1460.0,841.2 1462.8,840.3 1465.6,839.0" fill="none" stroke="#000" stroke-width="1.70" stroke-linejoin="round"/>
<polyline points="1276.9,900.7 1279.7,899.4 1282.3,897.0 1284.9,894.6 1287.7,893.4 1290.8,893.7 1294.0,894.5 1297.0,894.6 1299.8,893.2 1302.4,890.7 1305.0,888.4 1307.8,887.3 1310.9,887.7 1314.1,888.5 1317.1,888.5 1319.9,887.0 1322.4,884.5" fill="none" stroke="#000" stroke-width="1.70" stroke-linejoin="round"/>
<polyline points="1327.9,881.3 1331.0,881.7 1334.2,882.5 1337.2,882.4 1339.9,880.8 1342.5,878.3 1345.2,876.0 1348.0,875.2 1351.1,875.7 1354.3,876.5 1357.3,876.3 1360.0,874.6 1362.6,872.0" fill="none" stroke="#000" stroke-width="1.70" stroke-linejoin="round"/>
<polyline points="1377.4,870.1 1380.1,868.3 1382.6,865.8 1385.3,863.7 1388.2,863.1" fill="none" stroke="#000" stroke-width="1.70" stroke-linejoin="round"/>
<polyline points="1400.1,862.1 1402.7,859.5 1405.4,857.5 1408.3,857.0 1411.5,857.7 1414.6,858.3 1417.5,857.8 1420.2,855.9 1422.8,853.3 1425.5,851.4 1428.4,851.0" fill="none" stroke="#000" stroke-width="1.70" stroke-linejoin="round"/>
<polyline points="1437.6,851.7 1440.3,849.6 1442.8,847.1 1445.6,845.2 1448.5,844.9" fill="none" stroke="#000" stroke-width="1.70" stroke-linejoin="round"/>
<polyline points="1282.8,900.0 1285.6,898.3" fill="none" stroke="#000" stroke-width="1.70" stroke-linejoin="round"/>
<polyline points="1291.6,898.2 1294.8,899.1 1297.9,899.7 1300.8,899.2 1303.6,897.6 1306.2,895.2 1308.7,892.6 1311.4,890.6 1314.3,889.6" fill="none" stroke="#000" stroke-width="1.70" stroke-linejoin="round"/>
<polyline points="1320.5,890.7 1323.6,891.4 1326.6,891.3 1329.4,890.1 1332.1,887.9 1334.6,885.2 1337.3,882.9 1340.1,881.6 1343.1,881.5 1346.2,882.2 1349.4,883.1 1352.4,883.3 1355.3,882.5 1358.0,880.5 1360.6,877.9 1363.2,875.4" fill="none" stroke="#000" stroke-width="1.70" stroke-linejoin="round"/>
<polyline points="1368.8,873.3 1371.9,873.8" fill="none" stroke="#000" stroke-width="1.70" stroke-linejoin="round"/>
<polyline points="1389.1,868.0 1391.7,866.0 1394.6,865.2 1397.7,865.4 1400.8,866.3 1404.0,867.0 1407.0,866.8 1409.8,865.5 1412.4,863.3 1415.0,860.6 1417.6,858.4 1420.4,857.1 1423.4,857.1 1426.6,857.8 1429.7,858.7 1432.8,858.9 1435.7,857.9 1438.3,855.9 1440.9,853.3 1443.5,850.8 1446.2,849.3 1449.2,848.8 1452.3,849.4" fill="none" stroke="#000" stroke-width="1.70" stroke-linejoin="round"/>
<polyline points="1281.2,908.0 1283.8,905.5 1286.5,903.6 1289.4,902.9 1292.4,903.2 1295.6,904.0 1298.7,904.3 1301.6,903.6" fill="none" stroke="#000" stroke-width="1.70" stroke-linejoin="round"/>
<polyline points="1306.9,899.3 1309.5,897.0 1312.3,895.7 1315.3,895.5 1318.4,896.1 1321.5,896.8 1324.5,896.7" fill="none" stroke="#000" stroke-width="1.70" stroke-linejoin="round"/>
<polyline points="1370.3,881.9 1373.3,881.8 1376.1,880.6" fill="none" stroke="#000" stroke-width="1.70" stroke-linejoin="round"/>
<polyline points="1393.1,874.1 1396.2,874.5 1399.1,873.9 1401.9,872.1 1404.5,869.7 1407.1,867.3 1409.8,865.9" fill="none" stroke="#000" stroke-width="1.70" stroke-linejoin="round"/>
<polyline points="1415.9,866.3 1419.1,867.0 1422.1,866.9 1424.9,865.7 1427.6,863.5 1430.1,861.0 1432.8,859.0 1435.7,858.2 1438.8,858.4 1441.9,859.2 1445.0,859.6" fill="none" stroke="#000" stroke-width="1.70" stroke-linejoin="round"/>
<polyline points="1461.6,850.7 1464.7,851.3 1467.9,852.0" fill="none" stroke="#000" stroke-width="1.70" stroke-linejoin="round"/>
<polyline points="1281.6,910.7 1284.5,909.5 1287.3,908.7 1290.3,908.2 1293.2,907.9 1296.2,907.5 1299.1,906.8 1302.0,905.8 1304.8,904.5 1307.5,903.1 1310.3,901.8" fill="none" stroke="#000" stroke-width="1.70" stroke-linejoin="round"/>
<polyline points="1316.1,900.1 1319.0,899.6 1322.0,899.3" fill="none" stroke="#000" stroke-width="1.70" stroke-linejoin="round"/>
<polyline points="1330.6,896.9 1333.4,895.6 1336.2,894.2 1339.0,892.9 1341.9,892.0 1344.8,891.5 1347.7,891.1" fill="none" stroke="#000" stroke-width="1.70" stroke-linejoin="round"/>
<polyline points="1388.0,879.1 1390.7,877.6 1393.5,876.4 1396.4,875.4 1399.3,874.7 1402.2,874.4" fill="none" stroke="#000" stroke-width="1.70" stroke-linejoin="round"/>
<polyline points="1408.1,873.5 1411.0,872.7 1413.8,871.5 1416.6,870.1 1419.4,868.7" fill="none" stroke="#000" stroke-width="1.70" stroke-linejoin="round"/>
<polyline points="1425.1,866.7 1428.0,866.2 1431.0,865.8 1433.9,865.4" fill="none" stroke="#000" stroke-width="1.70" stroke-linejoin="round"/>
<polyline points="1442.5,862.5 1445.3,861.1 1448.1,859.8 1450.9,858.7 1453.8,858.0 1456.7,857.6 1459.7,857.3 1462.6,856.8" fill="none" stroke="#000" stroke-width="1.70" stroke-linejoin="round"/>
<polyline points="1305.4,908.3 1308.3,907.8 1311.3,907.4 1314.2,906.9" fill="none" stroke="#000" stroke-width="1.70" stroke-linejoin="round"/>
<polyline points="1331.2,900.2 1334.1,899.6 1337.0,899.1 1340.0,898.7 1342.9,898.1" fill="none" stroke="#000" stroke-width="1.70" stroke-linejoin="round"/>
<polyline points="1371.6,889.4 1374.5,888.5 1377.3,887.4 1380.1,886.0 1382.9,884.7 1385.7,883.6 1388.6,882.7" fill="none" stroke="#000" stroke-width="1.70" stroke-linejoin="round"/>
<polyline points="1403.2,879.7 1406.0,878.6 1408.8,877.2 1411.6,875.9 1414.4,874.8 1417.3,874.0 1420.2,873.4 1423.2,873.0 1426.1,872.6 1429.0,871.9 1431.9,871.0 1434.7,869.8 1437.5,868.4" fill="none" stroke="#000" stroke-width="1.70" stroke-linejoin="round"/>
<polyline points="1446.0,865.3 1448.9,864.7 1451.9,864.3 1454.8,863.8 1457.7,863.2 1460.5,862.2" fill="none" stroke="#000" stroke-width="1.70" stroke-linejoin="round"/>
<polyline points="1280.2,919.7 1282.9,918.2 1285.8,917.3" fill="none" stroke="#000" stroke-width="1.70" stroke-linejoin="round"/>
<polyline points="1300.7,916.0 1303.4,914.4 1306.1,912.5 1308.8,910.7 1311.6,909.4 1314.5,908.7 1317.5,908.6 1320.6,908.7 1323.6,908.8" fill="none" stroke="#000" stroke-width="1.70" stroke-linejoin="round"/>
<polyline points="1334.8,903.5 1337.5,901.7 1340.3,900.6 1343.2,900.1 1346.3,900.1 1349.3,900.3 1352.3,900.2 1355.2,899.5 1358.0,898.1 1360.7,896.3" fill="none" stroke="#000" stroke-width="1.70" stroke-linejoin="round"/>
<polyline points="1375.0,891.7 1378.1,891.8" fill="none" stroke="#000" stroke-width="1.70" stroke-linejoin="round"/>
<polyline points="1392.1,885.4 1394.8,884.0 1397.7,883.2" fill="none" stroke="#000" stroke-width="1.70" stroke-linejoin="round"/>
<polyline points="1403.8,883.2 1406.8,883.3 1409.7,882.9 1412.6,881.8 1415.3,880.1" fill="none" stroke="#000" stroke-width="1.70" stroke-linejoin="round"/>
<polyline points="1429.5,874.6 1432.5,874.8" fill="none" stroke="#000" stroke-width="1.70" stroke-linejoin="round"/>
<polyline points="1438.4,874.1 1441.2,872.9 1444.0,871.1" fill="none" stroke="#000" stroke-width="1.70" stroke-linejoin="round"/>
<polyline points="1449.4,867.5 1452.2,866.5 1455.2,866.1 1458.2,866.1" fill="none" stroke="#000" stroke-width="1.70" stroke-linejoin="round"/>
<polyline points="1306.9,917.3 1309.9,917.0 1312.8,916.2 1315.6,914.9" fill="none" stroke="#000" stroke-width="1.70" stroke-linejoin="round"/>
<polyline points="1338.4,906.8 1341.4,906.9 1344.4,906.6 1347.2,905.7 1350.0,904.2 1352.7,902.4 1355.4,900.4 1358.1,898.5 1360.9,897.1" fill="none" stroke="#000" stroke-width="1.70" stroke-linejoin="round"/>
<polyline points="1378.8,896.1 1381.7,895.1 1384.4,893.6 1387.1,891.7 1389.8,889.7 1392.5,887.9" fill="none" stroke="#000" stroke-width="1.70" stroke-linejoin="round"/>
<polyline points="1416.1,884.6 1418.8,883.0 1421.5,881.0 1424.2,879.0 1426.9,877.3 1429.7,876.1 1432.6,875.4 1435.6,875.3 1438.7,875.5 1441.7,875.8 1444.8,875.7 1447.7,875.1 1450.5,874.0 1453.2,872.3" fill="none" stroke="#000" stroke-width="1.70" stroke-linejoin="round"/>
<polyline points="1281.6,927.9 1284.6,927.9" fill="none" stroke="#000" stroke-width="1.70" stroke-linejoin="round"/>
<polyline points="1293.2,925.3 1295.9,923.5 1298.7,921.9 1301.5,920.9 1304.5,920.5 1307.5,920.6" fill="none" stroke="#000" stroke-width="1.70" stroke-linejoin="round"/>
<polyline points="1313.4,919.9 1316.2,918.6 1319.0,916.9" fill="none" stroke="#000" stroke-width="1.70" stroke-linejoin="round"/>
<polyline points="1327.4,913.2 1330.4,913.2 1333.4,913.2 1336.4,912.9" fill="none" stroke="#000" stroke-width="1.70" stroke-linejoin="round"/>
<polyline points="1347.4,906.9 1350.3,906.0 1353.3,905.8 1356.3,905.9" fill="none" stroke="#000" stroke-width="1.70" stroke-linejoin="round"/>
<polyline points="1379.2,898.5 1382.2,898.5 1385.2,898.1 1388.0,896.9 1390.7,895.2 1393.4,893.4 1396.2,892.0 1399.1,891.2" fill="none" stroke="#000" stroke-width="1.70" stroke-linejoin="round"/>
<polyline points="1408.1,891.0 1411.0,890.1" fill="none" stroke="#000" stroke-width="1.70" stroke-linejoin="round"/>
<polyline points="1428.0,883.8 1431.0,883.8 1434.0,883.2 1436.8,881.9 1439.5,880.1 1442.2,878.4 1445.0,877.1 1447.9,876.5 1450.9,876.4 1453.9,876.5" fill="none" stroke="#000" stroke-width="1.70" stroke-linejoin="round"/>
<polyline points="1282.2,931.4 1285.1,930.9 1288.1,930.4 1290.9,929.5" fill="none" stroke="#000" stroke-width="1.70" stroke-linejoin="round"/>
<polyline points="1302.2,924.5 1305.0,923.5 1307.9,922.8" fill="none" stroke="#000" stroke-width="1.70" stroke-linejoin="round"/>
<polyline points="1316.7,921.5 1319.6,920.8" fill="none" stroke="#000" stroke-width="1.70" stroke-linejoin="round"/>
<polyline points="1330.9,916.0 1333.7,914.8 1336.6,914.0 1339.5,913.3 1342.4,912.9 1345.4,912.5 1348.3,911.9 1351.2,911.1" fill="none" stroke="#000" stroke-width="1.70" stroke-linejoin="round"/>
<polyline points="1399.7,894.9 1402.7,894.5 1405.6,894.0 1408.6,893.5 1411.4,892.8 1414.3,891.7" fill="none" stroke="#000" stroke-width="1.70" stroke-linejoin="round"/>
<polyline points="1419.9,889.1 1422.7,887.9 1425.5,886.8" fill="none" stroke="#000" stroke-width="1.70" stroke-linejoin="round"/>
<polyline points="1443.0,883.1 1445.8,882.0 1448.6,880.7 1451.4,879.3 1454.2,878.1 1457.1,877.2 1460.0,876.5 1462.9,876.0 1465.9,875.6 1468.8,875.1 1471.7,874.4" fill="none" stroke="#000" stroke-width="1.70" stroke-linejoin="round"/>
<polyline points="1334.4,918.6 1337.5,919.3 1340.5,919.1 1343.3,917.9 1345.9,915.6 1348.5,913.2" fill="none" stroke="#000" stroke-width="1.70" stroke-linejoin="round"/>
<polyline points="1368.9,909.1 1371.5,906.6 1374.2,904.6" fill="none" stroke="#000" stroke-width="1.70" stroke-linejoin="round"/>
<polyline points="1415.0,895.8 1417.6,893.5 1420.2,891.1 1423.0,889.5 1425.9,889.1 1429.0,889.6 1432.2,890.3 1435.2,890.2 1438.0,889.0 1440.6,886.9 1443.2,884.5 1445.9,882.6" fill="none" stroke="#000" stroke-width="1.70" stroke-linejoin="round"/>
<polyline points="1309.2,930.3 1311.9,928.3 1314.6,926.8 1317.5,925.8 1320.4,925.6 1323.5,925.8" fill="none" stroke="#000" stroke-width="1.70" stroke-linejoin="round"/>
<polyline points="1335.6,925.8 1338.4,924.5 1341.1,922.7 1343.7,920.5 1346.4,918.4 1349.1,916.5" fill="none" stroke="#000" stroke-width="1.70" stroke-linejoin="round"/>
<polyline points="1401.4,904.6 1404.4,904.6 1407.3,904.0 1410.1,902.7" fill="none" stroke="#000" stroke-width="1.70" stroke-linejoin="round"/>
<polyline points="1415.5,898.7 1418.1,896.6 1420.8,894.7 1423.6,893.4 1426.5,892.8" fill="none" stroke="#000" stroke-width="1.70" stroke-linejoin="round"/>
<polyline points="1444.6,892.5 1447.4,890.9 1450.0,888.9 1452.7,886.7 1455.4,884.7 1458.1,883.1 1460.9,882.1 1463.9,881.7" fill="none" stroke="#000" stroke-width="1.70" stroke-linejoin="round"/>
<polyline points="1473.1,882.6 1476.2,882.7" fill="none" stroke="#000" stroke-width="1.70" stroke-linejoin="round"/>
<polyline points="1321.4,930.8 1324.2,929.8" fill="none" stroke="#000" stroke-width="1.70" stroke-linejoin="round"/>
<polyline points="1335.8,926.9 1338.7,926.2" fill="none" stroke="#000" stroke-width="1.70" stroke-linejoin="round"/>
<polyline points="1347.3,923.8 1350.2,922.9 1353.0,921.8 1355.9,920.7 1358.7,919.6 1361.5,918.6 1364.4,917.6 1367.2,916.7" fill="none" stroke="#000" stroke-width="1.70" stroke-linejoin="round"/>
<polyline points="1401.7,906.3 1404.6,905.3 1407.4,904.5" fill="none" stroke="#000" stroke-width="1.70" stroke-linejoin="round"/>
<polyline points="1416.1,902.4 1419.0,901.7 1421.9,901.0 1424.8,900.2 1427.7,899.3" fill="none" stroke="#000" stroke-width="1.70" stroke-linejoin="round"/>
<polyline points="1433.4,897.3 1436.2,896.2 1439.0,895.1 1441.9,894.1 1444.7,893.1 1447.6,892.2" fill="none" stroke="#000" stroke-width="1.70" stroke-linejoin="round"/>
<polyline points="1330.3,930.0 1333.0,928.5" fill="none" stroke="#000" stroke-width="1.70" stroke-linejoin="round"/>
<polyline points="1342.4,930.1 1345.4,929.9 1348.1,928.2 1350.6,925.5 1353.2,922.9 1356.0,921.5 1359.0,921.5 1362.2,922.5 1365.4,923.3" fill="none" stroke="#000" stroke-width="1.70" stroke-linejoin="round"/>
<polyline points="1371.0,921.0 1373.6,918.3 1376.1,915.8 1378.9,914.5 1382.0,914.7 1385.2,915.7" fill="none" stroke="#000" stroke-width="1.70" stroke-linejoin="round"/>
<polyline points="1396.5,911.1 1399.1,908.7 1401.9,907.5 1405.0,907.9 1408.2,908.9 1411.3,909.5" fill="none" stroke="#000" stroke-width="1.70" stroke-linejoin="round"/>
<polyline points="1419.4,903.9 1422.0,901.6 1424.9,900.6 1428.0,901.0 1431.2,902.1 1434.3,902.6 1437.1,901.7 1439.8,899.5 1442.3,896.7 1445.0,894.5 1447.8,893.7 1451.0,894.2" fill="none" stroke="#000" stroke-width="1.70" stroke-linejoin="round"/>
<polyline points="1460.1,894.6 1462.7,892.3 1465.2,889.5 1467.9,887.4" fill="none" stroke="#000" stroke-width="1.70" stroke-linejoin="round"/>
<polyline points="1362.7,925.6 1365.7,925.1 1368.6,924.7" fill="none" stroke="#000" stroke-width="1.70" stroke-linejoin="round"/>
<polyline points="1400.3,915.7 1403.1,914.7 1406.0,913.5 1408.7,912.1 1411.5,910.8" fill="none" stroke="#000" stroke-width="1.70" stroke-linejoin="round"/>
<polyline points="1437.4,903.1 1440.2,901.9 1443.1,901.0" fill="none" stroke="#000" stroke-width="1.70" stroke-linejoin="round"/>
<polyline points="1366.5,929.9 1369.1,927.8 1371.9,925.9" fill="none" stroke="#000" stroke-width="1.70" stroke-linejoin="round"/>
<polyline points="1386.8,925.0 1389.8,925.1 1392.8,924.8 1395.7,923.9 1398.4,922.3 1401.1,920.2 1403.7,918.0" fill="none" stroke="#000" stroke-width="1.70" stroke-linejoin="round"/>
<polyline points="1427.2,914.1 1430.1,913.5 1432.9,912.3 1435.6,910.5 1438.3,908.3 1440.9,906.1 1443.6,904.2 1446.4,902.9" fill="none" stroke="#000" stroke-width="1.70" stroke-linejoin="round"/>
<polyline points="1470.2,900.6 1472.9,898.6 1475.5,896.4 1478.2,894.3 1480.9,892.6" fill="none" stroke="#000" stroke-width="1.70" stroke-linejoin="round"/>
<polyline points="1410.0,919.2 1412.7,917.6 1415.7,917.3 1418.8,918.0 1422.0,918.9 1425.0,919.0 1427.8,917.8" fill="none" stroke="#000" stroke-width="1.70" stroke-linejoin="round"/>
<polyline points="1433.0,912.8 1435.7,910.8 1438.6,909.9 1441.6,910.2 1444.8,911.1 1447.9,911.7" fill="none" stroke="#000" stroke-width="1.70" stroke-linejoin="round"/>
<polyline points="1407.7,923.6 1410.6,923.1 1413.6,922.7 1416.5,922.4 1419.5,922.0" fill="none" stroke="#000" stroke-width="1.70" stroke-linejoin="round"/>
<polyline points="1425.3,920.9 1428.2,920.0 1431.0,918.8 1433.8,917.5 1436.6,916.1 1439.4,914.7 1442.2,913.4 1445.0,912.2" fill="none" stroke="#000" stroke-width="1.70" stroke-linejoin="round"/>
<polyline points="1459.6,909.3 1462.5,908.9 1465.5,908.4" fill="none" stroke="#000" stroke-width="1.70" stroke-linejoin="round"/>
<polyline points="1414.4,927.4 1417.3,926.9 1420.3,926.4 1423.1,925.7 1426.0,924.5 1428.8,923.2 1431.6,922.0 1434.5,921.2 1437.4,920.6 1440.3,920.2 1443.2,919.5 1446.1,918.5" fill="none" stroke="#000" stroke-width="1.70" stroke-linejoin="round"/>
<polyline points="1477.5,908.1 1480.4,907.6 1483.4,907.2 1486.3,906.4" fill="none" stroke="#000" stroke-width="1.70" stroke-linejoin="round"/>
<polyline points="1265.8,849.0 1266.7,851.9 1266.9,854.9 1266.7,858.1" fill="none" stroke="#000" stroke-width="1.70" stroke-linejoin="round"/>
<polyline points="1244.1,690.7 1244.6,693.7 1244.9,696.7 1245.0,699.8 1245.1,702.9" fill="none" stroke="#000" stroke-width="1.70" stroke-linejoin="round"/>
<polyline points="1248.0,720.7 1248.9,723.5 1249.8,726.3" fill="none" stroke="#000" stroke-width="1.70" stroke-linejoin="round"/>
<polyline points="1252.3,747.4 1252.5,750.4 1253.0,753.4 1253.6,756.3" fill="none" stroke="#000" stroke-width="1.70" stroke-linejoin="round"/>
<polyline points="1256.2,764.8 1257.0,767.7 1257.8,770.6 1258.3,773.5 1258.7,776.5 1258.9,779.6" fill="none" stroke="#000" stroke-width="1.70" stroke-linejoin="round"/>
<polyline points="1268.0,839.0 1268.9,841.9 1269.8,844.7 1270.7,847.5 1271.4,850.4 1272.0,853.3 1272.5,856.3 1272.7,859.4 1272.9,862.4 1273.0,865.5 1273.1,868.6" fill="none" stroke="#000" stroke-width="1.70" stroke-linejoin="round"/>
<polyline points="1273.8,874.6 1274.4,877.5 1275.2,880.4 1276.1,883.2 1277.0,886.1 1277.9,888.9 1278.6,891.8 1279.2,894.7 1279.5,897.7 1279.7,900.8 1279.9,903.9 1280.0,906.9 1280.1,910.0 1280.5,913.0 1281.0,916.0 1281.6,918.9 1282.5,921.7 1283.4,924.6 1284.3,927.4 1285.1,930.3" fill="none" stroke="#000" stroke-width="1.70" stroke-linejoin="round"/>
<polyline points="1250.7,698.0 1250.0,701.4" fill="none" stroke="#000" stroke-width="1.70" stroke-linejoin="round"/>
<polyline points="1254.3,721.8 1255.7,724.5 1256.1,727.5 1255.7,730.8 1254.7,734.2 1253.8,737.6 1253.3,740.8 1253.7,743.8 1255.0,746.5" fill="none" stroke="#000" stroke-width="1.70" stroke-linejoin="round"/>
<polyline points="1260.5,754.2 1261.3,757.0 1261.2,760.2 1260.5,763.5 1259.4,767.0 1258.7,770.3 1258.7,773.4 1259.6,776.2" fill="none" stroke="#000" stroke-width="1.70" stroke-linejoin="round"/>
<polyline points="1264.4,805.9 1265.8,808.6 1267.8,811.1 1269.8,813.6 1271.3,816.2 1272.0,819.1 1271.7,822.3 1270.9,825.7 1269.9,829.1 1269.2,832.4 1269.4,835.5 1270.4,838.3 1272.2,840.8 1274.3,843.3" fill="none" stroke="#000" stroke-width="1.70" stroke-linejoin="round"/>
<polyline points="1275.2,867.9 1276.7,870.6 1278.7,873.1 1280.7,875.6 1282.1,878.3 1282.6,881.2 1282.2,884.5 1281.3,887.9 1280.3,891.3 1279.8,894.5 1280.1,897.6 1281.3,900.3 1283.1,902.9 1285.2,905.3 1286.9,907.9 1287.8,910.8 1287.8,913.9 1287.0,917.2 1286.0,920.7 1285.2,924.0 1285.1,927.1 1286.0,930.0" fill="none" stroke="#000" stroke-width="1.70" stroke-linejoin="round"/>
<polyline points="1249.3,679.8 1250.5,682.5 1251.6,685.3 1252.6,688.1 1253.2,691.0 1253.6,694.1 1253.6,697.2 1253.5,700.3 1253.3,703.5 1253.3,706.6 1253.6,709.6 1254.3,712.5 1255.2,715.3 1256.3,718.1 1257.5,720.9 1258.5,723.7 1259.3,726.5 1259.8,729.5 1259.9,732.6 1259.9,735.7" fill="none" stroke="#000" stroke-width="1.70" stroke-linejoin="round"/>
<polyline points="1262.1,753.7 1263.3,756.4 1264.4,759.2 1265.3,762.0 1266.0,765.0 1266.2,768.0 1266.2,771.1 1266.1,774.3 1266.0,777.4 1266.0,780.5 1266.3,783.5 1267.0,786.4 1268.0,789.2" fill="none" stroke="#000" stroke-width="1.70" stroke-linejoin="round"/>
<polyline points="1278.1,835.9 1278.7,838.9 1278.9,841.9 1278.9,845.0 1278.7,848.2 1278.6,851.3" fill="none" stroke="#000" stroke-width="1.70" stroke-linejoin="round"/>
<polyline points="1279.8,860.3 1280.8,863.1 1281.9,865.9 1283.1,868.7 1284.1,871.5 1284.8,874.4" fill="none" stroke="#000" stroke-width="1.70" stroke-linejoin="round"/>
<polyline points="1285.2,880.4 1285.1,883.6 1285.0,886.7" fill="none" stroke="#000" stroke-width="1.70" stroke-linejoin="round"/>
<polyline points="1285.2,892.9 1285.7,895.8 1286.6,898.7 1287.7,901.5 1288.9,904.2 1290.0,907.0 1290.8,909.9 1291.4,912.8 1291.6,915.9 1291.5,919.0 1291.4,922.1 1291.3,925.3 1291.4,928.4 1291.8,931.3" fill="none" stroke="#000" stroke-width="1.70" stroke-linejoin="round"/>
<polyline points="1252.1,672.7 1252.0,675.9 1252.3,678.9 1253.0,681.8 1254.2,684.5" fill="none" stroke="#000" stroke-width="1.70" stroke-linejoin="round"/>
<polyline points="1257.1,693.0 1257.3,696.0 1257.2,699.2 1257.0,702.4 1257.0,705.5" fill="none" stroke="#000" stroke-width="1.70" stroke-linejoin="round"/>
<polyline points="1260.6,716.8 1261.6,719.6 1262.2,722.6 1262.3,725.6" fill="none" stroke="#000" stroke-width="1.70" stroke-linejoin="round"/>
<polyline points="1261.9,732.0 1262.0,735.1 1262.5,738.0 1263.5,740.8 1264.7,743.6 1265.9,746.3 1266.8,749.2 1267.2,752.1 1267.2,755.2" fill="none" stroke="#000" stroke-width="1.70" stroke-linejoin="round"/>
<polyline points="1268.7,770.3 1270.0,773.1" fill="none" stroke="#000" stroke-width="1.70" stroke-linejoin="round"/>
<polyline points="1281.4,834.9 1282.0,837.9" fill="none" stroke="#000" stroke-width="1.70" stroke-linejoin="round"/>
<polyline points="1281.8,850.4 1282.4,853.3 1283.3,856.1" fill="none" stroke="#000" stroke-width="1.70" stroke-linejoin="round"/>
<polyline points="1285.7,861.6 1286.6,864.5 1287.0,867.4 1287.1,870.5 1286.9,873.7 1286.7,876.9 1286.9,879.9 1287.5,882.9 1288.5,885.7 1289.8,888.4 1290.9,891.2 1291.7,894.0 1292.0,897.0 1292.0,900.2 1291.8,903.3 1291.7,906.5 1292.0,909.5 1292.7,912.4 1293.8,915.2" fill="none" stroke="#000" stroke-width="1.70" stroke-linejoin="round"/>
<polyline points="1296.1,920.7 1296.8,923.6 1297.0,926.6 1296.9,929.8" fill="none" stroke="#000" stroke-width="1.70" stroke-linejoin="round"/>
<polyline points="1256.6,668.2 1257.7,671.0 1258.5,673.9 1258.9,676.9 1259.0,680.0 1258.7,683.2 1258.3,686.4 1258.0,689.6 1257.8,692.8 1258.1,695.8 1258.7,698.7 1259.7,701.5 1261.0,704.2 1262.4,706.9 1263.8,709.6 1264.9,712.4 1265.7,715.3 1266.0,718.3" fill="none" stroke="#000" stroke-width="1.70" stroke-linejoin="round"/>
<polyline points="1264.9,734.2 1265.2,737.2 1265.8,740.1 1266.9,742.9 1268.2,745.6 1269.6,748.3 1271.0,751.0 1272.1,753.8 1272.8,756.7 1273.1,759.7 1273.1,762.8 1272.8,766.0 1272.4,769.2 1272.1,772.4 1272.0,775.6 1272.3,778.6" fill="none" stroke="#000" stroke-width="1.70" stroke-linejoin="round"/>
<polyline points="1276.8,789.7 1278.1,792.4" fill="none" stroke="#000" stroke-width="1.70" stroke-linejoin="round"/>
<polyline points="1287.0,839.4 1287.3,842.5 1287.2,845.6 1286.9,848.8 1286.5,852.1 1286.2,855.3 1286.2,858.4 1286.5,861.4 1287.3,864.2 1288.4,867.0 1289.8,869.7 1291.2,872.4 1292.5,875.1 1293.5,877.9 1294.1,880.8 1294.4,883.9 1294.2,887.0 1293.9,890.2 1293.5,893.5 1293.2,896.7 1293.3,899.8 1293.7,902.8 1294.5,905.6 1295.6,908.4" fill="none" stroke="#000" stroke-width="1.70" stroke-linejoin="round"/>
<polyline points="1260.2,667.1 1260.9,670.0 1261.7,672.9 1262.5,675.8" fill="none" stroke="#000" stroke-width="1.70" stroke-linejoin="round"/>
<polyline points="1264.6,684.5 1265.0,687.5 1265.3,690.5" fill="none" stroke="#000" stroke-width="1.70" stroke-linejoin="round"/>
<polyline points="1268.0,711.4 1268.8,714.3 1269.7,717.2 1270.5,720.0 1271.2,722.9 1271.7,725.9" fill="none" stroke="#000" stroke-width="1.70" stroke-linejoin="round"/>
<polyline points="1272.4,731.9 1272.7,734.9" fill="none" stroke="#000" stroke-width="1.70" stroke-linejoin="round"/>
<polyline points="1273.1,741.0 1273.4,744.0 1273.9,747.0 1274.5,749.9 1275.2,752.8 1276.0,755.7 1276.8,758.5 1277.6,761.4 1278.3,764.3 1278.8,767.3 1279.2,770.2 1279.5,773.3 1279.7,776.3" fill="none" stroke="#000" stroke-width="1.70" stroke-linejoin="round"/>
<polyline points="1290.3,838.4 1291.1,841.3 1291.9,844.2 1292.5,847.1 1293.1,850.0 1293.5,853.0" fill="none" stroke="#000" stroke-width="1.70" stroke-linejoin="round"/>
<polyline points="1293.9,859.1 1294.1,862.2" fill="none" stroke="#000" stroke-width="1.70" stroke-linejoin="round"/>
<polyline points="1295.2,871.2 1295.9,874.1" fill="none" stroke="#000" stroke-width="1.70" stroke-linejoin="round"/>
<polyline points="1298.3,882.7 1299.0,885.6 1299.7,888.5 1300.2,891.4 1300.6,894.4 1300.8,897.5" fill="none" stroke="#000" stroke-width="1.70" stroke-linejoin="round"/>
<polyline points="1301.2,903.6 1301.5,906.6 1301.8,909.6 1302.4,912.6 1303.0,915.5 1303.8,918.4 1304.6,921.2 1305.4,924.1 1306.2,927.0 1306.8,929.9" fill="none" stroke="#000" stroke-width="1.70" stroke-linejoin="round"/>
<polyline points="1264.8,672.0 1264.9,675.0 1265.3,678.0 1266.0,680.9 1266.9,683.8" fill="none" stroke="#000" stroke-width="1.70" stroke-linejoin="round"/>
<polyline points="1272.2,703.9 1272.1,707.1 1272.0,710.2 1272.0,713.3 1272.1,716.4 1272.4,719.4 1273.1,722.3 1273.9,725.2 1275.0,728.0" fill="none" stroke="#000" stroke-width="1.70" stroke-linejoin="round"/>
<polyline points="1278.8,739.3 1279.2,742.2 1279.4,745.3" fill="none" stroke="#000" stroke-width="1.70" stroke-linejoin="round"/>
<polyline points="1279.2,754.7 1279.3,757.8 1279.6,760.8 1280.1,763.8 1281.0,766.6 1282.0,769.4 1283.1,772.2 1284.2,775.0 1285.2,777.8 1285.9,780.7 1286.4,783.6 1286.6,786.7 1286.6,789.8" fill="none" stroke="#000" stroke-width="1.70" stroke-linejoin="round"/>
<polyline points="1286.7,802.2 1287.2,805.2 1288.0,808.0 1289.0,810.8 1290.1,813.6" fill="none" stroke="#000" stroke-width="1.70" stroke-linejoin="round"/>
<polyline points="1293.7,834.3 1293.6,837.4 1293.6,840.5 1293.8,843.6 1294.3,846.6 1295.1,849.4 1296.0,852.3 1297.1,855.0 1298.2,857.8 1299.3,860.6 1300.1,863.5 1300.7,866.4 1301.0,869.4 1301.0,872.5 1301.0,875.6 1300.9,878.8" fill="none" stroke="#000" stroke-width="1.70" stroke-linejoin="round"/>
<polyline points="1301.4,887.9 1302.1,890.8 1303.0,893.7" fill="none" stroke="#000" stroke-width="1.70" stroke-linejoin="round"/>
<polyline points="1306.3,902.0 1307.2,904.9 1307.8,907.8 1308.1,910.8 1308.3,913.9" fill="none" stroke="#000" stroke-width="1.70" stroke-linejoin="round"/>
<polyline points="1308.1,920.1 1308.0,923.3 1308.2,926.3 1308.5,929.3" fill="none" stroke="#000" stroke-width="1.70" stroke-linejoin="round"/>
<polyline points="1269.1,664.4 1269.1,667.5" fill="none" stroke="#000" stroke-width="1.70" stroke-linejoin="round"/>
<polyline points="1269.5,676.8 1270.3,679.6 1271.4,682.4 1272.5,685.2 1273.3,688.0 1273.8,691.0 1273.9,694.1 1273.8,697.2 1273.7,700.4 1274.0,703.4 1274.7,706.3 1275.7,709.1 1276.9,711.9 1277.8,714.7 1278.4,717.6 1278.6,720.6 1278.6,723.8 1278.5,726.9 1278.6,730.0 1279.2,732.9 1280.1,735.8 1281.2,738.5 1282.3,741.3 1283.0,744.2 1283.4,747.2 1283.4,750.3 1283.3,753.5 1283.3,756.6 1283.7,759.6 1284.5,762.4 1285.6,765.2 1286.7,768.0 1287.6,770.8 1288.1,773.8 1288.2,776.9" fill="none" stroke="#000" stroke-width="1.70" stroke-linejoin="round"/>
<polyline points="1297.6,839.3 1297.9,842.3 1298.7,845.2 1299.7,848.0 1300.9,850.8 1301.8,853.6 1302.3,856.6 1302.5,859.6 1302.4,862.8 1302.3,865.9" fill="none" stroke="#000" stroke-width="1.70" stroke-linejoin="round"/>
<polyline points="1306.2,880.3 1306.9,883.2" fill="none" stroke="#000" stroke-width="1.70" stroke-linejoin="round"/>
<polyline points="1307.1,892.4 1307.2,895.5 1307.6,898.5 1308.5,901.4 1309.6,904.1 1310.7,906.9 1311.5,909.8" fill="none" stroke="#000" stroke-width="1.70" stroke-linejoin="round"/>
<polyline points="1311.9,922.1 1312.2,925.1 1312.9,928.0 1313.9,930.8" fill="none" stroke="#000" stroke-width="1.70" stroke-linejoin="round"/>
<polyline points="1274.5,665.9 1274.7,669.0 1274.6,672.1 1274.4,675.3 1274.2,678.4 1274.2,681.6 1274.5,684.6 1275.1,687.5 1276.1,690.3 1277.3,693.1 1278.5,695.8 1279.6,698.6 1280.5,701.4 1281.1,704.3 1281.3,707.4 1281.2,710.5 1281.0,713.7 1280.8,716.9 1280.8,720.0 1281.1,723.0" fill="none" stroke="#000" stroke-width="1.70" stroke-linejoin="round"/>
<polyline points="1283.8,731.5 1285.1,734.2 1286.2,737.0 1287.1,739.8 1287.7,742.8 1287.9,745.8 1287.9,748.9 1287.7,752.1 1287.5,755.3 1287.5,758.4 1287.7,761.4 1288.3,764.4 1289.2,767.2 1290.4,770.0 1291.6,772.7 1292.8,775.5" fill="none" stroke="#000" stroke-width="1.70" stroke-linejoin="round"/>
<polyline points="1300.7,835.3 1300.9,838.3 1301.5,841.3 1302.4,844.1" fill="none" stroke="#000" stroke-width="1.70" stroke-linejoin="round"/>
<polyline points="1304.7,849.6 1305.9,852.3 1306.9,855.2 1307.5,858.1 1307.8,861.1" fill="none" stroke="#000" stroke-width="1.70" stroke-linejoin="round"/>
<polyline points="1307.7,867.4 1307.5,870.6 1307.4,873.7" fill="none" stroke="#000" stroke-width="1.70" stroke-linejoin="round"/>
<polyline points="1308.1,879.7 1309.0,882.5 1310.1,885.3 1311.3,888.0" fill="none" stroke="#000" stroke-width="1.70" stroke-linejoin="round"/>
<polyline points="1314.5,899.5 1314.5,902.6 1314.3,905.8" fill="none" stroke="#000" stroke-width="1.70" stroke-linejoin="round"/>
<polyline points="1314.2,915.2 1314.7,918.1 1315.5,921.0 1316.6,923.8" fill="none" stroke="#000" stroke-width="1.70" stroke-linejoin="round"/>
<polyline points="1276.7,662.1 1277.5,665.0" fill="none" stroke="#000" stroke-width="1.70" stroke-linejoin="round"/>
<polyline points="1279.4,670.6 1280.4,673.4 1281.1,676.3 1281.7,679.2" fill="none" stroke="#000" stroke-width="1.70" stroke-linejoin="round"/>
<polyline points="1282.4,688.4 1282.5,691.5 1282.6,694.6 1282.8,697.6 1283.2,700.6 1283.7,703.5 1284.5,706.4 1285.4,709.2 1286.4,712.1 1287.3,714.9 1288.2,717.7 1288.8,720.6 1289.3,723.6 1289.6,726.6 1289.7,729.7 1289.8,732.8 1289.8,735.9 1290.0,739.0 1290.3,742.0 1290.8,744.9 1291.5,747.8 1292.4,750.7 1293.3,753.5 1294.3,756.3 1295.2,759.2 1295.9,762.0 1296.5,765.0 1296.8,768.0 1297.0,771.1 1297.1,774.2" fill="none" stroke="#000" stroke-width="1.70" stroke-linejoin="round"/>
<polyline points="1310.0,844.9 1310.7,847.8 1311.2,850.7 1311.5,853.8" fill="none" stroke="#000" stroke-width="1.70" stroke-linejoin="round"/>
<polyline points="1311.9,866.1 1312.2,869.1 1312.7,872.1 1313.4,875.0 1314.2,877.8 1315.2,880.6 1316.1,883.5 1317.0,886.3 1317.8,889.2" fill="none" stroke="#000" stroke-width="1.70" stroke-linejoin="round"/>
<polyline points="1318.9,898.2 1319.0,901.3 1319.0,904.4" fill="none" stroke="#000" stroke-width="1.70" stroke-linejoin="round"/>
<polyline points="1319.3,910.5 1319.8,913.5 1320.4,916.4 1321.2,919.3 1322.1,922.1 1323.1,924.9" fill="none" stroke="#000" stroke-width="1.70" stroke-linejoin="round"/>
<polyline points="1282.5,663.5 1283.3,666.3 1283.4,669.4 1283.2,672.6 1282.9,675.8 1283.0,678.9 1283.6,681.8 1284.6,684.6" fill="none" stroke="#000" stroke-width="1.70" stroke-linejoin="round"/>
<polyline points="1287.8,692.9 1288.0,696.0 1287.7,699.2 1287.5,702.4 1287.5,705.5" fill="none" stroke="#000" stroke-width="1.70" stroke-linejoin="round"/>
<polyline points="1291.8,716.6 1292.4,719.6 1292.5,722.6 1292.2,725.8 1292.0,729.0 1292.1,732.1 1292.8,735.0 1293.9,737.8 1295.3,740.5 1296.4,743.2 1297.0,746.2" fill="none" stroke="#000" stroke-width="1.70" stroke-linejoin="round"/>
<polyline points="1296.7,752.5 1296.5,755.7 1296.7,758.7 1297.4,761.6" fill="none" stroke="#000" stroke-width="1.70" stroke-linejoin="round"/>
<polyline points="1301.5,772.8 1301.5,775.9 1301.2,779.1 1301.0,782.3 1301.2,785.3 1302.0,788.2 1303.2,790.9" fill="none" stroke="#000" stroke-width="1.70" stroke-linejoin="round"/>
<polyline points="1306.1,799.4 1306.0,802.5 1305.7,805.7 1305.5,808.9 1305.8,811.9 1306.7,814.8 1307.9,817.5 1309.2,820.2 1310.2,823.0" fill="none" stroke="#000" stroke-width="1.70" stroke-linejoin="round"/>
<polyline points="1315.1,852.6 1315.0,855.8 1314.7,859.0 1314.6,862.1 1315.0,865.1 1315.9,868.0 1317.2,870.7 1318.5,873.4 1319.4,876.3 1319.7,879.3 1319.5,882.4 1319.2,885.6 1319.2,888.8 1319.6,891.7 1320.6,894.6 1321.9,897.3 1323.1,900.0 1323.9,902.9" fill="none" stroke="#000" stroke-width="1.70" stroke-linejoin="round"/>
<polyline points="1324.0,909.1 1323.7,912.3 1323.7,915.4 1324.2,918.3 1325.2,921.1 1326.5,923.9 1327.7,926.6" fill="none" stroke="#000" stroke-width="1.70" stroke-linejoin="round"/>
<polyline points="1285.5,662.6 1285.6,665.6 1285.9,668.6 1286.2,671.6 1286.8,674.6 1287.4,677.5 1288.2,680.4 1289.0,683.2" fill="none" stroke="#000" stroke-width="1.70" stroke-linejoin="round"/>
<polyline points="1290.5,689.0 1291.0,692.0" fill="none" stroke="#000" stroke-width="1.70" stroke-linejoin="round"/>
<polyline points="1292.0,704.1 1292.4,707.1 1292.8,710.1 1293.5,713.0 1294.2,715.9 1295.1,718.7 1295.9,721.6 1296.6,724.5 1297.1,727.5 1297.5,730.4 1297.8,733.5 1298.0,736.5 1298.2,739.6 1298.5,742.6 1298.9,745.6 1299.5,748.5 1300.3,751.4 1301.1,754.3 1301.9,757.1 1302.6,760.0 1303.2,762.9 1303.7,765.9 1304.0,768.9 1304.2,772.0 1304.4,775.0 1304.7,778.1" fill="none" stroke="#000" stroke-width="1.70" stroke-linejoin="round"/>
<polyline points="1306.3,786.9 1307.1,789.8 1307.9,792.6 1308.7,795.5" fill="none" stroke="#000" stroke-width="1.70" stroke-linejoin="round"/>
<polyline points="1309.8,801.4 1310.1,804.4 1310.4,807.4 1310.6,810.5" fill="none" stroke="#000" stroke-width="1.70" stroke-linejoin="round"/>
<polyline points="1311.2,816.5 1311.7,819.5 1312.4,822.4 1313.1,825.3 1314.0,828.1 1314.7,831.0" fill="none" stroke="#000" stroke-width="1.70" stroke-linejoin="round"/>
<polyline points="1316.7,845.9 1317.0,849.0 1317.3,852.0 1317.8,855.0 1318.4,857.9 1319.2,860.8 1320.0,863.6" fill="none" stroke="#000" stroke-width="1.70" stroke-linejoin="round"/>
<polyline points="1321.5,869.4 1322.0,872.3 1322.4,875.3 1322.7,878.3" fill="none" stroke="#000" stroke-width="1.70" stroke-linejoin="round"/>
<polyline points="1323.4,887.5 1323.9,890.4" fill="none" stroke="#000" stroke-width="1.70" stroke-linejoin="round"/>
<polyline points="1325.2,896.3 1326.0,899.1 1326.8,902.0 1327.6,904.9 1328.1,907.8 1328.6,910.8" fill="none" stroke="#000" stroke-width="1.70" stroke-linejoin="round"/>
<polyline points="1329.1,916.9 1329.3,919.9 1329.6,922.9 1330.0,925.9" fill="none" stroke="#000" stroke-width="1.70" stroke-linejoin="round"/>
<polyline points="1289.4,664.5 1290.4,667.3 1291.0,670.2 1291.1,673.3 1291.0,676.4 1291.4,679.4 1292.2,682.3" fill="none" stroke="#000" stroke-width="1.70" stroke-linejoin="round"/>
<polyline points="1294.1,687.9 1294.4,691.0 1294.3,694.1 1294.4,697.2 1295.0,700.1 1296.1,702.9 1297.1,705.7 1297.6,708.6 1297.7,711.7 1297.6,714.9" fill="none" stroke="#000" stroke-width="1.70" stroke-linejoin="round"/>
<polyline points="1303.7,744.1 1304.2,747.1" fill="none" stroke="#000" stroke-width="1.70" stroke-linejoin="round"/>
<polyline points="1307.6,767.8 1307.5,771.0 1307.6,774.0 1308.3,777.0 1309.3,779.8 1310.3,782.6 1310.8,785.5 1310.9,788.6 1310.8,791.7 1311.2,794.7 1312.0,797.6 1313.1,800.4 1313.9,803.2 1314.2,806.3 1314.1,809.4 1314.3,812.5 1314.9,815.4 1315.9,818.2 1316.9,821.0 1317.4,823.9 1317.5,827.0 1317.5,830.2" fill="none" stroke="#000" stroke-width="1.70" stroke-linejoin="round"/>
<polyline points="1320.8,847.8 1320.9,850.9 1321.5,853.8 1322.5,856.6 1323.5,859.4 1324.0,862.4 1324.1,865.5 1324.1,868.6 1324.4,871.6 1325.3,874.5 1326.4,877.2 1327.1,880.1 1327.4,883.1" fill="none" stroke="#000" stroke-width="1.70" stroke-linejoin="round"/>
<polyline points="1327.5,889.3 1328.1,892.3 1329.1,895.1 1330.1,897.9 1330.7,900.8 1330.7,903.9" fill="none" stroke="#000" stroke-width="1.70" stroke-linejoin="round"/>
<polyline points="1333.0,915.7 1333.8,918.5" fill="none" stroke="#000" stroke-width="1.70" stroke-linejoin="round"/>
<polyline points="1294.4,666.1 1295.9,668.7 1297.0,671.5 1297.3,674.5 1297.0,677.7 1296.5,681.0 1296.5,684.1 1297.4,686.9 1298.8,689.6 1300.3,692.3 1301.1,695.1 1301.1,698.2 1300.6,701.5" fill="none" stroke="#000" stroke-width="1.70" stroke-linejoin="round"/>
<polyline points="1300.6,707.7 1301.8,710.5 1303.3,713.1 1304.5,715.9 1305.1,718.8 1304.8,722.0 1304.3,725.3 1304.2,728.4 1304.8,731.3 1306.2,734.0 1307.7,736.7" fill="none" stroke="#000" stroke-width="1.70" stroke-linejoin="round"/>
<polyline points="1310.7,757.6 1312.0,760.2 1312.8,763.1 1312.7,766.3 1312.2,769.5 1311.9,772.7 1312.4,775.7 1313.6,778.4" fill="none" stroke="#000" stroke-width="1.70" stroke-linejoin="round"/>
<polyline points="1316.7,786.8 1316.4,790.0 1315.9,793.3 1315.9,796.4 1316.6,799.3 1318.0,802.0 1319.5,804.6 1320.4,807.5 1320.5,810.6 1320.0,813.8 1319.7,817.0" fill="none" stroke="#000" stroke-width="1.70" stroke-linejoin="round"/>
<polyline points="1324.4,831.1 1324.2,834.3" fill="none" stroke="#000" stroke-width="1.70" stroke-linejoin="round"/>
<polyline points="1323.5,840.8 1324.1,843.7 1325.4,846.4 1326.9,849.0 1328.0,851.8 1328.3,854.9 1327.9,858.1 1327.5,861.3 1327.5,864.4 1328.4,867.3 1329.9,869.9" fill="none" stroke="#000" stroke-width="1.70" stroke-linejoin="round"/>
<polyline points="1331.6,881.9 1331.3,885.1" fill="none" stroke="#000" stroke-width="1.70" stroke-linejoin="round"/>
<polyline points="1335.6,896.2 1336.1,899.2 1335.8,902.4 1335.3,905.6 1335.2,908.8 1335.9,911.7 1337.3,914.4 1338.8,917.0 1339.7,919.8 1339.9,922.9 1339.5,926.1 1339.1,929.4" fill="none" stroke="#000" stroke-width="1.70" stroke-linejoin="round"/>
<polyline points="1299.4,677.0 1301.0,679.6 1302.3,682.3" fill="none" stroke="#000" stroke-width="1.70" stroke-linejoin="round"/>
<polyline points="1302.5,694.7 1304.0,697.3 1305.3,700.1 1305.5,703.1 1305.0,706.4 1304.7,709.6 1305.5,712.5 1307.1,715.1 1308.4,717.8 1308.6,720.8 1308.0,724.1 1307.8,727.3 1308.5,730.2 1310.1,732.8 1311.4,735.5 1311.6,738.6 1311.1,741.9 1310.8,745.1 1311.6,747.9 1313.1,750.6" fill="none" stroke="#000" stroke-width="1.70" stroke-linejoin="round"/>
<polyline points="1314.6,765.7 1316.2,768.3 1317.5,771.0 1317.8,774.1 1317.3,777.3 1316.9,780.5 1317.6,783.4 1319.2,786.1" fill="none" stroke="#000" stroke-width="1.70" stroke-linejoin="round"/>
<polyline points="1320.3,795.1 1320.0,798.3 1320.7,801.2 1322.2,803.8 1323.6,806.5 1323.9,809.5 1323.4,812.8 1323.0,816.0 1323.7,818.9 1325.2,821.6 1326.6,824.3 1327.0,827.3 1326.5,830.5 1326.1,833.7 1326.7,836.7" fill="none" stroke="#000" stroke-width="1.70" stroke-linejoin="round"/>
<polyline points="1329.5,848.3 1329.2,851.5 1329.8,854.4 1331.3,857.1 1332.7,859.7" fill="none" stroke="#000" stroke-width="1.70" stroke-linejoin="round"/>
<polyline points="1332.2,869.2 1332.8,872.2 1334.3,874.8" fill="none" stroke="#000" stroke-width="1.70" stroke-linejoin="round"/>
<polyline points="1335.3,887.0 1335.9,889.9 1337.3,892.6" fill="none" stroke="#000" stroke-width="1.70" stroke-linejoin="round"/>
<polyline points="1340.4,910.3 1341.8,913.0 1342.3,915.9 1341.8,919.2 1341.4,922.4 1341.9,925.4 1343.4,928.0 1344.9,930.7" fill="none" stroke="#000" stroke-width="1.70" stroke-linejoin="round"/>
<polyline points="1301.7,654.5 1302.5,657.4" fill="none" stroke="#000" stroke-width="1.70" stroke-linejoin="round"/>
<polyline points="1303.3,663.3 1303.5,666.4 1303.6,669.5 1303.6,672.6" fill="none" stroke="#000" stroke-width="1.70" stroke-linejoin="round"/>
<polyline points="1304.4,681.7 1305.0,684.6" fill="none" stroke="#000" stroke-width="1.70" stroke-linejoin="round"/>
<polyline points="1307.6,693.1 1308.6,696.0" fill="none" stroke="#000" stroke-width="1.70" stroke-linejoin="round"/>
<polyline points="1310.6,704.7 1310.9,707.7 1311.1,710.8 1311.1,713.8 1311.2,716.9" fill="none" stroke="#000" stroke-width="1.70" stroke-linejoin="round"/>
<polyline points="1312.6,729.0 1313.4,731.8 1314.3,734.7" fill="none" stroke="#000" stroke-width="1.70" stroke-linejoin="round"/>
<polyline points="1316.2,740.3 1317.1,743.2 1317.7,746.1 1318.2,749.0 1318.5,752.1 1318.6,755.1 1318.7,758.2 1318.8,761.3 1318.9,764.4 1319.2,767.4 1319.6,770.4 1320.3,773.3 1321.1,776.2" fill="none" stroke="#000" stroke-width="1.70" stroke-linejoin="round"/>
<polyline points="1324.7,787.5 1325.4,790.4 1325.8,793.4 1326.1,796.4 1326.2,799.5 1326.3,802.6 1326.3,805.7 1326.5,808.7 1326.8,811.8 1327.3,814.7 1327.9,817.6 1328.8,820.5 1329.7,823.3 1330.7,826.1 1331.6,829.0 1332.4,831.8 1333.0,834.8 1333.4,837.7 1333.7,840.8 1333.8,843.8 1333.8,846.9" fill="none" stroke="#000" stroke-width="1.70" stroke-linejoin="round"/>
<polyline points="1334.1,853.1 1334.4,856.1 1334.9,859.1 1335.6,862.0 1336.4,864.8" fill="none" stroke="#000" stroke-width="1.70" stroke-linejoin="round"/>
<polyline points="1341.3,885.1 1341.4,888.2 1341.4,891.3 1341.5,894.4 1341.7,897.5 1342.0,900.5 1342.5,903.4 1343.2,906.3 1344.1,909.2 1345.1,912.0 1346.0,914.8 1346.9,917.6 1347.7,920.5 1348.2,923.5 1348.6,926.4 1348.8,929.5" fill="none" stroke="#000" stroke-width="1.70" stroke-linejoin="round"/>
<polyline points="1307.6,677.6 1308.4,680.5 1309.2,683.3 1310.1,686.1 1311.0,689.0 1311.8,691.9 1312.4,694.8 1312.8,697.8 1313.0,700.8 1313.1,703.9 1313.2,707.0" fill="none" stroke="#000" stroke-width="1.70" stroke-linejoin="round"/>
<polyline points="1317.5,727.5 1318.3,730.3 1319.0,733.2 1319.4,736.2 1319.7,739.2" fill="none" stroke="#000" stroke-width="1.70" stroke-linejoin="round"/>
<polyline points="1322.2,760.2 1323.1,763.1" fill="none" stroke="#000" stroke-width="1.70" stroke-linejoin="round"/>
<polyline points="1324.9,768.8 1325.6,771.7 1326.1,774.6" fill="none" stroke="#000" stroke-width="1.70" stroke-linejoin="round"/>
<polyline points="1328.0,795.8 1328.8,798.7 1329.6,801.6 1330.6,804.4 1331.4,807.2" fill="none" stroke="#000" stroke-width="1.70" stroke-linejoin="round"/>
<polyline points="1333.1,816.1 1333.3,819.1" fill="none" stroke="#000" stroke-width="1.70" stroke-linejoin="round"/>
<polyline points="1336.2,840.0 1337.1,842.9 1337.9,845.7 1338.7,848.6 1339.3,851.5 1339.7,854.5 1340.0,857.5 1340.1,860.6 1340.2,863.7 1340.4,866.7 1340.7,869.8 1341.2,872.7" fill="none" stroke="#000" stroke-width="1.70" stroke-linejoin="round"/>
<polyline points="1346.9,902.1 1347.1,905.1 1347.3,908.2 1347.8,911.2 1348.4,914.1 1349.2,916.9 1350.1,919.8 1351.0,922.6 1351.8,925.5 1352.5,928.4 1353.0,931.3" fill="none" stroke="#000" stroke-width="1.70" stroke-linejoin="round"/>
<polyline points="1307.4,652.8 1310.0,655.1 1312.8,657.3" fill="none" stroke="#000" stroke-width="1.70" stroke-linejoin="round"/>
<polyline points="1310.2,670.6 1312.3,673.0 1315.3,675.2 1316.9,677.9 1316.0,681.2 1314.0,685.0 1313.2,688.3 1314.8,690.9 1317.8,693.1 1319.9,695.6 1319.6,698.8 1317.7,702.5 1316.4,706.0 1317.3,708.8" fill="none" stroke="#000" stroke-width="1.70" stroke-linejoin="round"/>
<polyline points="1323.1,716.4 1321.4,720.0 1319.7,723.7 1320.0,726.7 1322.5,729.0" fill="none" stroke="#000" stroke-width="1.70" stroke-linejoin="round"/>
<polyline points="1326.4,734.1 1325.2,737.6 1323.2,741.3 1322.9,744.5 1324.9,747.0 1327.9,749.2 1329.6,751.8 1328.8,755.1" fill="none" stroke="#000" stroke-width="1.70" stroke-linejoin="round"/>
<polyline points="1332.6,769.5 1332.4,772.7 1330.5,776.4 1329.1,779.9 1330.0,782.8 1332.8,785.0" fill="none" stroke="#000" stroke-width="1.70" stroke-linejoin="round"/>
<polyline points="1334.3,793.9 1332.5,797.6 1332.7,800.6" fill="none" stroke="#000" stroke-width="1.70" stroke-linejoin="round"/>
<polyline points="1339.2,808.0 1338.0,811.5" fill="none" stroke="#000" stroke-width="1.70" stroke-linejoin="round"/>
<polyline points="1348.3,892.3 1350.1,894.9" fill="none" stroke="#000" stroke-width="1.70" stroke-linejoin="round"/>
<polyline points="1316.0,671.9 1317.5,674.6 1319.4,677.1 1320.8,679.8 1321.3,682.7 1320.8,686.0 1320.0,689.4" fill="none" stroke="#000" stroke-width="1.70" stroke-linejoin="round"/>
<polyline points="1319.9,695.6 1321.2,698.3 1323.1,700.9 1324.7,703.5 1325.5,706.4 1325.3,709.5 1324.5,712.9 1323.8,716.2 1323.9,719.3 1325.0,722.1" fill="none" stroke="#000" stroke-width="1.70" stroke-linejoin="round"/>
<polyline points="1328.0,742.9 1328.8,745.8 1330.4,748.4 1332.2,751.0 1333.6,753.7 1333.9,756.7 1333.4,759.9 1332.6,763.3 1332.2,766.6 1332.7,769.5 1334.1,772.2 1335.9,774.7 1337.5,777.4 1338.1,780.3" fill="none" stroke="#000" stroke-width="1.70" stroke-linejoin="round"/>
<polyline points="1336.4,790.1 1336.6,793.2 1337.8,796.0" fill="none" stroke="#000" stroke-width="1.70" stroke-linejoin="round"/>
<polyline points="1359.8,919.9 1361.6,922.5 1363.0,925.2 1363.5,928.1 1363.0,931.4" fill="none" stroke="#000" stroke-width="1.70" stroke-linejoin="round"/>
<polyline points="1319.1,655.4 1320.1,658.2 1321.3,660.9 1322.4,663.7 1322.9,666.7 1322.9,669.8 1322.6,673.0 1322.6,676.1" fill="none" stroke="#000" stroke-width="1.70" stroke-linejoin="round"/>
<polyline points="1325.5,684.6 1326.5,687.4 1326.9,690.4 1326.9,693.5" fill="none" stroke="#000" stroke-width="1.70" stroke-linejoin="round"/>
<polyline points="1326.7,699.8 1327.3,702.7 1328.3,705.5 1329.6,708.2 1330.6,711.0 1331.0,714.0 1330.9,717.2 1330.6,720.3 1330.7,723.4" fill="none" stroke="#000" stroke-width="1.70" stroke-linejoin="round"/>
<polyline points="1334.9,740.8 1334.6,744.0 1334.8,747.1 1335.5,750.0 1336.6,752.7 1337.8,755.5 1338.7,758.3 1339.0,761.4 1338.9,764.5 1338.7,767.7 1338.8,770.7 1339.6,773.6 1340.8,776.4 1342.0,779.1 1342.8,782.0" fill="none" stroke="#000" stroke-width="1.70" stroke-linejoin="round"/>
<polyline points="1346.9,811.9 1346.7,815.0 1347.0,818.0 1347.8,820.9 1349.0,823.6 1350.2,826.4 1350.9,829.3 1351.1,832.4 1350.9,835.5 1350.7,838.7 1351.0,841.7 1351.9,844.5 1353.2,847.3 1354.3,850.0 1355.0,852.9 1355.1,856.0 1354.9,859.2 1354.8,862.3" fill="none" stroke="#000" stroke-width="1.70" stroke-linejoin="round"/>
<polyline points="1357.3,870.9 1358.4,873.7 1359.0,876.6 1359.1,879.7" fill="none" stroke="#000" stroke-width="1.70" stroke-linejoin="round"/>
<polyline points="1363.1,900.3 1363.1,903.4 1362.9,906.6" fill="none" stroke="#000" stroke-width="1.70" stroke-linejoin="round"/>
<polyline points="1328.5,671.2 1327.5,674.6 1326.7,678.0 1327.2,680.9 1328.9,683.5 1330.9,686.0 1332.1,688.8 1331.8,692.0 1330.8,695.4 1330.2,698.7 1330.9,701.6 1332.8,704.1 1334.7,706.7 1335.6,709.5 1335.1,712.7 1334.1,716.2 1333.6,719.4 1334.6,722.2 1336.6,724.7 1338.5,727.3 1339.1,730.2 1338.4,733.5 1337.4,737.0 1337.2,740.1" fill="none" stroke="#000" stroke-width="1.70" stroke-linejoin="round"/>
<polyline points="1342.5,751.0 1341.6,754.3 1340.7,757.7 1340.8,760.8 1342.3,763.5 1344.3,765.9 1345.8,768.6" fill="none" stroke="#000" stroke-width="1.70" stroke-linejoin="round"/>
<polyline points="1351.4,816.7 1351.0,819.9 1351.9,822.8" fill="none" stroke="#000" stroke-width="1.70" stroke-linejoin="round"/>
<polyline points="1356.4,830.7 1355.8,834.0 1354.7,837.5 1354.5,840.7 1355.7,843.4 1357.7,845.9 1359.4,848.5 1359.8,851.5 1359.0,854.8 1358.0,858.2 1358.1,861.3" fill="none" stroke="#000" stroke-width="1.70" stroke-linejoin="round"/>
<polyline points="1330.0,670.7 1331.2,673.5 1332.6,676.2 1333.9,678.9 1335.1,681.6 1335.9,684.5" fill="none" stroke="#000" stroke-width="1.70" stroke-linejoin="round"/>
<polyline points="1335.3,700.3 1335.4,703.3 1336.1,706.2 1337.1,709.0 1338.5,711.7 1339.9,714.4 1341.1,717.1" fill="none" stroke="#000" stroke-width="1.70" stroke-linejoin="round"/>
<polyline points="1342.4,723.0 1342.4,726.1 1342.1,729.3 1341.7,732.5 1341.5,735.7 1341.6,738.8" fill="none" stroke="#000" stroke-width="1.70" stroke-linejoin="round"/>
<polyline points="1344.4,747.3 1345.8,750.0 1347.1,752.7 1348.1,755.5 1348.6,758.4" fill="none" stroke="#000" stroke-width="1.70" stroke-linejoin="round"/>
<polyline points="1354.0,806.6 1353.9,809.7 1354.2,812.7 1355.0,815.6 1356.2,818.3 1357.6,821.0 1359.0,823.7" fill="none" stroke="#000" stroke-width="1.70" stroke-linejoin="round"/>
<polyline points="1360.8,829.4 1361.1,832.4" fill="none" stroke="#000" stroke-width="1.70" stroke-linejoin="round"/>
<polyline points="1366.9,864.9 1367.3,867.9 1367.3,871.0 1367.0,874.2 1366.6,877.4 1366.3,880.6 1366.5,883.7" fill="none" stroke="#000" stroke-width="1.70" stroke-linejoin="round"/>
<polyline points="1334.4,653.9 1334.1,657.0" fill="none" stroke="#000" stroke-width="1.70" stroke-linejoin="round"/>
<polyline points="1336.4,675.0 1337.8,677.7 1339.0,680.4 1340.1,683.2 1340.7,686.2 1341.0,689.2 1340.9,692.3 1340.6,695.5 1340.3,698.7" fill="none" stroke="#000" stroke-width="1.70" stroke-linejoin="round"/>
<polyline points="1341.9,710.7 1343.2,713.4 1344.5,716.1 1345.7,718.8 1346.7,721.7" fill="none" stroke="#000" stroke-width="1.70" stroke-linejoin="round"/>
<polyline points="1346.9,743.4 1347.6,746.3 1348.6,749.1 1349.9,751.8 1351.2,754.5" fill="none" stroke="#000" stroke-width="1.70" stroke-linejoin="round"/>
<polyline points="1353.5,772.5 1353.3,775.7 1353.2,778.8 1353.5,781.8 1354.3,784.7 1355.4,787.5 1356.7,790.2 1358.0,792.9 1359.2,795.7 1360.0,798.5 1360.5,801.5 1360.5,804.6 1360.3,807.8" fill="none" stroke="#000" stroke-width="1.70" stroke-linejoin="round"/>
<polyline points="1359.8,814.1 1359.8,817.3 1360.2,820.2 1361.0,823.1 1362.1,825.9 1363.4,828.6 1364.7,831.3 1365.9,834.1 1366.6,836.9 1367.0,839.9 1367.0,843.0 1366.8,846.2 1366.5,849.4 1366.3,852.6 1366.3,855.7 1366.8,858.7" fill="none" stroke="#000" stroke-width="1.70" stroke-linejoin="round"/>
<polyline points="1379.9,913.8 1380.1,916.8 1380.0,920.0" fill="none" stroke="#000" stroke-width="1.70" stroke-linejoin="round"/>
<polyline points="1339.3,667.9 1339.1,671.1 1339.3,674.1 1339.9,677.1 1341.0,679.8 1342.4,682.5" fill="none" stroke="#000" stroke-width="1.70" stroke-linejoin="round"/>
<polyline points="1353.1,750.8 1353.1,753.9" fill="none" stroke="#000" stroke-width="1.70" stroke-linejoin="round"/>
<polyline points="1360.9,773.3 1361.4,776.3 1361.5,779.4 1361.2,782.6" fill="none" stroke="#000" stroke-width="1.70" stroke-linejoin="round"/>
<polyline points="1363.0,803.8 1364.5,806.5 1366.0,809.1 1367.2,811.9 1368.1,814.7 1368.5,817.7 1368.5,820.8 1368.1,824.0 1367.6,827.3 1367.2,830.5 1367.0,833.7" fill="none" stroke="#000" stroke-width="1.70" stroke-linejoin="round"/>
<polyline points="1371.9,847.8 1373.3,850.5" fill="none" stroke="#000" stroke-width="1.70" stroke-linejoin="round"/>
<polyline points="1375.2,856.1 1375.5,859.1" fill="none" stroke="#000" stroke-width="1.70" stroke-linejoin="round"/>
<polyline points="1374.5,868.8 1374.1,872.0 1374.0,875.1 1374.4,878.1 1375.2,881.0 1376.4,883.8 1377.8,886.4 1379.3,889.1 1380.7,891.8" fill="none" stroke="#000" stroke-width="1.70" stroke-linejoin="round"/>
<polyline points="1341.1,645.6 1342.8,648.2" fill="none" stroke="#000" stroke-width="1.70" stroke-linejoin="round"/>
<polyline points="1345.0,653.7 1344.5,657.0 1343.8,660.3 1343.8,663.4 1345.0,666.2 1346.8,668.7 1348.1,671.4 1348.4,674.5 1347.7,677.8 1347.1,681.1 1347.4,684.1" fill="none" stroke="#000" stroke-width="1.70" stroke-linejoin="round"/>
<polyline points="1358.3,730.6 1358.6,733.6 1358.0,736.9 1357.3,740.2" fill="none" stroke="#000" stroke-width="1.70" stroke-linejoin="round"/>
<polyline points="1361.2,757.7 1360.7,761.0 1361.3,763.9 1362.9,766.5 1364.6,769.1 1365.4,772.0 1365.1,775.2" fill="none" stroke="#000" stroke-width="1.70" stroke-linejoin="round"/>
<polyline points="1364.1,781.7 1365.1,784.5 1366.8,787.1 1368.4,789.7 1368.9,792.7" fill="none" stroke="#000" stroke-width="1.70" stroke-linejoin="round"/>
<polyline points="1371.4,823.1 1372.9,825.7 1374.7,828.3 1375.6,831.1 1375.4,834.3 1374.7,837.6 1374.3,840.8 1375.1,843.7 1376.8,846.3 1378.5,848.9 1379.1,851.8" fill="none" stroke="#000" stroke-width="1.70" stroke-linejoin="round"/>
<polyline points="1386.9,905.5 1388.6,908.0 1389.3,910.9 1388.9,914.2 1388.2,917.5 1388.0,920.7 1389.1,923.5" fill="none" stroke="#000" stroke-width="1.70" stroke-linejoin="round"/>
<polyline points="1347.3,640.6 1348.1,643.4 1348.6,646.4 1348.6,649.5" fill="none" stroke="#000" stroke-width="1.70" stroke-linejoin="round"/>
<polyline points="1348.9,655.7 1349.6,658.5 1350.7,661.3 1351.6,664.2 1352.2,667.1 1352.3,670.2 1352.3,673.3 1352.4,676.4" fill="none" stroke="#000" stroke-width="1.70" stroke-linejoin="round"/>
<polyline points="1359.6,714.6 1359.7,717.7 1360.1,720.7 1361.0,723.5 1362.0,726.3 1362.9,729.2 1363.3,732.2 1363.3,735.3" fill="none" stroke="#000" stroke-width="1.70" stroke-linejoin="round"/>
<polyline points="1366.4,749.9 1366.9,752.8 1367.0,755.9 1367.0,759.0 1367.2,762.1 1367.9,765.0 1368.9,767.8 1369.9,770.6 1370.5,773.5 1370.7,776.6 1370.7,779.7 1370.8,782.8 1371.3,785.7 1372.3,788.5" fill="none" stroke="#000" stroke-width="1.70" stroke-linejoin="round"/>
<polyline points="1374.4,797.2 1374.4,800.4 1374.4,803.5 1374.8,806.4 1375.7,809.3 1376.8,812.1 1377.6,814.9 1378.0,817.9 1378.1,821.0 1378.1,824.1 1378.4,827.1 1379.1,830.0 1380.2,832.8 1381.1,835.6 1381.7,838.6 1381.8,841.7 1381.7,844.8 1381.9,847.8 1382.6,850.7 1383.6,853.5" fill="none" stroke="#000" stroke-width="1.70" stroke-linejoin="round"/>
<polyline points="1385.4,865.4 1385.5,868.5 1386.1,871.5 1387.0,874.3 1388.1,877.1" fill="none" stroke="#000" stroke-width="1.70" stroke-linejoin="round"/>
<polyline points="1392.4,900.7 1392.8,903.6 1392.8,906.8 1392.8,909.9 1393.1,912.9 1393.9,915.8" fill="none" stroke="#000" stroke-width="1.70" stroke-linejoin="round"/>
<polyline points="1354.1,651.0 1355.5,653.6 1356.7,656.4 1357.6,659.2 1357.9,662.2 1357.9,665.4 1357.5,668.6 1357.1,671.8 1357.0,675.0 1357.2,678.0 1358.0,680.9 1359.1,683.6" fill="none" stroke="#000" stroke-width="1.70" stroke-linejoin="round"/>
<polyline points="1361.9,689.0 1363.0,691.8 1363.7,694.7 1363.9,697.8" fill="none" stroke="#000" stroke-width="1.70" stroke-linejoin="round"/>
<polyline points="1362.9,707.4 1362.9,710.5" fill="none" stroke="#000" stroke-width="1.70" stroke-linejoin="round"/>
<polyline points="1365.6,719.0 1367.0,721.7" fill="none" stroke="#000" stroke-width="1.70" stroke-linejoin="round"/>
<polyline points="1369.7,730.2 1369.7,733.3 1369.4,736.5 1369.0,739.8 1368.8,742.9 1368.9,746.0" fill="none" stroke="#000" stroke-width="1.70" stroke-linejoin="round"/>
<polyline points="1374.7,778.5 1375.0,781.5 1375.9,784.3 1377.1,787.1 1378.5,789.8 1379.9,792.5 1380.9,795.3 1381.5,798.2 1381.5,801.3 1381.3,804.5 1380.9,807.7 1380.6,810.9 1380.7,814.0 1381.2,816.9 1382.2,819.7 1383.6,822.4" fill="none" stroke="#000" stroke-width="1.70" stroke-linejoin="round"/>
<polyline points="1387.4,836.8 1387.0,840.1 1386.6,843.3" fill="none" stroke="#000" stroke-width="1.70" stroke-linejoin="round"/>
<polyline points="1386.7,849.5 1387.5,852.4 1388.6,855.1 1390.0,857.8" fill="none" stroke="#000" stroke-width="1.70" stroke-linejoin="round"/>
<polyline points="1392.5,863.3 1393.2,866.2 1393.4,869.2 1393.1,872.4 1392.7,875.7 1392.4,878.9 1392.4,882.0 1392.9,885.0 1393.8,887.8 1395.1,890.5 1396.5,893.2" fill="none" stroke="#000" stroke-width="1.70" stroke-linejoin="round"/>
<polyline points="1399.2,901.7 1399.2,904.8 1398.9,908.0 1398.5,911.2 1398.3,914.4 1398.4,917.5 1399.1,920.4 1400.2,923.2" fill="none" stroke="#000" stroke-width="1.70" stroke-linejoin="round"/>
<polyline points="1402.9,928.6 1404.1,931.3" fill="none" stroke="#000" stroke-width="1.70" stroke-linejoin="round"/>
<polyline points="1355.9,641.1 1356.6,644.0 1357.4,646.8" fill="none" stroke="#000" stroke-width="1.70" stroke-linejoin="round"/>
<polyline points="1359.3,655.6 1359.7,658.6 1360.0,661.6 1360.2,664.6 1360.5,667.7 1360.7,670.7 1361.1,673.7 1361.6,676.7 1362.3,679.6 1363.0,682.5 1363.7,685.4 1364.5,688.2 1365.3,691.1" fill="none" stroke="#000" stroke-width="1.70" stroke-linejoin="round"/>
<polyline points="1367.3,706.0 1367.6,709.1" fill="none" stroke="#000" stroke-width="1.70" stroke-linejoin="round"/>
<polyline points="1368.8,718.1 1369.4,721.0 1370.1,723.9 1370.9,726.7" fill="none" stroke="#000" stroke-width="1.70" stroke-linejoin="round"/>
<polyline points="1373.0,735.4 1373.5,738.4" fill="none" stroke="#000" stroke-width="1.70" stroke-linejoin="round"/>
<polyline points="1374.5,747.4 1374.7,750.5 1375.0,753.5 1375.4,756.5 1375.9,759.4 1376.5,762.4 1377.2,765.3" fill="none" stroke="#000" stroke-width="1.70" stroke-linejoin="round"/>
<polyline points="1378.7,771.0 1379.5,773.9 1380.1,776.8 1380.6,779.8 1381.1,782.8" fill="none" stroke="#000" stroke-width="1.70" stroke-linejoin="round"/>
<polyline points="1382.1,794.9 1382.5,797.9 1383.0,800.8 1383.6,803.8 1384.3,806.7 1385.1,809.5 1385.8,812.4" fill="none" stroke="#000" stroke-width="1.70" stroke-linejoin="round"/>
<polyline points="1387.2,818.2 1387.8,821.2 1388.2,824.1 1388.5,827.2 1388.7,830.2 1389.0,833.2 1389.3,836.3 1389.6,839.3 1390.1,842.2" fill="none" stroke="#000" stroke-width="1.70" stroke-linejoin="round"/>
<polyline points="1391.4,848.1 1392.2,850.9 1392.9,853.8 1393.7,856.7 1394.3,859.6 1394.9,862.6 1395.3,865.5 1395.6,868.6 1395.9,871.6" fill="none" stroke="#000" stroke-width="1.70" stroke-linejoin="round"/>
<polyline points="1398.5,889.5 1399.3,892.3 1400.1,895.2 1400.8,898.1 1401.5,901.0" fill="none" stroke="#000" stroke-width="1.70" stroke-linejoin="round"/>
<polyline points="1402.4,906.9 1402.8,909.9 1403.0,913.0 1403.3,916.0 1403.5,919.0 1403.9,922.0 1404.3,925.0 1404.9,928.0 1405.6,930.9" fill="none" stroke="#000" stroke-width="1.70" stroke-linejoin="round"/>
<polyline points="1366.4,659.6 1366.9,662.6" fill="none" stroke="#000" stroke-width="1.70" stroke-linejoin="round"/>
<polyline points="1366.2,678.4 1368.2,680.9" fill="none" stroke="#000" stroke-width="1.70" stroke-linejoin="round"/>
<polyline points="1370.1,692.7 1369.1,696.2" fill="none" stroke="#000" stroke-width="1.70" stroke-linejoin="round"/>
<polyline points="1369.7,702.2 1371.4,704.8 1373.5,707.3 1375.0,709.9 1375.5,712.9 1375.0,716.2 1373.9,719.6 1373.2,722.9 1373.4,726.0 1374.7,728.7 1376.7,731.2 1378.7,733.7 1379.8,736.5 1379.7,739.6 1378.8,743.0 1377.8,746.4" fill="none" stroke="#000" stroke-width="1.70" stroke-linejoin="round"/>
<polyline points="1382.1,757.6 1383.6,760.2 1384.2,763.1 1383.7,766.4 1382.7,769.8 1381.9,773.2 1382.1,776.2 1383.3,779.0 1385.3,781.5 1387.2,784.0 1388.4,786.7 1388.4,789.8 1387.6,793.2 1386.6,796.6 1386.2,799.9 1386.9,802.8 1388.6,805.4 1390.6,807.8 1392.3,810.5 1392.9,813.4 1392.4,816.6" fill="none" stroke="#000" stroke-width="1.70" stroke-linejoin="round"/>
<polyline points="1390.6,823.4 1390.7,826.5" fill="none" stroke="#000" stroke-width="1.70" stroke-linejoin="round"/>
<polyline points="1395.8,834.3 1397.0,837.0 1397.1,840.1 1396.3,843.5 1395.3,846.9" fill="none" stroke="#000" stroke-width="1.70" stroke-linejoin="round"/>
<polyline points="1397.1,855.7 1399.2,858.1 1400.9,860.7 1401.5,863.6" fill="none" stroke="#000" stroke-width="1.70" stroke-linejoin="round"/>
<polyline points="1399.3,876.8 1400.5,879.5 1402.4,882.0 1404.4,884.5 1405.7,887.3 1405.8,890.3 1405.0,893.7 1404.0,897.1 1403.5,900.4 1404.1,903.3 1405.7,905.9 1407.7,908.4 1409.5,911.0" fill="none" stroke="#000" stroke-width="1.70" stroke-linejoin="round"/>
<polyline points="1408.0,927.0 1409.1,929.8" fill="none" stroke="#000" stroke-width="1.70" stroke-linejoin="round"/>
<polyline points="1364.3,635.4 1364.5,638.4 1364.7,641.5 1364.9,644.5 1365.2,647.6" fill="none" stroke="#000" stroke-width="1.70" stroke-linejoin="round"/>
<polyline points="1369.3,665.0 1370.0,667.9 1370.6,670.8 1371.0,673.8 1371.3,676.8 1371.5,679.9 1371.6,682.9" fill="none" stroke="#000" stroke-width="1.70" stroke-linejoin="round"/>
<polyline points="1372.2,689.0 1372.8,691.9 1373.4,694.8 1374.2,697.7 1375.0,700.6 1375.9,703.4 1376.6,706.3 1377.2,709.3 1377.7,712.2 1378.0,715.2 1378.2,718.3 1378.4,721.3 1378.6,724.4 1378.9,727.4 1379.4,730.4 1380.0,733.3 1380.7,736.2 1381.5,739.1 1382.3,741.9 1383.1,744.8 1383.8,747.7 1384.3,750.6 1384.7,753.6 1384.9,756.7 1385.1,759.7 1385.3,762.8 1385.6,765.8 1386.0,768.8 1386.5,771.8" fill="none" stroke="#000" stroke-width="1.70" stroke-linejoin="round"/>
<polyline points="1389.6,783.3 1390.4,786.1 1390.9,789.1 1391.4,792.1 1391.7,795.1 1391.9,798.1 1392.0,801.2 1392.3,804.2 1392.6,807.2 1393.1,810.2" fill="none" stroke="#000" stroke-width="1.70" stroke-linejoin="round"/>
<polyline points="1399.3,845.7 1399.7,848.6 1400.3,851.6 1401.0,854.5" fill="none" stroke="#000" stroke-width="1.70" stroke-linejoin="round"/>
<polyline points="1402.6,860.2 1403.4,863.1 1404.1,866.0 1404.7,868.9 1405.1,871.9 1405.3,874.9" fill="none" stroke="#000" stroke-width="1.70" stroke-linejoin="round"/>
<polyline points="1406.3,887.1 1406.8,890.0 1407.5,892.9 1408.3,895.8" fill="none" stroke="#000" stroke-width="1.70" stroke-linejoin="round"/>
<polyline points="1409.9,901.5 1410.7,904.4" fill="none" stroke="#000" stroke-width="1.70" stroke-linejoin="round"/>
<polyline points="1367.5,637.5 1367.5,640.6 1367.8,643.7 1368.4,646.6" fill="none" stroke="#000" stroke-width="1.70" stroke-linejoin="round"/>
<polyline points="1371.6,655.0 1372.4,657.8 1372.9,660.8 1373.0,663.9" fill="none" stroke="#000" stroke-width="1.70" stroke-linejoin="round"/>
<polyline points="1377.4,687.4 1378.0,690.3 1378.3,693.4 1378.3,696.5 1378.1,699.6 1378.1,702.7 1378.4,705.8 1379.1,708.7 1380.1,711.5 1381.2,714.2 1382.3,717.0 1383.1,719.9 1383.5,722.9 1383.6,726.0 1383.5,729.1 1383.4,732.2 1383.6,735.3 1384.1,738.3 1384.9,741.1 1386.0,743.9 1387.2,746.7 1388.1,749.5 1388.7,752.4 1388.9,755.5 1388.9,758.6 1388.8,761.7" fill="none" stroke="#000" stroke-width="1.70" stroke-linejoin="round"/>
<polyline points="1392.0,776.3 1393.0,779.1 1393.8,782.0 1394.2,785.0 1394.2,788.1 1394.1,791.2 1394.1,794.4" fill="none" stroke="#000" stroke-width="1.70" stroke-linejoin="round"/>
<polyline points="1394.8,800.4 1395.7,803.2 1396.8,806.0 1397.9,808.7 1398.8,811.6 1399.4,814.5 1399.6,817.6 1399.5,820.7 1399.4,823.8 1399.4,826.9 1399.8,829.9 1400.6,832.8" fill="none" stroke="#000" stroke-width="1.70" stroke-linejoin="round"/>
<polyline points="1404.5,844.1 1404.8,847.1 1404.9,850.2 1404.7,853.3" fill="none" stroke="#000" stroke-width="1.70" stroke-linejoin="round"/>
<polyline points="1406.4,865.3 1407.5,868.0 1408.6,870.8 1409.5,873.7" fill="none" stroke="#000" stroke-width="1.70" stroke-linejoin="round"/>
<polyline points="1413.5,900.4 1414.5,903.3 1415.2,906.2 1415.5,909.2" fill="none" stroke="#000" stroke-width="1.70" stroke-linejoin="round"/>
<polyline points="1415.4,915.4 1415.3,918.6 1415.6,921.6 1416.2,924.5 1417.1,927.3" fill="none" stroke="#000" stroke-width="1.70" stroke-linejoin="round"/>
<polyline points="1371.1,633.3 1372.2,636.1 1373.5,638.8 1374.6,641.6 1375.6,644.4" fill="none" stroke="#000" stroke-width="1.70" stroke-linejoin="round"/>
<polyline points="1376.4,650.4 1376.4,653.5 1376.1,656.7 1376.0,659.8 1376.0,662.9 1376.4,665.9 1377.1,668.8 1378.2,671.6 1379.4,674.4 1380.6,677.1 1381.6,679.9" fill="none" stroke="#000" stroke-width="1.70" stroke-linejoin="round"/>
<polyline points="1382.6,688.9 1382.4,692.1 1382.2,695.3 1382.2,698.4 1382.5,701.4 1383.1,704.3" fill="none" stroke="#000" stroke-width="1.70" stroke-linejoin="round"/>
<polyline points="1387.6,715.4 1388.4,718.3" fill="none" stroke="#000" stroke-width="1.70" stroke-linejoin="round"/>
<polyline points="1388.7,727.5 1388.5,730.7 1388.4,733.8 1388.6,736.9 1389.2,739.8 1390.1,742.7 1391.3,745.4 1392.5,748.2 1393.6,750.9" fill="none" stroke="#000" stroke-width="1.70" stroke-linejoin="round"/>
<polyline points="1395.0,756.7 1395.1,759.8 1395.0,763.0 1394.7,766.1 1394.6,769.3 1394.7,772.4 1395.2,775.3 1396.1,778.2 1397.2,780.9 1398.4,783.7 1399.6,786.4" fill="none" stroke="#000" stroke-width="1.70" stroke-linejoin="round"/>
<polyline points="1401.3,795.3 1401.2,798.4 1401.0,801.6" fill="none" stroke="#000" stroke-width="1.70" stroke-linejoin="round"/>
<polyline points="1401.3,810.8 1402.1,813.7 1403.1,816.5" fill="none" stroke="#000" stroke-width="1.70" stroke-linejoin="round"/>
<polyline points="1407.5,833.8 1407.3,837.0 1407.1,840.2 1407.1,843.3" fill="none" stroke="#000" stroke-width="1.70" stroke-linejoin="round"/>
<polyline points="1408.1,849.2 1409.1,852.0 1410.3,854.7 1411.5,857.5 1412.6,860.3 1413.3,863.2 1413.7,866.2" fill="none" stroke="#000" stroke-width="1.70" stroke-linejoin="round"/>
<polyline points="1413.3,878.7 1413.5,881.8 1414.1,884.7 1415.0,887.5 1416.2,890.3 1417.5,893.0 1418.6,895.8" fill="none" stroke="#000" stroke-width="1.70" stroke-linejoin="round"/>
<polyline points="1421.0,923.0 1422.2,925.8" fill="none" stroke="#000" stroke-width="1.70" stroke-linejoin="round"/>
<polyline points="1379.6,633.8 1379.1,637.1 1377.9,640.6 1377.0,644.0 1377.1,647.1 1378.3,649.8 1380.3,652.3 1382.4,654.8 1383.8,657.5 1383.9,660.5 1383.1,663.9 1382.0,667.3 1381.3,670.7 1381.8,673.6 1383.3,676.3 1385.5,678.7 1387.4,681.3" fill="none" stroke="#000" stroke-width="1.70" stroke-linejoin="round"/>
<polyline points="1386.1,694.1 1385.7,697.3 1386.6,700.2 1388.4,702.7 1390.6,705.2 1392.2,707.8" fill="none" stroke="#000" stroke-width="1.70" stroke-linejoin="round"/>
<polyline points="1392.3,714.0 1391.1,717.4 1390.2,720.8 1390.3,723.9 1391.5,726.7 1393.6,729.2 1395.6,731.6 1397.0,734.3 1397.2,737.4 1396.3,740.8" fill="none" stroke="#000" stroke-width="1.70" stroke-linejoin="round"/>
<polyline points="1401.6,760.9 1401.4,764.1 1400.4,767.5 1399.3,771.0 1399.0,774.2 1399.8,777.0 1401.6,779.6 1403.8,782.0 1405.5,784.6 1406.0,787.6 1405.5,790.9 1404.4,794.3 1403.5,797.7 1403.5,800.8 1404.7,803.5 1406.8,806.0 1408.9,808.5 1410.2,811.2 1410.4,814.3 1409.6,817.6" fill="none" stroke="#000" stroke-width="1.70" stroke-linejoin="round"/>
<polyline points="1407.8,824.4 1408.2,827.4 1409.8,830.0 1411.9,832.5 1413.8,835.0" fill="none" stroke="#000" stroke-width="1.70" stroke-linejoin="round"/>
<polyline points="1412.5,847.8 1412.2,851.1 1413.0,853.9 1414.9,856.5 1417.0,858.9 1418.7,861.5 1419.3,864.5 1418.7,867.7 1417.6,871.2" fill="none" stroke="#000" stroke-width="1.70" stroke-linejoin="round"/>
<polyline points="1416.7,877.7 1418.0,880.4 1420.0,882.9 1422.1,885.4" fill="none" stroke="#000" stroke-width="1.70" stroke-linejoin="round"/>
<polyline points="1422.8,894.5 1421.6,898.0 1421.0,901.3 1421.4,904.2 1423.0,906.9 1425.1,909.3 1427.1,911.9 1428.0,914.7 1427.8,917.9 1426.8,921.3" fill="none" stroke="#000" stroke-width="1.70" stroke-linejoin="round"/>
<polyline points="1383.0,635.9 1382.0,639.3 1382.6,642.3 1384.7,644.7 1386.9,647.2 1387.9,650.0 1387.2,653.3" fill="none" stroke="#000" stroke-width="1.70" stroke-linejoin="round"/>
<polyline points="1386.7,662.8 1389.1,665.2 1390.9,667.7 1391.1,670.8 1389.9,674.3 1388.7,677.7 1389.1,680.7" fill="none" stroke="#000" stroke-width="1.70" stroke-linejoin="round"/>
<polyline points="1394.6,688.4 1394.0,691.7" fill="none" stroke="#000" stroke-width="1.70" stroke-linejoin="round"/>
<polyline points="1397.5,706.2 1397.8,709.2 1396.7,712.6 1395.5,716.1" fill="none" stroke="#000" stroke-width="1.70" stroke-linejoin="round"/>
<polyline points="1397.4,721.8 1399.8,724.1 1401.2,726.8 1400.8,730.1" fill="none" stroke="#000" stroke-width="1.70" stroke-linejoin="round"/>
<polyline points="1404.0,744.7 1404.6,747.6 1403.6,751.0 1402.2,754.5 1402.2,757.6" fill="none" stroke="#000" stroke-width="1.70" stroke-linejoin="round"/>
<polyline points="1406.2,762.6 1407.8,765.3 1407.6,768.4 1406.3,772.0 1405.3,775.4 1406.0,778.2 1408.2,780.7 1410.4,783.1 1411.3,786.0 1410.4,789.4 1409.0,792.9 1408.8,796.1 1410.2,798.8" fill="none" stroke="#000" stroke-width="1.70" stroke-linejoin="round"/>
<polyline points="1414.6,819.2 1416.9,821.6 1417.9,824.4 1417.2,827.7 1415.8,831.3 1415.4,834.5" fill="none" stroke="#000" stroke-width="1.70" stroke-linejoin="round"/>
<polyline points="1420.9,842.2 1421.1,845.2 1419.9,848.7 1418.8,852.2 1419.1,855.2" fill="none" stroke="#000" stroke-width="1.70" stroke-linejoin="round"/>
<polyline points="1422.6,869.6 1422.0,873.0 1423.1,875.7 1425.4,878.1 1427.4,880.6 1427.9,883.6" fill="none" stroke="#000" stroke-width="1.70" stroke-linejoin="round"/>
<polyline points="1425.6,893.6 1427.4,896.2 1429.8,898.6" fill="none" stroke="#000" stroke-width="1.70" stroke-linejoin="round"/>
<polyline points="1429.5,908.0 1428.7,911.4 1429.5,914.2 1431.8,916.6 1433.9,919.1 1434.6,922.0" fill="none" stroke="#000" stroke-width="1.70" stroke-linejoin="round"/>
<polyline points="1388.5,631.1 1389.0,634.1 1389.3,637.1 1389.4,640.2 1389.5,643.3" fill="none" stroke="#000" stroke-width="1.70" stroke-linejoin="round"/>
<polyline points="1393.6,660.7 1394.1,663.6 1394.4,666.7" fill="none" stroke="#000" stroke-width="1.70" stroke-linejoin="round"/>
<polyline points="1401.2,711.3 1402.1,714.1 1403.1,716.9 1403.8,719.8 1404.3,722.8" fill="none" stroke="#000" stroke-width="1.70" stroke-linejoin="round"/>
<polyline points="1404.6,728.9 1404.8,732.0 1405.0,735.0 1405.6,737.9 1406.3,740.8 1407.2,743.7 1408.1,746.5 1408.9,749.4 1409.4,752.3 1409.6,755.4" fill="none" stroke="#000" stroke-width="1.70" stroke-linejoin="round"/>
<polyline points="1409.8,761.5 1410.1,764.6" fill="none" stroke="#000" stroke-width="1.70" stroke-linejoin="round"/>
<polyline points="1414.5,781.9 1414.7,784.9 1414.8,788.0" fill="none" stroke="#000" stroke-width="1.70" stroke-linejoin="round"/>
<polyline points="1415.2,794.1 1415.7,797.1" fill="none" stroke="#000" stroke-width="1.70" stroke-linejoin="round"/>
<polyline points="1418.3,805.6 1419.1,808.5 1419.5,811.5 1419.8,814.5 1419.9,817.6 1420.0,820.7 1420.3,823.7 1420.8,826.6 1421.6,829.5" fill="none" stroke="#000" stroke-width="1.70" stroke-linejoin="round"/>
<polyline points="1424.1,838.1 1424.6,841.0 1424.9,844.1" fill="none" stroke="#000" stroke-width="1.70" stroke-linejoin="round"/>
<polyline points="1426.7,859.1 1427.6,861.9 1428.5,864.7 1429.2,867.6 1429.7,870.6" fill="none" stroke="#000" stroke-width="1.70" stroke-linejoin="round"/>
<polyline points="1430.4,882.8 1431.0,885.8 1431.8,888.6" fill="none" stroke="#000" stroke-width="1.70" stroke-linejoin="round"/>
<polyline points="1434.3,897.2 1434.8,900.2 1435.0,903.2 1435.1,906.3 1435.2,909.4 1435.5,912.4 1436.1,915.3 1436.9,918.2 1437.8,921.0" fill="none" stroke="#000" stroke-width="1.70" stroke-linejoin="round"/>
<polyline points="1394.2,635.6 1394.0,638.8" fill="none" stroke="#000" stroke-width="1.70" stroke-linejoin="round"/>
<polyline points="1394.4,648.0 1395.3,650.8" fill="none" stroke="#000" stroke-width="1.70" stroke-linejoin="round"/>
<polyline points="1397.7,656.3 1398.7,659.1" fill="none" stroke="#000" stroke-width="1.70" stroke-linejoin="round"/>
<polyline points="1403.4,688.8 1404.4,691.6 1405.0,694.5 1405.3,697.6" fill="none" stroke="#000" stroke-width="1.70" stroke-linejoin="round"/>
<polyline points="1406.7,715.8 1407.9,718.6 1409.1,721.3 1410.0,724.1 1410.6,727.1 1410.8,730.1 1410.6,733.3 1410.4,736.5 1410.4,739.6 1410.7,742.6 1411.4,745.5 1412.4,748.3" fill="none" stroke="#000" stroke-width="1.70" stroke-linejoin="round"/>
<polyline points="1416.1,765.8 1415.9,769.0 1415.9,772.1 1416.2,775.1 1417.0,778.0 1418.1,780.8 1419.3,783.5 1420.5,786.3" fill="none" stroke="#000" stroke-width="1.70" stroke-linejoin="round"/>
<polyline points="1421.7,792.1 1421.8,795.2 1421.6,798.4 1421.4,801.6 1421.4,804.7 1421.9,807.7" fill="none" stroke="#000" stroke-width="1.70" stroke-linejoin="round"/>
<polyline points="1426.1,818.8 1426.9,821.7 1427.2,824.7 1427.2,827.8 1427.0,831.0" fill="none" stroke="#000" stroke-width="1.70" stroke-linejoin="round"/>
<polyline points="1427.0,837.2 1427.5,840.2 1428.4,843.0 1429.5,845.8 1430.8,848.5 1431.8,851.3 1432.5,854.2" fill="none" stroke="#000" stroke-width="1.70" stroke-linejoin="round"/>
<polyline points="1432.5,863.5 1432.4,866.7 1432.5,869.7 1433.1,872.7 1434.1,875.5 1435.3,878.2 1436.5,881.0 1437.5,883.8 1438.1,886.7" fill="none" stroke="#000" stroke-width="1.70" stroke-linejoin="round"/>
<polyline points="1438.2,892.9 1438.0,896.1 1437.9,899.2 1438.1,902.3 1438.8,905.2 1439.8,908.0 1441.0,910.7 1442.2,913.5 1443.1,916.3" fill="none" stroke="#000" stroke-width="1.70" stroke-linejoin="round"/>
<polyline points="1398.3,634.4 1399.0,637.3 1399.4,640.3" fill="none" stroke="#000" stroke-width="1.70" stroke-linejoin="round"/>
<polyline points="1399.4,649.6 1399.3,652.7 1399.4,655.8 1399.6,658.9 1400.1,661.8 1400.9,664.7" fill="none" stroke="#000" stroke-width="1.70" stroke-linejoin="round"/>
<polyline points="1404.2,673.0 1405.2,675.8 1406.0,678.7 1406.6,681.6" fill="none" stroke="#000" stroke-width="1.70" stroke-linejoin="round"/>
<polyline points="1407.0,687.7 1406.9,690.9 1406.8,694.0 1406.7,697.1 1406.8,700.2 1407.2,703.2 1407.9,706.1 1408.8,709.0 1409.8,711.8 1411.0,714.5 1412.1,717.3 1413.0,720.1 1413.7,723.0" fill="none" stroke="#000" stroke-width="1.70" stroke-linejoin="round"/>
<polyline points="1414.1,738.4 1414.1,741.6 1414.4,744.6 1414.9,747.6 1415.6,750.4 1416.6,753.2 1417.7,756.0" fill="none" stroke="#000" stroke-width="1.70" stroke-linejoin="round"/>
<polyline points="1421.3,767.4 1421.7,770.4 1421.8,773.5" fill="none" stroke="#000" stroke-width="1.70" stroke-linejoin="round"/>
<polyline points="1421.6,785.9 1422.0,789.0 1422.6,791.9 1423.5,794.7 1424.5,797.5 1425.6,800.3" fill="none" stroke="#000" stroke-width="1.70" stroke-linejoin="round"/>
<polyline points="1428.5,808.8 1428.9,811.7" fill="none" stroke="#000" stroke-width="1.70" stroke-linejoin="round"/>
<polyline points="1429.0,821.0 1428.9,824.2 1428.9,827.3 1429.1,830.3 1429.6,833.3 1430.3,836.2 1431.3,839.0 1432.4,841.8 1433.5,844.5 1434.6,847.3 1435.5,850.2 1436.1,853.1 1436.4,856.1 1436.6,859.2 1436.5,862.3 1436.4,865.5 1436.3,868.6 1436.4,871.7 1436.7,874.7 1437.3,877.6 1438.2,880.5 1439.2,883.3 1440.3,886.0 1441.4,888.8" fill="none" stroke="#000" stroke-width="1.70" stroke-linejoin="round"/>
<polyline points="1443.9,903.6 1443.8,906.7 1443.7,909.9 1443.7,913.0 1443.9,916.1 1444.3,919.0" fill="none" stroke="#000" stroke-width="1.70" stroke-linejoin="round"/>
<polyline points="1400.0,630.7 1400.5,633.7 1401.1,636.6 1401.8,639.5 1402.6,642.4 1403.4,645.3 1404.1,648.2" fill="none" stroke="#000" stroke-width="1.70" stroke-linejoin="round"/>
<polyline points="1405.5,657.1 1405.8,660.1 1406.0,663.1" fill="none" stroke="#000" stroke-width="1.70" stroke-linejoin="round"/>
<polyline points="1406.6,669.2 1407.1,672.1 1407.7,675.1 1408.4,678.0 1409.2,680.8 1409.9,683.7 1410.7,686.6 1411.3,689.5" fill="none" stroke="#000" stroke-width="1.70" stroke-linejoin="round"/>
<polyline points="1414.9,716.4 1415.7,719.3 1416.5,722.2 1417.2,725.0 1417.9,728.0" fill="none" stroke="#000" stroke-width="1.70" stroke-linejoin="round"/>
<polyline points="1418.8,733.9 1419.1,736.9 1419.3,740.0 1419.5,743.0 1419.9,746.0 1420.3,749.0 1420.8,752.0" fill="none" stroke="#000" stroke-width="1.70" stroke-linejoin="round"/>
<polyline points="1422.3,757.7 1423.1,760.6 1423.8,763.5 1424.5,766.4 1425.0,769.3 1425.4,772.3 1425.7,775.4 1426.0,778.4 1426.2,781.4" fill="none" stroke="#000" stroke-width="1.70" stroke-linejoin="round"/>
<polyline points="1429.6,799.1 1430.4,801.9" fill="none" stroke="#000" stroke-width="1.70" stroke-linejoin="round"/>
<polyline points="1431.6,807.8 1432.1,810.8 1432.4,813.8 1432.6,816.8 1432.9,819.9 1433.1,822.9 1433.5,825.9 1434.0,828.8 1434.7,831.8 1435.4,834.6 1436.2,837.5 1437.0,840.4 1437.7,843.3 1438.2,846.2 1438.7,849.2 1439.0,852.2 1439.3,855.2 1439.5,858.3" fill="none" stroke="#000" stroke-width="1.70" stroke-linejoin="round"/>
<polyline points="1440.6,867.3 1441.3,870.2 1442.0,873.1 1442.8,876.0 1443.5,878.8 1444.2,881.7 1444.9,884.7 1445.3,887.6" fill="none" stroke="#000" stroke-width="1.70" stroke-linejoin="round"/>
<polyline points="1446.2,896.7 1446.4,899.7 1446.8,902.7 1447.2,905.7 1447.8,908.6 1448.5,911.5 1449.3,914.4 1450.1,917.3" fill="none" stroke="#000" stroke-width="1.70" stroke-linejoin="round"/>
<polyline points="1405.3,626.0 1405.4,629.1" fill="none" stroke="#000" stroke-width="1.70" stroke-linejoin="round"/>
<polyline points="1414.4,685.5 1414.9,688.4" fill="none" stroke="#000" stroke-width="1.70" stroke-linejoin="round"/>
<polyline points="1416.6,694.1 1417.5,697.0 1418.1,699.9" fill="none" stroke="#000" stroke-width="1.70" stroke-linejoin="round"/>
<polyline points="1418.5,706.0 1418.6,709.1" fill="none" stroke="#000" stroke-width="1.70" stroke-linejoin="round"/>
<polyline points="1419.5,715.0 1420.4,717.9 1421.3,720.7" fill="none" stroke="#000" stroke-width="1.70" stroke-linejoin="round"/>
<polyline points="1422.9,729.6 1422.9,732.6" fill="none" stroke="#000" stroke-width="1.70" stroke-linejoin="round"/>
<polyline points="1425.1,744.4 1426.1,747.3 1426.8,750.2 1427.1,753.1 1427.3,756.2" fill="none" stroke="#000" stroke-width="1.70" stroke-linejoin="round"/>
<polyline points="1429.0,768.1 1429.9,771.0" fill="none" stroke="#000" stroke-width="1.70" stroke-linejoin="round"/>
<polyline points="1431.3,776.8 1431.6,779.8" fill="none" stroke="#000" stroke-width="1.70" stroke-linejoin="round"/>
<polyline points="1431.8,786.0 1432.1,789.0 1432.8,791.9" fill="none" stroke="#000" stroke-width="1.70" stroke-linejoin="round"/>
<polyline points="1435.4,800.4 1435.8,803.4" fill="none" stroke="#000" stroke-width="1.70" stroke-linejoin="round"/>
<polyline points="1440.5,836.2 1440.8,839.2 1441.4,842.1" fill="none" stroke="#000" stroke-width="1.70" stroke-linejoin="round"/>
<polyline points="1443.2,847.8 1444.0,850.7 1444.5,853.6" fill="none" stroke="#000" stroke-width="1.70" stroke-linejoin="round"/>
<polyline points="1446.1,868.7 1447.0,871.5 1447.9,874.4 1448.6,877.3 1449.0,880.3 1449.1,883.3 1449.2,886.4 1449.5,889.5 1450.0,892.4 1450.8,895.3" fill="none" stroke="#000" stroke-width="1.70" stroke-linejoin="round"/>
<polyline points="1452.6,901.0 1453.2,903.9 1453.4,906.9 1453.5,910.0 1453.7,913.1 1454.0,916.1" fill="none" stroke="#000" stroke-width="1.70" stroke-linejoin="round"/>
<polyline points="1414.0,663.8 1414.1,666.9 1415.1,669.7 1416.6,672.3" fill="none" stroke="#000" stroke-width="1.70" stroke-linejoin="round"/>
<polyline points="1423.2,713.9 1422.9,717.1 1423.3,720.1 1424.6,722.8 1426.2,725.4 1427.8,728.1 1428.7,730.9 1428.8,734.0 1428.3,737.2 1427.6,740.6 1427.4,743.7 1428.0,746.7" fill="none" stroke="#000" stroke-width="1.70" stroke-linejoin="round"/>
<polyline points="1434.1,775.9 1435.8,778.5 1437.2,781.2 1437.8,784.1" fill="none" stroke="#000" stroke-width="1.70" stroke-linejoin="round"/>
<polyline points="1437.0,790.6 1436.4,793.9" fill="none" stroke="#000" stroke-width="1.70" stroke-linejoin="round"/>
<polyline points="1442.1,826.4 1443.7,829.0 1445.4,831.6" fill="none" stroke="#000" stroke-width="1.70" stroke-linejoin="round"/>
<polyline points="1451.6,879.5 1453.3,882.1 1454.8,884.7 1455.6,887.6 1455.7,890.7 1455.1,894.0 1454.5,897.3 1454.3,900.4 1455.0,903.3 1456.4,906.0 1458.1,908.6 1459.5,911.3 1460.2,914.2" fill="none" stroke="#000" stroke-width="1.70" stroke-linejoin="round"/>
<polyline points="1418.5,646.9 1418.9,649.9" fill="none" stroke="#000" stroke-width="1.70" stroke-linejoin="round"/>
<polyline points="1420.6,668.0 1421.3,670.9" fill="none" stroke="#000" stroke-width="1.70" stroke-linejoin="round"/>
<polyline points="1423.0,676.6 1423.8,679.5 1424.5,682.4 1425.1,685.3 1425.5,688.3 1425.8,691.3 1426.0,694.4 1426.1,697.4 1426.4,700.5" fill="none" stroke="#000" stroke-width="1.70" stroke-linejoin="round"/>
<polyline points="1428.7,712.2 1429.6,715.1" fill="none" stroke="#000" stroke-width="1.70" stroke-linejoin="round"/>
<polyline points="1438.8,765.2 1439.0,768.2 1439.2,771.2 1439.4,774.3" fill="none" stroke="#000" stroke-width="1.70" stroke-linejoin="round"/>
<polyline points="1442.7,792.0 1443.6,794.8 1444.3,797.7 1444.9,800.6 1445.4,803.6 1445.7,806.6 1445.9,809.7 1446.0,812.7 1446.3,815.8 1446.6,818.8 1447.0,821.8 1447.7,824.7 1448.5,827.5 1449.3,830.4 1450.1,833.3" fill="none" stroke="#000" stroke-width="1.70" stroke-linejoin="round"/>
<polyline points="1452.0,842.0 1452.3,845.0" fill="none" stroke="#000" stroke-width="1.70" stroke-linejoin="round"/>
<polyline points="1459.5,892.6 1459.8,895.6 1460.3,898.6" fill="none" stroke="#000" stroke-width="1.70" stroke-linejoin="round"/>
<polyline points="1421.0,639.9 1420.6,643.1 1420.5,646.2 1421.1,649.2 1422.1,652.0 1423.6,654.6 1425.3,657.2 1426.8,659.9 1428.0,662.6 1428.6,665.6 1428.6,668.7 1428.2,671.9 1427.6,675.2 1427.0,678.5 1426.8,681.7" fill="none" stroke="#000" stroke-width="1.70" stroke-linejoin="round"/>
<polyline points="1434.7,701.0 1435.0,704.1 1434.7,707.3" fill="none" stroke="#000" stroke-width="1.70" stroke-linejoin="round"/>
<polyline points="1436.6,728.5 1438.2,731.1" fill="none" stroke="#000" stroke-width="1.70" stroke-linejoin="round"/>
<polyline points="1441.2,742.6 1440.7,745.9 1440.1,749.2 1439.6,752.5" fill="none" stroke="#000" stroke-width="1.70" stroke-linejoin="round"/>
<polyline points="1442.2,764.1 1443.9,766.7 1445.5,769.3 1446.7,772.1 1447.4,775.0" fill="none" stroke="#000" stroke-width="1.70" stroke-linejoin="round"/>
<polyline points="1446.6,784.5 1446.0,787.8 1445.7,791.0 1445.9,794.1 1446.7,797.0 1447.9,799.7" fill="none" stroke="#000" stroke-width="1.70" stroke-linejoin="round"/>
<polyline points="1452.6,823.2 1452.1,826.4 1452.1,829.6 1452.6,832.5 1453.7,835.3 1455.2,837.9 1456.8,840.5 1458.4,843.2 1459.5,846.0 1460.1,848.9 1460.2,852.0 1459.8,855.2 1459.1,858.5 1458.6,861.8 1458.3,865.0 1458.6,868.0" fill="none" stroke="#000" stroke-width="1.70" stroke-linejoin="round"/>
<polyline points="1462.5,876.2 1464.1,878.8 1465.4,881.5 1466.3,884.3 1466.5,887.4 1466.3,890.6" fill="none" stroke="#000" stroke-width="1.70" stroke-linejoin="round"/>
<polyline points="1424.8,626.3 1424.3,629.6" fill="none" stroke="#000" stroke-width="1.70" stroke-linejoin="round"/>
<polyline points="1423.5,639.1 1424.4,642.0 1425.7,644.7 1427.3,647.3 1428.9,649.9 1430.2,652.6" fill="none" stroke="#000" stroke-width="1.70" stroke-linejoin="round"/>
<polyline points="1430.1,665.1 1429.5,668.4 1429.3,671.6 1429.7,674.6" fill="none" stroke="#000" stroke-width="1.70" stroke-linejoin="round"/>
<polyline points="1437.0,691.0 1437.0,694.1 1436.6,697.4" fill="none" stroke="#000" stroke-width="1.70" stroke-linejoin="round"/>
<polyline points="1443.0,726.5 1442.9,729.7 1442.4,732.9" fill="none" stroke="#000" stroke-width="1.70" stroke-linejoin="round"/>
<polyline points="1448.8,765.2 1448.3,768.5" fill="none" stroke="#000" stroke-width="1.70" stroke-linejoin="round"/>
<polyline points="1463.8,857.1 1465.4,859.7" fill="none" stroke="#000" stroke-width="1.70" stroke-linejoin="round"/>
<polyline points="1467.0,865.5 1466.9,868.6 1466.4,871.9 1465.8,875.2" fill="none" stroke="#000" stroke-width="1.70" stroke-linejoin="round"/>
<polyline points="1472.3,907.4 1471.6,910.7" fill="none" stroke="#000" stroke-width="1.70" stroke-linejoin="round"/>
<polyline points="1427.2,619.3 1427.3,622.4 1427.7,625.4 1428.4,628.3 1429.3,631.1 1430.3,633.9 1431.1,636.8 1431.8,639.7 1432.1,642.7 1432.2,645.8 1432.3,648.9 1432.4,652.0" fill="none" stroke="#000" stroke-width="1.70" stroke-linejoin="round"/>
<polyline points="1435.3,663.5 1436.2,666.4" fill="none" stroke="#000" stroke-width="1.70" stroke-linejoin="round"/>
<polyline points="1437.4,678.5 1437.5,681.5" fill="none" stroke="#000" stroke-width="1.70" stroke-linejoin="round"/>
<polyline points="1443.0,714.1 1443.6,717.0" fill="none" stroke="#000" stroke-width="1.70" stroke-linejoin="round"/>
<polyline points="1451.5,755.1 1452.1,758.0 1452.5,761.0" fill="none" stroke="#000" stroke-width="1.70" stroke-linejoin="round"/>
<polyline points="1462.9,826.3 1463.0,829.3 1463.3,832.4" fill="none" stroke="#000" stroke-width="1.70" stroke-linejoin="round"/>
<polyline points="1464.8,838.1 1465.8,840.9" fill="none" stroke="#000" stroke-width="1.70" stroke-linejoin="round"/>
<polyline points="1467.4,846.7 1467.8,849.7 1467.9,852.7 1468.0,855.8" fill="none" stroke="#000" stroke-width="1.70" stroke-linejoin="round"/>
<polyline points="1469.9,867.7 1470.8,870.5 1471.8,873.3 1472.5,876.2" fill="none" stroke="#000" stroke-width="1.70" stroke-linejoin="round"/>
<polyline points="1473.2,888.5 1473.5,891.5 1474.1,894.4 1474.9,897.3" fill="none" stroke="#000" stroke-width="1.70" stroke-linejoin="round"/>
<polyline points="1476.8,902.9 1477.5,905.8 1478.0,908.8" fill="none" stroke="#000" stroke-width="1.70" stroke-linejoin="round"/>
<polyline points="1432.0,633.4 1431.7,636.6" fill="none" stroke="#000" stroke-width="1.70" stroke-linejoin="round"/>
<polyline points="1436.8,666.2 1437.2,669.2 1438.5,671.9" fill="none" stroke="#000" stroke-width="1.70" stroke-linejoin="round"/>
<polyline points="1447.3,728.3 1448.2,731.2" fill="none" stroke="#000" stroke-width="1.70" stroke-linejoin="round"/>
<polyline points="1452.4,757.9 1453.2,760.8" fill="none" stroke="#000" stroke-width="1.70" stroke-linejoin="round"/>
<polyline points="1468.2,849.5 1469.3,852.3" fill="none" stroke="#000" stroke-width="1.70" stroke-linejoin="round"/>
<polyline points="1479.7,889.6 1480.8,892.4" fill="none" stroke="#000" stroke-width="1.70" stroke-linejoin="round"/>
<polyline points="1480.3,898.7 1479.3,902.1 1478.5,905.5 1478.4,908.7" fill="none" stroke="#000" stroke-width="1.70" stroke-linejoin="round"/>
<polyline points="1482.5,891.9 1483.8,894.6 1484.7,897.4 1485.0,900.4" fill="none" stroke="#000" stroke-width="1.70" stroke-linejoin="round"/>
<polyline points="1264.2,604.2 1267.0,602.9 1269.8,601.6 1272.6,600.4" fill="none" stroke="#000" stroke-width="1.25" stroke-linejoin="round"/>
<polyline points="1265.3,610.6 1268.0,609.0 1270.8,607.4 1273.5,605.8 1276.3,604.6" fill="none" stroke="#000" stroke-width="1.25" stroke-linejoin="round"/>
<polyline points="1282.1,603.2 1285.1,602.9 1288.1,602.8 1291.1,602.7" fill="none" stroke="#000" stroke-width="1.25" stroke-linejoin="round"/>
<polyline points="1285.7,606.2 1288.6,605.8" fill="none" stroke="#000" stroke-width="1.25" stroke-linejoin="round"/>
<polyline points="1252.8,602.6 1253.8,605.4" fill="none" stroke="#000" stroke-width="1.25" stroke-linejoin="round"/>
<polyline points="1264.2,605.3 1264.2,608.4 1265.4,611.2 1267.4,613.7" fill="none" stroke="#000" stroke-width="1.25" stroke-linejoin="round"/>
<polyline points="1278.5,607.2 1278.5,610.3 1278.8,613.3" fill="none" stroke="#000" stroke-width="1.25" stroke-linejoin="round"/>
<polyline points="1288.6,601.0 1289.5,603.8 1290.8,606.6" fill="none" stroke="#000" stroke-width="1.25" stroke-linejoin="round"/>
<polyline points="1347.6,601.5 1350.3,599.5" fill="none" stroke="#000" stroke-width="1.25" stroke-linejoin="round"/>
<polyline points="1356.3,599.3 1359.4,600.1 1362.5,600.3 1365.3,599.2" fill="none" stroke="#000" stroke-width="1.25" stroke-linejoin="round"/>
<polyline points="1354.2,604.5 1357.1,604.2 1360.1,603.9 1363.0,603.4 1365.9,602.6 1368.7,601.5" fill="none" stroke="#000" stroke-width="1.25" stroke-linejoin="round"/>
<polyline points="1372.7,606.6 1375.7,606.8 1378.7,606.4" fill="none" stroke="#000" stroke-width="1.25" stroke-linejoin="round"/>
<polyline points="1384.2,603.3 1386.8,601.0" fill="none" stroke="#000" stroke-width="1.25" stroke-linejoin="round"/>
<polyline points="1350.5,618.0 1353.5,618.1 1356.4,617.5 1359.2,616.3 1361.9,614.5 1364.6,612.6 1367.4,611.0 1370.2,610.1 1373.2,609.9 1376.3,610.1" fill="none" stroke="#000" stroke-width="1.25" stroke-linejoin="round"/>
<polyline points="1382.2,609.6 1385.0,608.4 1387.8,606.7 1390.5,604.8" fill="none" stroke="#000" stroke-width="1.25" stroke-linejoin="round"/>
<polyline points="1365.5,617.5 1368.3,616.2 1371.1,615.2 1374.0,614.5 1377.0,614.1 1379.9,613.8 1382.9,613.4 1385.8,612.6 1388.6,611.5" fill="none" stroke="#000" stroke-width="1.25" stroke-linejoin="round"/>
<polyline points="1357.9,626.0 1360.7,625.1 1363.5,623.9 1366.3,622.5 1369.1,621.2" fill="none" stroke="#000" stroke-width="1.25" stroke-linejoin="round"/>
<polyline points="1386.6,617.3 1389.4,616.2" fill="none" stroke="#000" stroke-width="1.25" stroke-linejoin="round"/>
<polyline points="1361.3,628.2 1364.1,627.1 1366.9,626.1 1369.8,625.4 1372.8,624.8 1375.7,624.2 1378.6,623.7 1381.5,622.9" fill="none" stroke="#000" stroke-width="1.25" stroke-linejoin="round"/>
<polyline points="1379.2,627.3 1382.2,627.1 1385.3,627.8 1388.4,627.9" fill="none" stroke="#000" stroke-width="1.25" stroke-linejoin="round"/>
<polyline points="1350.9,610.0 1351.8,612.8 1352.1,615.8 1351.8,619.1 1351.1,622.4" fill="none" stroke="#000" stroke-width="1.25" stroke-linejoin="round"/>
<polyline points="1357.1,608.1 1357.8,611.0 1357.9,614.1" fill="none" stroke="#000" stroke-width="1.25" stroke-linejoin="round"/>
<polyline points="1360.0,604.1 1358.4,607.7 1357.6,611.1 1358.6,613.9 1360.9,616.3 1363.4,618.6 1364.5,621.4" fill="none" stroke="#000" stroke-width="1.25" stroke-linejoin="round"/>
<polyline points="1362.5,612.7 1363.4,615.5 1365.8,617.9 1368.2,620.3 1369.3,623.1 1368.6,626.4" fill="none" stroke="#000" stroke-width="1.25" stroke-linejoin="round"/>
<polyline points="1368.6,607.7 1369.4,610.6 1370.2,613.4 1370.8,616.4" fill="none" stroke="#000" stroke-width="1.25" stroke-linejoin="round"/>
<polyline points="1380.8,607.1 1382.1,609.8 1381.9,613.0 1380.6,616.5 1379.4,620.0 1379.3,623.1 1380.6,625.8 1383.0,628.2" fill="none" stroke="#000" stroke-width="1.25" stroke-linejoin="round"/>
<polyline points="1386.3,608.5 1386.5,611.6 1386.7,614.6 1387.0,617.6 1387.6,620.6 1388.4,623.5 1389.2,626.3" fill="none" stroke="#000" stroke-width="1.25" stroke-linejoin="round"/>
<polyline points="1670.6,771.3 1673.5,770.8 1676.5,770.4 1679.4,770.0 1682.4,769.4" fill="none" stroke="#000" stroke-width="1.25" stroke-linejoin="round"/>
<polyline points="1696.4,763.4 1699.3,762.4 1702.2,761.6 1705.1,761.2" fill="none" stroke="#000" stroke-width="1.25" stroke-linejoin="round"/>
<polyline points="1691.7,770.9 1694.6,770.6 1697.6,770.1 1700.5,769.4 1703.3,768.5" fill="none" stroke="#000" stroke-width="1.25" stroke-linejoin="round"/>
<polyline points="1672.4,781.4 1675.3,780.8 1678.4,781.3" fill="none" stroke="#000" stroke-width="1.25" stroke-linejoin="round"/>
<polyline points="1684.4,781.2 1687.1,779.5 1689.7,777.2" fill="none" stroke="#000" stroke-width="1.25" stroke-linejoin="round"/>
<polyline points="1698.4,775.0 1701.5,775.5 1704.5,775.1" fill="none" stroke="#000" stroke-width="1.25" stroke-linejoin="round"/>
<polyline points="1676.5,788.0 1679.3,786.7 1682.0,785.1 1684.8,783.4 1687.5,781.9 1690.4,781.0 1693.3,780.6 1696.4,780.6 1699.4,780.5 1702.3,780.1 1705.2,779.1" fill="none" stroke="#000" stroke-width="1.25" stroke-linejoin="round"/>
<polyline points="1677.0,790.9 1680.0,790.8 1683.0,790.9 1686.1,790.9 1689.0,790.5 1691.8,789.4" fill="none" stroke="#000" stroke-width="1.25" stroke-linejoin="round"/>
<polyline points="1697.3,786.0 1700.0,784.2 1702.8,782.8 1705.7,782.0" fill="none" stroke="#000" stroke-width="1.25" stroke-linejoin="round"/>
<polyline points="1678.3,798.4 1681.3,798.1 1684.2,797.6" fill="none" stroke="#000" stroke-width="1.25" stroke-linejoin="round"/>
<polyline points="1692.6,793.7 1695.3,792.2 1698.2,791.1 1701.1,790.4 1704.0,790.0" fill="none" stroke="#000" stroke-width="1.25" stroke-linejoin="round"/>
<polyline points="1702.1,796.5 1704.8,794.3" fill="none" stroke="#000" stroke-width="1.25" stroke-linejoin="round"/>
<polyline points="1670.5,771.6 1670.6,774.7" fill="none" stroke="#000" stroke-width="1.25" stroke-linejoin="round"/>
<polyline points="1671.5,780.6 1672.3,783.5 1673.3,786.3 1674.2,789.2 1674.8,792.1 1675.1,795.1" fill="none" stroke="#000" stroke-width="1.25" stroke-linejoin="round"/>
<polyline points="1675.2,770.2 1675.5,773.2 1676.3,776.1 1677.6,778.8 1679.1,781.4 1680.7,784.1 1682.2,786.7 1683.3,789.5" fill="none" stroke="#000" stroke-width="1.25" stroke-linejoin="round"/>
<polyline points="1686.0,785.6 1687.7,788.1 1688.4,791.1" fill="none" stroke="#000" stroke-width="1.25" stroke-linejoin="round"/>
<polyline points="1689.8,765.7 1688.9,769.1 1688.3,772.4 1688.6,775.4" fill="none" stroke="#000" stroke-width="1.25" stroke-linejoin="round"/>
<polyline points="1691.5,780.8 1693.3,783.3" fill="none" stroke="#000" stroke-width="1.25" stroke-linejoin="round"/>
<polyline points="1694.5,792.3 1693.6,795.7" fill="none" stroke="#000" stroke-width="1.25" stroke-linejoin="round"/>
<polyline points="1695.6,767.1 1696.5,769.9 1696.8,772.9 1696.6,776.1 1696.4,779.3 1696.6,782.3 1697.3,785.2 1698.4,788.0 1699.6,790.7 1700.5,793.6 1700.8,796.6 1700.7,799.7" fill="none" stroke="#000" stroke-width="1.25" stroke-linejoin="round"/>
<polyline points="1703.7,767.7 1703.9,770.7 1703.6,773.9" fill="none" stroke="#000" stroke-width="1.25" stroke-linejoin="round"/>
<polyline points="1702.6,780.5 1702.4,783.7" fill="none" stroke="#000" stroke-width="1.25" stroke-linejoin="round"/>
<polyline points="1704.9,792.2 1706.5,794.9" fill="none" stroke="#000" stroke-width="1.25" stroke-linejoin="round"/>
<polyline points="1306.0,698.0 1314.5,770.0 1320.6,815.0 1344.6,932.0" fill="none" stroke="#000" stroke-width="3.00" />
<polyline points="1250.2,733.0 1306.7,715.5 1362.7,698.0 1440.0,675.0" fill="none" stroke="#000" stroke-width="2.80" />
<polyline points="1256.0,720.0 1300.0,708.0 1362.7,690.0" fill="none" stroke="#000" stroke-width="1.60" />
<polyline points="1262.0,760.0 1310.0,745.0 1368.0,728.0 1424.0,712.0" fill="none" stroke="#000" stroke-width="1.60" />
<polyline points="1320.0,700.0 1330.0,760.0 1338.0,800.0" fill="none" stroke="#000" stroke-width="1.60" />
<polyline points="1380.0,650.0 1390.0,700.0 1400.0,760.0 1412.0,830.0" fill="none" stroke="#000" stroke-width="1.60" />
<polyline points="1275.0,830.0 1322.0,818.0 1372.0,800.0 1436.0,782.0" fill="none" stroke="#000" stroke-width="1.60" />
<polyline points="1290.0,900.0 1340.0,888.0 1392.0,870.0 1445.0,855.0" fill="none" stroke="#000" stroke-width="1.60" />
<polyline points="1300.0,640.0 1310.0,700.0" fill="none" stroke="#000" stroke-width="1.60" />
<polyline points="1350.0,860.0 1360.0,932.0" fill="none" stroke="#000" stroke-width="1.60" />
<polyline points="1305.0,860.0 1318.0,932.0" fill="none" stroke="#000" stroke-width="1.60" />
</svg>
</div>

<div class="mbtn" style="top:621px;height:96px;"></div>
<div class="abs" style="left:917px;top:669px;width:48px;height:1px;background:#cfcfcf;"></div>
<svg class="abs" style="left:917px;top:621px;width:48px;height:48px" viewBox="0 0 48 48" fill="none" stroke="#555" stroke-width="1.400"><circle cx="20" cy="19.100" r="9.300"/><path d="M26.800 26 L37.400 36.100" stroke-width="1.600"/><path d="M15.500 19.100 H24.500 M20 14.600 V23.600"/></svg>
<svg class="abs" style="left:917px;top:669px;width:48px;height:48px" viewBox="0 0 48 48" fill="none" stroke="#555" stroke-width="1.400"><circle cx="20" cy="18.900" r="9.300"/><path d="M26.800 25.800 L37.400 35.900" stroke-width="1.600"/><path d="M15.500 18.900 H24.500"/></svg>
<div class="mbtn" style="top:732px;height:48px;"></div>
<svg class="abs" style="left:917px;top:732px;width:48px;height:48px" viewBox="0 0 48 48" fill="none" stroke="#666" stroke-width="1.100"><rect x="12.300" y="12.200" width="23.500" height="22.800"/><path d="M30 13 C27 16 28.500 18 26.500 20 C24 22 26 24 23 25 C20 26 21 24.500 18.500 25.500 C16.500 26.500 19 28.500 19.500 30 C18.500 32 21 33 20 35 M25 35 C26 32 27.500 31 28 28.500 C30 27 32 27.500 33 27 L35.800 27"/></svg>
<div class="mbtn" style="top:795px;height:48px;"></div>
<svg class="abs" style="left:917px;top:795px;width:48px;height:48px" viewBox="0 0 48 48"><polygon points="24.300,11.900 33.300,35.100 24.300,29 15.400,35.100" fill="#757575"/></svg>


</body></html>
